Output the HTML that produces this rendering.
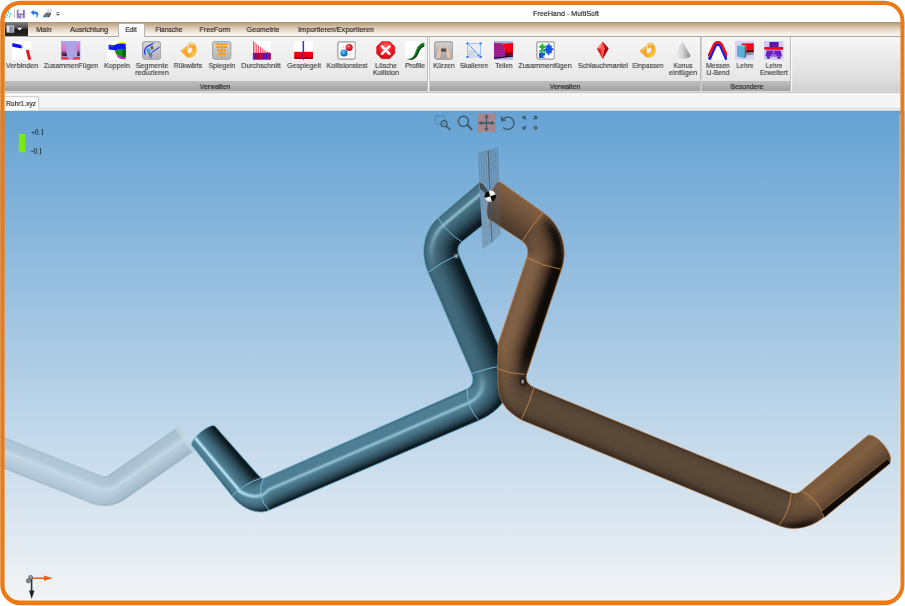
<!DOCTYPE html><html lang="de"><head><meta charset="utf-8"><title>FreeHand - MultiSoft</title><style>
html,body{margin:0;padding:0;background:#fff}
body{width:905px;height:606px;position:relative;overflow:hidden;font-family:"Liberation Sans", sans-serif}
#pg{position:absolute;left:0;top:0;width:905px;height:606px;overflow:hidden}
#pg div,#pg span,#pg svg{position:absolute}
.lb,.tb,.gl,.tt,.dt,.lg{will-change:transform}
.lb,.tb,.gl,.tt,.dt{-webkit-text-stroke:0.13px currentColor}
.lb,.tb,.gl,.tt,.dt{white-space:nowrap;line-height:1;transform-origin:50% 50%}
.lb{font-size:7.6px;color:#383838}
.tb{font-size:7.6px;color:#161616}
.gl{font-size:7.6px;color:#1c1c1c}
.tt{font-size:7.7px;color:#141414}
.dt{font-size:7.4px;color:#111}
.lg{font-family:"Liberation Serif",serif;font-size:7.2px;color:#0a0a14;line-height:1;white-space:nowrap}
</style></head><body><div id="pg"><div style="left:0;top:0;width:905px;height:22px;background:#fff"></div><svg width="70" height="16" viewBox="0 0 70 16" style="left:4px;top:6px"><circle cx="3.2" cy="4.2" r="1.0" fill="#38d4f4"/><circle cx="5.4" cy="3.4" r="0.9" fill="#38d4f4"/><circle cx="2.4" cy="6.6" r="0.9" fill="#38d4f4"/><circle cx="4.6" cy="6.2" r="1.0" fill="#38d4f4"/><circle cx="6.4" cy="8.2" r="1.0" fill="#38d4f4"/><circle cx="3.4" cy="9.2" r="1.0" fill="#38d4f4"/><circle cx="1.8" cy="11.2" r="0.9" fill="#38d4f4"/><circle cx="5.4" cy="10.6" r="0.8" fill="#38d4f4"/><rect x="10.2" y="3.6" width=".6" height="8.4" fill="#9a9a9a"/><path d="M12.8 3.8 h8 v8.4 h-8z" fill="#8a72c8"/><rect x="14.4" y="3.8" width="4.6" height="3.8" fill="#f4f2fa"/><rect x="14.6" y="9" width="4.4" height="3.2" fill="#d8d0ee"/><rect x="15.2" y="9.6" width="1.4" height="2.6" fill="#6a52b0"/><path d="M26.6 6.6 l3 -2.6 l.3 1.6 q4.400 -.6 4.400 3 q-.3 2.600 -2.400 3.600 q1.600 -2.400 .4 -3.800 q-.9 -.9 -2.300 -.6 l.3 1.600z" fill="#2a78e8"/><path d="M39.4 9.400 l3 -3 h4.600 l-2 3.400z" fill="#6a7078"/><path d="M42.600 6.200 l1.600 -2.600 h4 l-1.400 2.800z" fill="#e8e8ec" stroke="#a0a4aa" stroke-width=".3"/><path d="M39.4 9.400 h5.600 l2 -3 v1.800 l-2 3 h-5.600z" fill="#3a4048"/><rect x="40.600" y="10.2" width="3.400" height=".8" fill="#38a8e0"/><rect x="52.2" y="6.400" width="3.400" height=".7" fill="#444"/><path d="M52.2 8 h3.400 l-1.700 1.800z" fill="#444"/></svg><span class="tt" style="left:565.50px;top:10.20px;transform:translateX(-50%) scaleX(0.9306)">FreeHand - MultiSoft</span><div style="left:0;top:21.6px;width:905px;height:14.6px;background:linear-gradient(#b39474 0%,#c9b094 22%,#e3d3c0 50%,#f3ebe2 78%,#faf6f1 100%)"></div><div style="left:0;top:35.6px;width:905px;height:1.1px;background:#a9a9a9"></div><div style="left:5px;top:22px;width:22.5px;height:13.6px;background:linear-gradient(#828282,#4a4a4a 42%,#161616 56%,#2a2a2a)"></div><svg width="23" height="14" viewBox="0 0 23 14" style="left:5px;top:22px"><rect x="1.6" y="3.6" width="7.6" height="7" rx=".6" fill="#f4f4f4"/><rect x="4.2" y="4.2" width="4.4" height="5.8" fill="#8a94a6"/><rect x="2.2" y="4.2" width="1.400" height="5.800" fill="#d4d8e0"/><path d="M12 5.800 h5.200 l-2.600 2.800z" fill="#fff"/></svg><div style="left:117.6px;top:22.6px;width:27.6px;height:14.2px;background:linear-gradient(#ffffff,#f6f6f6);border:0.7px solid #b9b2aa;border-bottom:none;border-radius:2px 2px 0 0;box-sizing:border-box"></div><span class="tb" style="left:44.35px;top:25.60px;transform:translateX(-50%) scaleX(0.9290)">Main</span><span class="tb" style="left:89.00px;top:25.60px;transform:translateX(-50%) scaleX(0.9474)">Ausrichtung</span><span class="tb" style="left:131.35px;top:25.60px;transform:translateX(-50%) scaleX(0.8630)">Edit</span><span class="tb" style="left:168.50px;top:25.60px;transform:translateX(-50%) scaleX(0.8758)">Flansche</span><span class="tb" style="left:214.50px;top:25.60px;transform:translateX(-50%) scaleX(0.9297)">FreeForm</span><span class="tb" style="left:263.20px;top:25.60px;transform:translateX(-50%) scaleX(0.9308)">Geometrie</span><span class="tb" style="left:335.60px;top:25.60px;transform:translateX(-50%) scaleX(0.9551)">Importieren/Exportieren</span><div style="left:0;top:36.7px;width:905px;height:55px;background:linear-gradient(#f6f6f6,#ededed 30%,#dfdfdf 72%,#d0d0d0)"></div><div style="left:5.0px;top:37.2px;width:422.0px;height:53.7px;background:linear-gradient(#f5f5f5,#ececec 55%,#e6e6e6 80%);box-shadow:-0.8px 0 0 #c6c6c6, 0.9px 0 0 #b6b6b6, 2.1px 0 0 #fcfcfc"></div><div style="left:5.0px;top:80.8px;width:422.0px;height:10.1px;background:linear-gradient(#bdbdbd,#b4b4b4 45%,#a9a9a9 70%,#a4a4a4)"></div><span class="gl" style="left:214.80px;top:82.60px;transform:translateX(-50%) scaleX(0.9143)">Verwalten</span><div style="left:430.0px;top:37.2px;width:269.8px;height:53.7px;background:linear-gradient(#f5f5f5,#ececec 55%,#e6e6e6 80%);box-shadow:-0.8px 0 0 #c6c6c6, 0.9px 0 0 #b6b6b6, 2.1px 0 0 #fcfcfc"></div><div style="left:430.0px;top:80.8px;width:269.8px;height:10.1px;background:linear-gradient(#bdbdbd,#b4b4b4 45%,#a9a9a9 70%,#a4a4a4)"></div><span class="gl" style="left:564.80px;top:82.60px;transform:translateX(-50%) scaleX(0.9143)">Verwalten</span><div style="left:702.4px;top:37.2px;width:87.6px;height:53.7px;background:linear-gradient(#f5f5f5,#ececec 55%,#e6e6e6 80%);box-shadow:-0.8px 0 0 #c6c6c6, 0.9px 0 0 #b6b6b6, 2.1px 0 0 #fcfcfc"></div><div style="left:702.4px;top:80.8px;width:87.6px;height:10.1px;background:linear-gradient(#bdbdbd,#b4b4b4 45%,#a9a9a9 70%,#a4a4a4)"></div><span class="gl" style="left:746.60px;top:82.60px;transform:translateX(-50%) scaleX(0.8983)">Besondere</span><div style="left:0;top:90.8px;width:905px;height:4.4px;background:linear-gradient(#dedede 0,#dcdcdc 30%,#c6c6c6 32%,#c8c8c8 55%,#f0f0f0 58%,#fafafa 100%)"></div><svg width="19.4" height="18.8" viewBox="0 0 19.4 18.8" style="left:12.00px;top:41.0px"><rect width="19.4" height="18.8" fill="#fff"/><path d="M0.3 2.1 L9.4 4.1 L9.7 7.4 L0.4 5.7Z" fill="#0a12f0"/><path d="M9.6 5 l1.3 .5 v1.2 l-1.2 -.2z" fill="#5d68f4"/><path d="M13.9 9.4 L16.6 8.6 L19.3 18.8 L16.2 18.8Z" fill="#f0101a"/></svg><span class="lb" style="left:21.70px;top:61.50px;transform:translateX(-50%) scaleX(0.9502)">Verbinden</span><svg width="19.4" height="18.8" viewBox="0 0 19.4 18.8" style="left:61.20px;top:41.0px"><rect width="19.4" height="18.8" fill="#aaa4e6"/><linearGradient id="zg1" x1="0" y1="0" x2="0" y2="1"><stop offset="0" stop-color="#e884d8"/><stop offset=".55" stop-color="#d070c8"/><stop offset=".8" stop-color="#5a2860"/><stop offset="1" stop-color="#1a0818"/></linearGradient><path d="M0.6 4 L4 2.6 L6 15.2 L0.6 14.6Z" fill="url(#zg1)"/><path d="M15 2.8 L18.6 2 L18.8 14.8 L16.4 15Z" fill="url(#zg1)"/><path d="M0.4 15.6 L6.6 16.2 L8.2 18.6 L0.4 18.6Z" fill="#e83848"/><path d="M12.2 16.6 L18.9 15.8 L18.9 18.6 L11.6 18.6Z" fill="#e83848"/><rect x="6.2" y="8" width="1.2" height="1.4" fill="#f070d0"/><rect x="13" y="7.6" width="1.2" height="1.4" fill="#f070d0"/></svg><span class="lb" style="left:70.90px;top:61.50px;transform:translateX(-50%) scaleX(0.9124)">ZusammenFügen</span><svg width="19.4" height="18.8" viewBox="0 0 19.4 18.8" style="left:107.00px;top:41.0px"><rect width="19.4" height="18.8" fill="#fff"/><path d="M9.6 2.2 Q14 -0.4 18.2 1.2 L18.8 3.6 L9.4 4Z" fill="#f4f010"/><path d="M1.6 3.4 L6.6 4.2 Q12 1.6 18.6 2.8 L19 8.6 Q13 7.2 8.4 9.8 L6.4 9 L1.6 8.4Z" fill="#1018f0"/><path d="M1.6 4 L6.4 4.8 L6.4 6 L1.6 5.2Z" fill="#4a54f6"/><path d="M8.2 9.8 Q12 6.8 18.9 8.2 L18.7 16.4 Q13 16.6 9.4 13.6 Q7.6 11.6 8.2 9.8Z" fill="#10901c"/><path d="M15.6 8 Q18 8 18.9 8.4 L18.7 16.4 Q17 16.6 15.4 16Z" fill="#0a6014"/><path d="M9.4 13.6 Q13 16.6 18.7 16.2 L18.5 18.2 Q13 18.8 10.6 16Z" fill="#c81cc8"/></svg><span class="lb" style="left:116.70px;top:61.50px;transform:translateX(-50%) scaleX(0.9256)">Koppeln</span><svg width="19.4" height="18.8" viewBox="0 0 19.4 18.8" style="left:142.00px;top:41.0px"><linearGradient id="bt1" x1="0" y1="0" x2="0" y2="1"><stop offset="0" stop-color="#d6d6d6"/><stop offset="1" stop-color="#b4b4b4"/></linearGradient><rect x="0.5" y="0.4" width="18.4" height="18" rx="2.8" fill="#b9b9b9" stroke="#999" stroke-width="0.8"/><rect x="1.5" y="1.4" width="16.4" height="16" rx="2" fill="url(#bt1)"/><path d="M3.2 13.8 Q1.2 8 5.2 5.6 L11.4 2.2" fill="none" stroke="#1420e8" stroke-width="1.1"/><path d="M5 7.8 L9.2 16.8" fill="none" stroke="#1420e8" stroke-width="1"/><path d="M9.6 11.6 L17.6 6" fill="none" stroke="#1420e8" stroke-width="1"/><path d="M4.2 8.6 L7.4 7.2 L9 11 L5.8 12.2Z" fill="#28a8e8"/><path d="M8 5.4 L10.6 4.4 L11.8 8 L9.4 9Z" fill="#6a6a6a"/><path d="M7.4 12.4 L9.6 11.6 L10.6 14.6 L8.6 15.4Z" fill="#7a7a7a"/></svg><span class="lb" style="left:151.70px;top:61.50px;transform:translateX(-50%) scaleX(0.9329)">Segmente</span><span class="lb" style="left:151.70px;top:69.40px;transform:translateX(-50%) scaleX(0.9334)">reduzieren</span><svg width="19.4" height="18.8" viewBox="0 0 19.4 18.8" style="left:178.50px;top:41.0px"><linearGradient id="ag1" x1="0" y1="0" x2=".6" y2="1"><stop offset="0" stop-color="#ffcf70"/><stop offset=".4" stop-color="#f8a21e"/><stop offset=".75" stop-color="#fbb428"/><stop offset="1" stop-color="#ffdc48"/></linearGradient><path d="M9.4 2.8 Q12.5 0.6 15.8 3.6 Q19 8.6 16.2 13.8 Q13 17.6 8.1 16 L8.1 12 Q11.4 13.4 13 11.2 Q14.4 8.6 12.8 6.6 Q11.6 5.6 10.3 7.4Z" fill="url(#ag1)" stroke="#ec9a20" stroke-width=".4"/><path d="M1.8 10 L8.4 4.8 L8.4 16.3Z" fill="#f9a826" stroke="#ec9a20" stroke-width=".4"/><path d="M10.4 3.2 Q13 2 15.2 4.4" fill="none" stroke="#fff2c8" stroke-width="1" stroke-opacity=".85"/><path d="M3.6 9.8 L7.6 6.6" fill="none" stroke="#ffe9a8" stroke-width=".8" stroke-opacity=".8"/></svg><span class="lb" style="left:188.20px;top:61.50px;transform:translateX(-50%) scaleX(0.9003)">Rükwärts</span><svg width="19.4" height="18.8" viewBox="0 0 19.4 18.8" style="left:212.20px;top:41.0px"><linearGradient id="bt2" x1="0" y1="0" x2="0" y2="1"><stop offset="0" stop-color="#d6d6d6"/><stop offset="1" stop-color="#b4b4b4"/></linearGradient><rect x="0.5" y="0.4" width="18.4" height="18" rx="2.8" fill="#b9b9b9" stroke="#999" stroke-width="0.8"/><rect x="1.5" y="1.4" width="16.4" height="16" rx="2" fill="url(#bt2)"/><g fill="#f89a18"><rect x="3.4" y="2.2" width="5.2" height="1.7"/><rect x="10.6" y="2.2" width="5.2" height="1.7"/><rect x="4.2" y="5" width="4.4" height="2.2"/><rect x="10.6" y="5" width="4.4" height="2.2"/><rect x="5.2" y="8.2" width="3.4" height="2.4"/><rect x="10.6" y="8.2" width="3.4" height="2.4"/><rect x="6" y="11.6" width="2.6" height="2.4"/><rect x="10.6" y="11.6" width="2.6" height="2.4"/><rect x="8.9" y="1.6" width="1.5" height="15.4"/></g></svg><span class="lb" style="left:221.90px;top:61.50px;transform:translateX(-50%) scaleX(0.9066)">Spiegeln</span><svg width="19.4" height="18.8" viewBox="0 0 19.4 18.8" style="left:251.60px;top:41.0px"><rect width="19.4" height="18.8" fill="#fff"/><rect x="0.8" y="11.8" width="18" height="6.8" fill="#2a10d8"/><rect x="1.0" y="0.2" width="0.75" height="18.4" fill="#f01020"/><rect x="2.6" y="1.2" width="0.75" height="17.4" fill="#f01020"/><rect x="4.4" y="3.0" width="0.75" height="15.6" fill="#f01020"/><rect x="6.2" y="4.6" width="0.75" height="14.0" fill="#f01020"/><rect x="8.0" y="6.0" width="0.75" height="12.6" fill="#f01020"/><rect x="9.8" y="7.4" width="0.75" height="11.2" fill="#f01020"/><rect x="11.6" y="8.6" width="0.75" height="10.0" fill="#f01020"/><rect x="13.4" y="9.6" width="0.75" height="9.0" fill="#f01020"/><rect x="15.0" y="10.4" width="0.75" height="8.2" fill="#f01020"/><rect x="16.6" y="11.2" width="0.75" height="7.4" fill="#f01020"/><rect x="18.0" y="12.0" width="0.75" height="6.6" fill="#f01020"/></svg><span class="lb" style="left:261.30px;top:61.50px;transform:translateX(-50%) scaleX(0.9356)">Durchschnitt</span><svg width="19.4" height="18.8" viewBox="0 0 19.4 18.8" style="left:293.90px;top:41.0px"><rect width="19.4" height="18.8" fill="#fff"/><linearGradient id="gsp" x1="0" y1="0" x2="0" y2="1"><stop offset="0" stop-color="#f80010"/><stop offset=".6" stop-color="#f00010"/><stop offset="1" stop-color="#800008"/></linearGradient><rect x="0.2" y="10.8" width="19" height="7.2" fill="url(#gsp)"/><rect x="8.6" y="0" width="1.5" height="18.8" fill="#3a28f0"/></svg><span class="lb" style="left:303.60px;top:61.50px;transform:translateX(-50%) scaleX(0.9308)">Gespiegelt</span><svg width="19.4" height="18.8" viewBox="0 0 19.4 18.8" style="left:336.80px;top:41.0px"><rect x="0.4" y="0.4" width="18.6" height="18" rx="2.6" fill="#cfcfcf" stroke="#9d9d9d" stroke-width="0.8"/><rect x="1.9" y="1.9" width="15.6" height="15" rx="1.2" fill="#fbfbfb"/><radialGradient id="kr" cx=".4" cy=".35" r=".7"><stop offset="0" stop-color="#ff8a80"/><stop offset=".5" stop-color="#e8202a"/><stop offset="1" stop-color="#b00818"/></radialGradient><radialGradient id="kb" cx=".4" cy=".35" r=".7"><stop offset="0" stop-color="#8ad0f8"/><stop offset=".5" stop-color="#1a88d8"/><stop offset="1" stop-color="#0a58a0"/></radialGradient><path d="M5.6 5.2 l1.6 1.4 M7.2 5.2 l-1.6 1.4 M12.6 12.4 l1.6 1.4 M14.2 12.4 l-1.6 1.4" stroke="#a8a8a8" stroke-width=".5"/><circle cx="12.2" cy="6.6" r="3.5" fill="url(#kr)"/><circle cx="7" cy="12" r="3.6" fill="url(#kb)"/></svg><span class="lb" style="left:346.50px;top:61.50px;transform:translateX(-50%) scaleX(0.9249)">Kollisionstest</span><svg width="19.4" height="18.8" viewBox="0 0 19.4 18.8" style="left:376.30px;top:41.0px"><radialGradient id="lr" cx=".5" cy=".3" r=".75"><stop offset="0" stop-color="#ff6a6a"/><stop offset=".55" stop-color="#f01822"/><stop offset="1" stop-color="#c00814"/></radialGradient><path d="M5.8 0.6 H13.6 L18.8 5.6 V12.6 L13.6 17.8 H5.8 L0.6 12.6 V5.6Z" fill="url(#lr)" stroke="#d01018" stroke-width=".5"/><path d="M6 5.4 L13.4 12.8 M13.4 5.4 L6 12.8" stroke="#fff" stroke-width="2.6" stroke-linecap="round"/></svg><span class="lb" style="left:386.00px;top:61.50px;transform:translateX(-50%) scaleX(0.8857)">Lösche</span><span class="lb" style="left:386.00px;top:69.40px;transform:translateX(-50%) scaleX(0.9193)">Kollision</span><svg width="19.4" height="18.8" viewBox="0 0 19.4 18.8" style="left:405.20px;top:41.0px"><rect width="19.4" height="18.8" fill="#fff"/><path d="M1.2 18.6 C8 18.6 9.5 14 11 9.5 C12.5 5 15 2.2 19.3 1.4 L19.3 5.6 C16 6.2 14.6 8.8 13.4 12 C11.8 16.6 9 18.8 4 18.8Z" fill="#0b6412"/><path d="M2.4 18.2 C8.6 18 10.2 13.6 11.6 9.6 C13 5.6 15.4 3 19.2 2.2" fill="none" stroke="#37a23e" stroke-width=".9"/><path d="M5 18.6 C9.6 18.4 11.6 16 13.2 11.8 C14.6 8.4 16.2 6 19.3 5.3" fill="none" stroke="#063008" stroke-width=".8"/></svg><span class="lb" style="left:414.90px;top:61.50px;transform:translateX(-50%) scaleX(0.9289)">Profile</span><svg width="19.4" height="18.8" viewBox="0 0 19.4 18.8" style="left:434.00px;top:41.0px"><linearGradient id="kz" x1="0" y1="0" x2="0" y2="1"><stop offset="0" stop-color="#cfcfcf"/><stop offset="1" stop-color="#a4a4a4"/></linearGradient><rect x="0.4" y="0.4" width="18.6" height="18" rx="2.8" fill="#b0b0b0" stroke="#959595" stroke-width="0.8"/><rect x="1.4" y="1.4" width="16.6" height="16" rx="2" fill="url(#kz)"/><rect x="5.6" y="7.4" width="8.2" height="3.4" rx=".6" fill="#5a5048"/><path d="M2.4 17 Q3.6 11 5 7.6 Q5.8 3.6 7 3.6 Q7.8 5 7 8.4 Q7.6 12 5.8 17Z" fill="#e6c4ac"/><path d="M17 17 Q15.8 11 14.4 7.6 Q13.6 3.6 12.4 3.6 Q11.6 5 12.4 8.4 Q11.8 12 13.6 17Z" fill="#e6c4ac"/></svg><span class="lb" style="left:443.70px;top:61.50px;transform:translateX(-50%) scaleX(0.8935)">Kürzen</span><svg width="19.4" height="18.8" viewBox="0 0 19.4 18.8" style="left:464.30px;top:41.0px"><rect x="3.4" y="2.4" width="13.2" height="13.6" fill="#e9ecf4" stroke="#7aa0f0" stroke-width=".6"/><rect x="3.6" y="9.2" width="8" height="6.6" fill="#d2d6de"/><path d="M4.4 3.2 L15.2 14.8" stroke="#4a88f0" stroke-width=".8"/><path d="M15.8 15.4 l-3 -.8 l2.2 -2.2Z" fill="#4a88f0"/><g fill="#2a70f0"><rect x="2.4" y="1.4" width="2" height="2"/><rect x="15.6" y="1.4" width="2" height="2"/><rect x="2.4" y="15" width="2" height="2"/><rect x="15.6" y="15" width="2" height="2"/></g></svg><span class="lb" style="left:474.00px;top:61.50px;transform:translateX(-50%) scaleX(0.8841)">Skalieren</span><svg width="19.4" height="18.8" viewBox="0 0 19.4 18.8" style="left:494.00px;top:41.0px"><rect width="19.4" height="18.8" fill="#b8b0ec"/><linearGradient id="tl1" x1="0" y1="0" x2="0" y2="1"><stop offset="0" stop-color="#f80010"/><stop offset=".6" stop-color="#f00010"/><stop offset="1" stop-color="#300008"/></linearGradient><path d="M0 1.8 L9.6 2.6 L11.4 15 L0 16.6Z" fill="#7a18b8"/><path d="M9.6 2.6 L19.4 2 L19.4 14.6 L11.4 15Z" fill="url(#tl1)"/><path d="M0 16.6 L11.4 15 L19.4 14.6 L19.4 15.6 L0 18Z" fill="#1a0828"/><path d="M0 3.2 L10.4 3.7" stroke="#f02838" stroke-width=".6"/><path d="M0 5.1 L10.4 5.6" stroke="#f02838" stroke-width=".6"/><path d="M0 7.0 L10.4 7.5" stroke="#f02838" stroke-width=".6"/><path d="M0 8.9 L10.4 9.4" stroke="#f02838" stroke-width=".6"/><path d="M0 10.8 L10.4 11.3" stroke="#f02838" stroke-width=".6"/><path d="M0 12.7 L10.4 13.2" stroke="#f02838" stroke-width=".6"/><path d="M0 14.6 L10.4 15.1" stroke="#f02838" stroke-width=".6"/></svg><span class="lb" style="left:503.70px;top:61.50px;transform:translateX(-50%) scaleX(0.8819)">Teilen</span><svg width="19.4" height="18.8" viewBox="0 0 19.4 18.8" style="left:535.70px;top:41.0px"><rect x="0.4" y="0.4" width="18.6" height="18" rx="2.6" fill="#cfcfcf" stroke="#9d9d9d" stroke-width="0.8"/><rect x="1.9" y="1.9" width="15.6" height="15" rx="1.2" fill="#fbfbfb"/><path d="M9.8 4.4 h2 q-.6 -2 .9 -2 q1.5 0 .9 2 h2.2 v3 q2 -.6 2 .9 q0 1.5 -2 .9 v3 h-2.4 q.7 2 -.8 2 q-1.5 0 -.8 -2 h-2 v-2.6 q-2 .7 -2 -.8 q0 -1.5 2 -.8z" fill="#1858e0"/><path d="M3 12 h2 q-.6 -1.8 .8 -1.8 q1.4 0 .8 1.8 h2.4 v2.6 q-1.8 -.6 -1.8 .8 q0 1.4 1.8 .8 v.8 h-6z" fill="#1858e0"/><path d="M3.4 4.6 h2 q-.6 -2 .9 -2 q1.5 0 .9 2 h2.2 v2.6 q-1.900 -.6 -1.900 .9 q0 1.500 1.900 .9 v2.6 h-2.2 q.6 -1.900 -.9 -1.900 q-1.500 0 -.9 1.900 h-2 v-2.6 q1.900 .6 1.900 -.9 q0 -1.500 -1.900 -.9z" fill="#18b828"/></svg><span class="lb" style="left:545.40px;top:61.50px;transform:translateX(-50%) scaleX(0.9353)">Zusammenfügen</span><svg width="19.4" height="18.8" viewBox="0 0 19.4 18.8" style="left:593.00px;top:41.0px"><path d="M9.7 0.8 L15.6 7.4 L9.7 18 L3.8 7.4Z" fill="#e81420"/><path d="M9.7 0.8 L12 7.4 L9.7 18 L7.4 7.4Z" fill="#ff5a50"/><path d="M9.7 0.8 L7.4 7.4 L3.8 7.4Z" fill="#ff9a8a"/><path d="M9.7 0.8 L12 7.4 L15.6 7.4Z" fill="#c00814"/><path d="M12 7.4 L15.6 7.4 L9.7 18Z" fill="#a00410"/></svg><span class="lb" style="left:602.70px;top:61.50px;transform:translateX(-50%) scaleX(0.9251)">Schlauchmantel</span><svg width="19.4" height="18.8" viewBox="0 0 19.4 18.8" style="left:638.30px;top:41.0px"><linearGradient id="ag2" x1="0" y1="0" x2=".6" y2="1"><stop offset="0" stop-color="#ffcf70"/><stop offset=".4" stop-color="#f8a21e"/><stop offset=".75" stop-color="#fbb428"/><stop offset="1" stop-color="#ffdc48"/></linearGradient><path d="M9.4 2.8 Q12.5 0.6 15.8 3.6 Q19 8.6 16.2 13.8 Q13 17.6 8.1 16 L8.1 12 Q11.4 13.4 13 11.2 Q14.4 8.6 12.8 6.6 Q11.6 5.6 10.3 7.4Z" fill="url(#ag2)" stroke="#ec9a20" stroke-width=".4"/><path d="M1.8 10 L8.4 4.8 L8.4 16.3Z" fill="#f9a826" stroke="#ec9a20" stroke-width=".4"/><path d="M10.4 3.2 Q13 2 15.2 4.4" fill="none" stroke="#fff2c8" stroke-width="1" stroke-opacity=".85"/><path d="M3.6 9.8 L7.6 6.6" fill="none" stroke="#ffe9a8" stroke-width=".8" stroke-opacity=".8"/></svg><span class="lb" style="left:648.00px;top:61.50px;transform:translateX(-50%) scaleX(0.8796)">Einpassen</span><svg width="19.4" height="18.8" viewBox="0 0 19.4 18.8" style="left:673.30px;top:41.0px"><linearGradient id="kn" x1="0" y1="0" x2="1" y2="0"><stop offset="0" stop-color="#f4f4f4"/><stop offset=".45" stop-color="#d8d8d8"/><stop offset="1" stop-color="#8e8e8e"/></linearGradient><path d="M9.4 0.4 L17.6 14.6 Q17.4 17.6 9.8 17.8 Q2 17.6 1.6 14.8Z" fill="url(#kn)"/></svg><span class="lb" style="left:683.00px;top:61.50px;transform:translateX(-50%) scaleX(0.8725)">Konus</span><span class="lb" style="left:683.00px;top:69.40px;transform:translateX(-50%) scaleX(0.9609)">einfügen</span><svg width="19.4" height="18.8" viewBox="0 0 19.4 18.8" style="left:708.00px;top:41.0px"><rect width="19.4" height="18.8" fill="#fff"/><path d="M1.2 18.6 L7 5.4 Q9.8 1.2 12.8 5.4 L18.6 18.6" fill="none" stroke="#1020e8" stroke-width="3"/><path d="M0.4 15.4 L6 3.6 Q9.8 -1.6 13.8 3.6 L19.2 15.4" fill="none" stroke="#f01018" stroke-width="2.6"/><path d="M4.6 18.6 L9 9.6 Q9.8 8.6 10.8 9.6 L15.2 18.6" fill="none" stroke="#fff" stroke-width="1.4"/></svg><span class="lb" style="left:717.70px;top:61.50px;transform:translateX(-50%) scaleX(0.8949)">Messen</span><span class="lb" style="left:717.70px;top:69.40px;transform:translateX(-50%) scaleX(0.8932)">U-Bend</span><svg width="19.4" height="18.8" viewBox="0 0 19.4 18.8" style="left:735.00px;top:41.0px"><rect width="19.4" height="18.8" fill="#d8d4fa"/><path d="M2 4.4 L9.4 5.6 L9.4 17.2 L2 15.4Z" fill="#58b0d8"/><path d="M9.4 5.6 L11.2 4.8 L11.2 16 L9.4 17.2Z" fill="#2a7898"/><path d="M2 4.4 L4 3.4 L11.2 4.8 L9.4 5.6Z" fill="#90d0e8"/><path d="M6.6 2.4 L18.8 2.2 L18.8 8.6 L11.2 9.2 L11.2 4.8 L6.6 4Z" fill="#f00818"/><path d="M11.2 9.2 L18.8 8.6 L18.8 11 L11.2 12Z" fill="#600010"/><path d="M11.2 12 L18.8 11 L18.8 13.4 L11.2 14.6Z" fill="#8890a8"/></svg><span class="lb" style="left:744.70px;top:61.50px;transform:translateX(-50%) scaleX(0.8746)">Lehre</span><svg width="19.4" height="18.8" viewBox="0 0 19.4 18.8" style="left:764.30px;top:41.0px"><rect width="19.4" height="18.8" fill="#d0ccf8"/><rect x="5.4" y="1" width="9.2" height="5" fill="#5a18a8"/><path d="M2.6 9.6 L16.8 9.6 L18 15.6 L1.4 15.6Z" fill="#6a20c0"/><rect x="3" y="15.6" width="3" height="2" fill="#4a1090"/><rect x="13.4" y="15.6" width="3" height="2" fill="#4a1090"/><rect x="7" y="13" width="5.4" height="2" fill="#9a60e0"/><rect x="0.4" y="6" width="18.6" height="2.8" fill="#f00818"/><circle cx="9.7" cy="11.2" r=".7" fill="#fff"/></svg><span class="lb" style="left:774.00px;top:61.50px;transform:translateX(-50%) scaleX(0.8643)">Lehre</span><span class="lb" style="left:774.00px;top:69.40px;transform:translateX(-50%) scaleX(0.9343)">Erweitert</span><div style="left:0;top:95.1px;width:905px;height:16px;background:#f5f5f5"></div><svg width="905" height="20" viewBox="0 94 905 20" style="left:0;top:94px"><rect x="0" y="108.4" width="905" height="0.9" fill="#c2c2c2"/><rect x="0" y="109.3" width="905" height="1.2" fill="#fdfdfd"/><rect x="0" y="110.4" width="905" height="0.6" fill="#aeb4bc"/><path d="M4 110.4 V96.7 H38.7 V109.3" fill="#fff" stroke="#c4c4c4" stroke-width="0.9"/><rect x="4" y="108" width="34.2" height="2.4" fill="#fff"/></svg><span class="dt" style="left:20.50px;top:99.60px;transform:translateX(-50%) scaleX(0.9014)">Rohr1.xyz</span><div style="left:0;top:110.9px;width:905px;height:489.6px;background:linear-gradient(#65a2d3,#f2f4f6)"></div><svg width="905" height="606" viewBox="0 0 905 606" style="left:0;top:0"><defs><linearGradient id="g0" gradientUnits="userSpaceOnUse" x1="48.87" y1="454.81" x2="37.97" y2="482.23"><stop offset="0" stop-color="#a3bbcc"/><stop offset="0.0417" stop-color="#abc3d3"/><stop offset="0.0833" stop-color="#afc6d6"/><stop offset="0.125" stop-color="#b0c7d7"/><stop offset="0.167" stop-color="#b1c8d8"/><stop offset="0.208" stop-color="#b2c8d8"/><stop offset="0.25" stop-color="#b3c9d9"/><stop offset="0.292" stop-color="#b4cada"/><stop offset="0.333" stop-color="#b7cddc"/><stop offset="0.375" stop-color="#bcd0df"/><stop offset="0.417" stop-color="#c0d4e3"/><stop offset="0.458" stop-color="#c6d9e7"/><stop offset="0.5" stop-color="#c1d4e3"/><stop offset="0.542" stop-color="#bdd1e0"/><stop offset="0.583" stop-color="#bcd0df"/><stop offset="0.625" stop-color="#bacfde"/><stop offset="0.667" stop-color="#b9cedd"/><stop offset="0.708" stop-color="#b8cddc"/><stop offset="0.75" stop-color="#b6cbda"/><stop offset="0.792" stop-color="#b4c9d9"/><stop offset="0.833" stop-color="#b2c8d7"/><stop offset="0.875" stop-color="#b0c6d6"/><stop offset="0.917" stop-color="#adc4d4"/><stop offset="0.958" stop-color="#aac0d1"/><stop offset="1" stop-color="#a6bdce"/></linearGradient><linearGradient id="g1" gradientUnits="userSpaceOnUse" x1="102.58" y1="476.14" x2="93.06" y2="504.02"><stop offset="0" stop-color="#a3bbcc"/><stop offset="0.0417" stop-color="#abc2d3"/><stop offset="0.0833" stop-color="#afc6d6"/><stop offset="0.125" stop-color="#b0c7d7"/><stop offset="0.167" stop-color="#b1c7d8"/><stop offset="0.208" stop-color="#b2c8d8"/><stop offset="0.25" stop-color="#b3c9d9"/><stop offset="0.292" stop-color="#b4cada"/><stop offset="0.333" stop-color="#b7ccdc"/><stop offset="0.375" stop-color="#bbd0df"/><stop offset="0.417" stop-color="#c0d4e3"/><stop offset="0.458" stop-color="#c6d9e7"/><stop offset="0.5" stop-color="#c1d4e3"/><stop offset="0.542" stop-color="#bdd1e0"/><stop offset="0.583" stop-color="#bcd0df"/><stop offset="0.625" stop-color="#bacfde"/><stop offset="0.667" stop-color="#b9cedd"/><stop offset="0.708" stop-color="#b7ccdb"/><stop offset="0.75" stop-color="#b5cbda"/><stop offset="0.792" stop-color="#b3c9d8"/><stop offset="0.833" stop-color="#b2c7d7"/><stop offset="0.875" stop-color="#b0c6d5"/><stop offset="0.917" stop-color="#adc3d3"/><stop offset="0.958" stop-color="#a9c0d0"/><stop offset="1" stop-color="#a5bcce"/></linearGradient><linearGradient id="g2" gradientUnits="userSpaceOnUse" x1="103.17" y1="476.31" x2="96.44" y2="504.99"><stop offset="0" stop-color="#a2bacc"/><stop offset="0.0417" stop-color="#abc2d2"/><stop offset="0.0833" stop-color="#afc5d6"/><stop offset="0.125" stop-color="#afc6d6"/><stop offset="0.167" stop-color="#b0c7d7"/><stop offset="0.208" stop-color="#b1c8d8"/><stop offset="0.25" stop-color="#b2c8d8"/><stop offset="0.292" stop-color="#b3c9d9"/><stop offset="0.333" stop-color="#b7ccdc"/><stop offset="0.375" stop-color="#bbd0df"/><stop offset="0.417" stop-color="#bfd3e2"/><stop offset="0.458" stop-color="#c5d8e6"/><stop offset="0.5" stop-color="#c1d4e3"/><stop offset="0.542" stop-color="#bdd1e0"/><stop offset="0.583" stop-color="#bbd0df"/><stop offset="0.625" stop-color="#bacedd"/><stop offset="0.667" stop-color="#b8cddc"/><stop offset="0.708" stop-color="#b6ccdb"/><stop offset="0.75" stop-color="#b4cad9"/><stop offset="0.792" stop-color="#b2c8d8"/><stop offset="0.833" stop-color="#b1c6d6"/><stop offset="0.875" stop-color="#afc5d5"/><stop offset="0.917" stop-color="#acc2d3"/><stop offset="0.958" stop-color="#a8bfd0"/><stop offset="1" stop-color="#a4bbcc"/></linearGradient><linearGradient id="g3" gradientUnits="userSpaceOnUse" x1="103.77" y1="476.42" x2="99.90" y2="505.62"><stop offset="0" stop-color="#a2bacb"/><stop offset="0.0417" stop-color="#aac1d2"/><stop offset="0.0833" stop-color="#aec5d5"/><stop offset="0.125" stop-color="#afc6d6"/><stop offset="0.167" stop-color="#b0c6d6"/><stop offset="0.208" stop-color="#b1c7d7"/><stop offset="0.25" stop-color="#b1c8d8"/><stop offset="0.292" stop-color="#b2c8d8"/><stop offset="0.333" stop-color="#b6cbdb"/><stop offset="0.375" stop-color="#bacfde"/><stop offset="0.417" stop-color="#bfd3e2"/><stop offset="0.458" stop-color="#c5d8e6"/><stop offset="0.5" stop-color="#c1d4e3"/><stop offset="0.542" stop-color="#bdd1e0"/><stop offset="0.583" stop-color="#bbcfde"/><stop offset="0.625" stop-color="#b9cedd"/><stop offset="0.667" stop-color="#b7ccdc"/><stop offset="0.708" stop-color="#b6cbda"/><stop offset="0.75" stop-color="#b4c9d9"/><stop offset="0.792" stop-color="#b2c7d7"/><stop offset="0.833" stop-color="#b0c6d6"/><stop offset="0.875" stop-color="#adc4d4"/><stop offset="0.917" stop-color="#abc1d2"/><stop offset="0.958" stop-color="#a7becf"/><stop offset="1" stop-color="#a3bacc"/></linearGradient><linearGradient id="g4" gradientUnits="userSpaceOnUse" x1="104.39" y1="476.47" x2="103.41" y2="505.91"><stop offset="0" stop-color="#a2bacb"/><stop offset="0.0417" stop-color="#a9c1d1"/><stop offset="0.0833" stop-color="#adc4d5"/><stop offset="0.125" stop-color="#aec5d5"/><stop offset="0.167" stop-color="#afc6d6"/><stop offset="0.208" stop-color="#b0c6d7"/><stop offset="0.25" stop-color="#b1c7d7"/><stop offset="0.292" stop-color="#b2c8d8"/><stop offset="0.333" stop-color="#b6cbdb"/><stop offset="0.375" stop-color="#bacfde"/><stop offset="0.417" stop-color="#bfd3e2"/><stop offset="0.458" stop-color="#c5d8e6"/><stop offset="0.5" stop-color="#c1d4e3"/><stop offset="0.542" stop-color="#bdd0df"/><stop offset="0.583" stop-color="#bbcfde"/><stop offset="0.625" stop-color="#b9cddc"/><stop offset="0.667" stop-color="#b7ccdb"/><stop offset="0.708" stop-color="#b5cada"/><stop offset="0.75" stop-color="#b3c8d8"/><stop offset="0.792" stop-color="#b1c7d6"/><stop offset="0.833" stop-color="#afc5d5"/><stop offset="0.875" stop-color="#acc3d3"/><stop offset="0.917" stop-color="#aac0d1"/><stop offset="0.958" stop-color="#a6bdce"/><stop offset="1" stop-color="#a2b9ca"/></linearGradient><linearGradient id="g5" gradientUnits="userSpaceOnUse" x1="105.00" y1="476.46" x2="106.92" y2="505.85"><stop offset="0" stop-color="#a1b9cb"/><stop offset="0.0417" stop-color="#a9c0d1"/><stop offset="0.0833" stop-color="#adc4d4"/><stop offset="0.125" stop-color="#aec4d5"/><stop offset="0.167" stop-color="#afc5d5"/><stop offset="0.208" stop-color="#afc6d6"/><stop offset="0.25" stop-color="#b0c6d7"/><stop offset="0.292" stop-color="#b1c7d7"/><stop offset="0.333" stop-color="#b5cada"/><stop offset="0.375" stop-color="#bacede"/><stop offset="0.417" stop-color="#bed2e1"/><stop offset="0.458" stop-color="#c5d8e6"/><stop offset="0.5" stop-color="#c1d4e3"/><stop offset="0.542" stop-color="#bcd0df"/><stop offset="0.583" stop-color="#bacede"/><stop offset="0.625" stop-color="#b8cddc"/><stop offset="0.667" stop-color="#b6cbdb"/><stop offset="0.708" stop-color="#b4c9d9"/><stop offset="0.75" stop-color="#b2c8d7"/><stop offset="0.792" stop-color="#b0c6d6"/><stop offset="0.833" stop-color="#aec4d4"/><stop offset="0.875" stop-color="#abc2d2"/><stop offset="0.917" stop-color="#a8bfd0"/><stop offset="0.958" stop-color="#a5bccd"/><stop offset="1" stop-color="#a1b8ca"/></linearGradient><linearGradient id="g6" gradientUnits="userSpaceOnUse" x1="105.61" y1="476.39" x2="110.42" y2="505.44"><stop offset="0" stop-color="#a1b9ca"/><stop offset="0.0417" stop-color="#a8c0d1"/><stop offset="0.0833" stop-color="#acc3d4"/><stop offset="0.125" stop-color="#adc4d4"/><stop offset="0.167" stop-color="#aec4d5"/><stop offset="0.208" stop-color="#afc5d5"/><stop offset="0.25" stop-color="#b0c6d6"/><stop offset="0.292" stop-color="#b1c7d7"/><stop offset="0.333" stop-color="#b4cada"/><stop offset="0.375" stop-color="#b9cedd"/><stop offset="0.417" stop-color="#bed2e1"/><stop offset="0.458" stop-color="#c4d7e6"/><stop offset="0.5" stop-color="#c1d4e2"/><stop offset="0.542" stop-color="#bcd0df"/><stop offset="0.583" stop-color="#bacedd"/><stop offset="0.625" stop-color="#b8ccdc"/><stop offset="0.667" stop-color="#b5cbda"/><stop offset="0.708" stop-color="#b3c9d8"/><stop offset="0.75" stop-color="#b1c7d7"/><stop offset="0.792" stop-color="#afc5d5"/><stop offset="0.833" stop-color="#adc3d3"/><stop offset="0.875" stop-color="#aac1d2"/><stop offset="0.917" stop-color="#a7bfcf"/><stop offset="0.958" stop-color="#a3bbcc"/><stop offset="1" stop-color="#9fb7c8"/></linearGradient><linearGradient id="g7" gradientUnits="userSpaceOnUse" x1="106.22" y1="476.26" x2="113.85" y2="504.69"><stop offset="0" stop-color="#a0b8ca"/><stop offset="0.0417" stop-color="#a8bfd0"/><stop offset="0.0833" stop-color="#acc2d3"/><stop offset="0.125" stop-color="#acc3d4"/><stop offset="0.167" stop-color="#adc4d4"/><stop offset="0.208" stop-color="#aec5d5"/><stop offset="0.25" stop-color="#afc5d5"/><stop offset="0.292" stop-color="#b0c6d6"/><stop offset="0.333" stop-color="#b4c9d9"/><stop offset="0.375" stop-color="#b9cedd"/><stop offset="0.417" stop-color="#bed2e1"/><stop offset="0.458" stop-color="#c4d7e5"/><stop offset="0.5" stop-color="#c1d4e2"/><stop offset="0.542" stop-color="#bccfde"/><stop offset="0.583" stop-color="#bacedd"/><stop offset="0.625" stop-color="#b7ccdb"/><stop offset="0.667" stop-color="#b5cad9"/><stop offset="0.708" stop-color="#b2c8d8"/><stop offset="0.75" stop-color="#b0c6d6"/><stop offset="0.792" stop-color="#aec4d4"/><stop offset="0.833" stop-color="#acc2d3"/><stop offset="0.875" stop-color="#a9c0d1"/><stop offset="0.917" stop-color="#a6bece"/><stop offset="0.958" stop-color="#a2bacb"/><stop offset="1" stop-color="#9eb6c8"/></linearGradient><linearGradient id="g8" gradientUnits="userSpaceOnUse" x1="106.80" y1="476.07" x2="117.20" y2="503.61"><stop offset="0" stop-color="#a0b8ca"/><stop offset="0.0417" stop-color="#a7bfd0"/><stop offset="0.0833" stop-color="#abc2d3"/><stop offset="0.125" stop-color="#acc3d3"/><stop offset="0.167" stop-color="#adc3d4"/><stop offset="0.208" stop-color="#aec4d4"/><stop offset="0.25" stop-color="#aec5d5"/><stop offset="0.292" stop-color="#afc5d5"/><stop offset="0.333" stop-color="#b3c9d9"/><stop offset="0.375" stop-color="#b8cddc"/><stop offset="0.417" stop-color="#bdd1e0"/><stop offset="0.458" stop-color="#c4d7e5"/><stop offset="0.5" stop-color="#c1d4e2"/><stop offset="0.542" stop-color="#bccfde"/><stop offset="0.583" stop-color="#b9cddc"/><stop offset="0.625" stop-color="#b7cbdb"/><stop offset="0.667" stop-color="#b4c9d9"/><stop offset="0.708" stop-color="#b2c7d7"/><stop offset="0.75" stop-color="#afc5d5"/><stop offset="0.792" stop-color="#adc3d4"/><stop offset="0.833" stop-color="#abc1d2"/><stop offset="0.875" stop-color="#a8bfd0"/><stop offset="0.917" stop-color="#a5bdce"/><stop offset="0.958" stop-color="#a1b9ca"/><stop offset="1" stop-color="#9db5c6"/></linearGradient><linearGradient id="g9" gradientUnits="userSpaceOnUse" x1="107.37" y1="475.83" x2="120.42" y2="502.20"><stop offset="0" stop-color="#a0b8c9"/><stop offset="0.0417" stop-color="#a7becf"/><stop offset="0.0833" stop-color="#aac1d2"/><stop offset="0.125" stop-color="#abc2d3"/><stop offset="0.167" stop-color="#acc3d3"/><stop offset="0.208" stop-color="#adc3d4"/><stop offset="0.25" stop-color="#aec4d4"/><stop offset="0.292" stop-color="#afc5d5"/><stop offset="0.333" stop-color="#b3c8d8"/><stop offset="0.375" stop-color="#b8cddc"/><stop offset="0.417" stop-color="#bdd1e0"/><stop offset="0.458" stop-color="#c4d7e5"/><stop offset="0.5" stop-color="#c1d4e2"/><stop offset="0.542" stop-color="#bbcfde"/><stop offset="0.583" stop-color="#b9cddc"/><stop offset="0.625" stop-color="#b6cbda"/><stop offset="0.667" stop-color="#b3c9d8"/><stop offset="0.708" stop-color="#b1c7d7"/><stop offset="0.75" stop-color="#aec5d5"/><stop offset="0.792" stop-color="#acc3d3"/><stop offset="0.833" stop-color="#aac1d1"/><stop offset="0.875" stop-color="#a7bfcf"/><stop offset="0.917" stop-color="#a4bccd"/><stop offset="0.958" stop-color="#a0b8c9"/><stop offset="1" stop-color="#9cb4c6"/></linearGradient><linearGradient id="g10" gradientUnits="userSpaceOnUse" x1="107.91" y1="475.53" x2="123.49" y2="500.47"><stop offset="0" stop-color="#9fb7c9"/><stop offset="0.0417" stop-color="#a6becf"/><stop offset="0.0833" stop-color="#aac1d2"/><stop offset="0.125" stop-color="#abc1d2"/><stop offset="0.167" stop-color="#acc2d3"/><stop offset="0.208" stop-color="#acc3d3"/><stop offset="0.25" stop-color="#adc3d4"/><stop offset="0.292" stop-color="#aec4d4"/><stop offset="0.333" stop-color="#b2c8d8"/><stop offset="0.375" stop-color="#b8ccdc"/><stop offset="0.417" stop-color="#bdd1e0"/><stop offset="0.458" stop-color="#c3d6e5"/><stop offset="0.5" stop-color="#c1d4e2"/><stop offset="0.542" stop-color="#bbcfde"/><stop offset="0.583" stop-color="#b8ccdc"/><stop offset="0.625" stop-color="#b6cada"/><stop offset="0.667" stop-color="#b3c8d8"/><stop offset="0.708" stop-color="#b0c6d6"/><stop offset="0.75" stop-color="#adc4d4"/><stop offset="0.792" stop-color="#abc2d2"/><stop offset="0.833" stop-color="#a9c0d0"/><stop offset="0.875" stop-color="#a6becf"/><stop offset="0.917" stop-color="#a3bbcc"/><stop offset="0.958" stop-color="#9fb7c8"/><stop offset="1" stop-color="#9bb3c4"/></linearGradient><linearGradient id="g11" gradientUnits="userSpaceOnUse" x1="143.32" y1="451.06" x2="160.00" y2="475.05"><stop offset="0" stop-color="#9fb7c9"/><stop offset="0.0417" stop-color="#a6bdcf"/><stop offset="0.0833" stop-color="#a9c0d1"/><stop offset="0.125" stop-color="#aac1d2"/><stop offset="0.167" stop-color="#abc2d2"/><stop offset="0.208" stop-color="#acc2d3"/><stop offset="0.25" stop-color="#adc3d3"/><stop offset="0.292" stop-color="#aec4d4"/><stop offset="0.333" stop-color="#b2c8d7"/><stop offset="0.375" stop-color="#b7ccdc"/><stop offset="0.417" stop-color="#bdd1e0"/><stop offset="0.458" stop-color="#c3d6e5"/><stop offset="0.5" stop-color="#c0d4e2"/><stop offset="0.542" stop-color="#bbcedd"/><stop offset="0.583" stop-color="#b8ccdb"/><stop offset="0.625" stop-color="#b5cada"/><stop offset="0.667" stop-color="#b2c8d8"/><stop offset="0.708" stop-color="#b0c6d6"/><stop offset="0.75" stop-color="#adc4d4"/><stop offset="0.792" stop-color="#aac1d2"/><stop offset="0.833" stop-color="#a8bfd0"/><stop offset="0.875" stop-color="#a6bdce"/><stop offset="0.917" stop-color="#a2bacb"/><stop offset="0.958" stop-color="#9eb6c8"/><stop offset="1" stop-color="#9ab2c4"/></linearGradient><linearGradient id="b0" gradientUnits="userSpaceOnUse" x1="236.29" y1="450.15" x2="211.87" y2="470.66"><stop offset="0" stop-color="#0c1b22"/><stop offset="0.025" stop-color="#0c1b22"/><stop offset="0.05" stop-color="#0c1b22"/><stop offset="0.075" stop-color="#0c1b22"/><stop offset="0.1" stop-color="#0d1c23"/><stop offset="0.125" stop-color="#102128"/><stop offset="0.15" stop-color="#14262f"/><stop offset="0.175" stop-color="#182c35"/><stop offset="0.2" stop-color="#1b323c"/><stop offset="0.225" stop-color="#1f3742"/><stop offset="0.25" stop-color="#233d49"/><stop offset="0.275" stop-color="#26424f"/><stop offset="0.3" stop-color="#2a4855"/><stop offset="0.325" stop-color="#2d4d5a"/><stop offset="0.35" stop-color="#305160"/><stop offset="0.375" stop-color="#345665"/><stop offset="0.4" stop-color="#375b6b"/><stop offset="0.425" stop-color="#395f70"/><stop offset="0.45" stop-color="#3c6374"/><stop offset="0.475" stop-color="#3f6779"/><stop offset="0.5" stop-color="#416b7d"/><stop offset="0.525" stop-color="#446e81"/><stop offset="0.55" stop-color="#467285"/><stop offset="0.575" stop-color="#487588"/><stop offset="0.6" stop-color="#4a788c"/><stop offset="0.625" stop-color="#4c7b8f"/><stop offset="0.65" stop-color="#528195"/><stop offset="0.675" stop-color="#6391a6"/><stop offset="0.7" stop-color="#87b4c6"/><stop offset="0.725" stop-color="#b3deee"/><stop offset="0.75" stop-color="#bde7f8"/><stop offset="0.775" stop-color="#97c3d5"/><stop offset="0.8" stop-color="#6897ab"/><stop offset="0.825" stop-color="#538397"/><stop offset="0.85" stop-color="#4e7e93"/><stop offset="0.875" stop-color="#4e7e93"/><stop offset="0.9" stop-color="#4d7d92"/><stop offset="0.925" stop-color="#4b798e"/><stop offset="0.95" stop-color="#477487"/><stop offset="0.975" stop-color="#416b7d"/><stop offset="1" stop-color="#30515f"/></linearGradient><linearGradient id="b1" gradientUnits="userSpaceOnUse" x1="257.74" y1="474.45" x2="233.00" y2="497.21"><stop offset="0" stop-color="#0c1b22"/><stop offset="0.025" stop-color="#0c1b22"/><stop offset="0.05" stop-color="#0c1b22"/><stop offset="0.075" stop-color="#0d1b22"/><stop offset="0.1" stop-color="#0f1e26"/><stop offset="0.125" stop-color="#12242c"/><stop offset="0.15" stop-color="#162a33"/><stop offset="0.175" stop-color="#1a303a"/><stop offset="0.2" stop-color="#1e3640"/><stop offset="0.225" stop-color="#223c47"/><stop offset="0.25" stop-color="#26414d"/><stop offset="0.275" stop-color="#294754"/><stop offset="0.3" stop-color="#2d4c59"/><stop offset="0.325" stop-color="#30515f"/><stop offset="0.35" stop-color="#335665"/><stop offset="0.375" stop-color="#365a6a"/><stop offset="0.4" stop-color="#395f6f"/><stop offset="0.425" stop-color="#3c6374"/><stop offset="0.45" stop-color="#3f6778"/><stop offset="0.475" stop-color="#416a7d"/><stop offset="0.5" stop-color="#436e81"/><stop offset="0.525" stop-color="#467184"/><stop offset="0.55" stop-color="#487488"/><stop offset="0.575" stop-color="#49778b"/><stop offset="0.6" stop-color="#4c7a8e"/><stop offset="0.625" stop-color="#4f7e93"/><stop offset="0.65" stop-color="#59889d"/><stop offset="0.675" stop-color="#73a1b4"/><stop offset="0.7" stop-color="#9ac6d8"/><stop offset="0.725" stop-color="#b7e2f2"/><stop offset="0.75" stop-color="#acd7e8"/><stop offset="0.775" stop-color="#82afc2"/><stop offset="0.8" stop-color="#5f8ea2"/><stop offset="0.825" stop-color="#518196"/><stop offset="0.85" stop-color="#4e7e93"/><stop offset="0.875" stop-color="#4e7e93"/><stop offset="0.9" stop-color="#4d7c90"/><stop offset="0.925" stop-color="#4a788c"/><stop offset="0.95" stop-color="#467285"/><stop offset="0.975" stop-color="#40687a"/><stop offset="1" stop-color="#2e4d5b"/></linearGradient><linearGradient id="b2" gradientUnits="userSpaceOnUse" x1="258.11" y1="474.86" x2="235.41" y2="499.85"><stop offset="0" stop-color="#0c1b22"/><stop offset="0.025" stop-color="#0c1b22"/><stop offset="0.05" stop-color="#0c1b22"/><stop offset="0.075" stop-color="#0e1e25"/><stop offset="0.1" stop-color="#13252d"/><stop offset="0.125" stop-color="#172b34"/><stop offset="0.15" stop-color="#1c323c"/><stop offset="0.175" stop-color="#203843"/><stop offset="0.2" stop-color="#243e4a"/><stop offset="0.225" stop-color="#284451"/><stop offset="0.25" stop-color="#2b4a57"/><stop offset="0.275" stop-color="#2f4f5d"/><stop offset="0.3" stop-color="#325463"/><stop offset="0.325" stop-color="#355969"/><stop offset="0.35" stop-color="#385d6e"/><stop offset="0.375" stop-color="#3b6273"/><stop offset="0.4" stop-color="#3e6677"/><stop offset="0.425" stop-color="#416a7c"/><stop offset="0.45" stop-color="#436d80"/><stop offset="0.475" stop-color="#457184"/><stop offset="0.5" stop-color="#477487"/><stop offset="0.525" stop-color="#49778b"/><stop offset="0.55" stop-color="#4b798e"/><stop offset="0.575" stop-color="#4d7c91"/><stop offset="0.6" stop-color="#507f94"/><stop offset="0.625" stop-color="#59889d"/><stop offset="0.65" stop-color="#709eb2"/><stop offset="0.675" stop-color="#96c2d4"/><stop offset="0.7" stop-color="#b3deee"/><stop offset="0.725" stop-color="#acd7e8"/><stop offset="0.75" stop-color="#85b3c5"/><stop offset="0.775" stop-color="#6291a5"/><stop offset="0.8" stop-color="#528297"/><stop offset="0.825" stop-color="#4e7e93"/><stop offset="0.85" stop-color="#4e7e93"/><stop offset="0.875" stop-color="#4d7c91"/><stop offset="0.9" stop-color="#4a788d"/><stop offset="0.925" stop-color="#477487"/><stop offset="0.95" stop-color="#436d7f"/><stop offset="0.975" stop-color="#3c6374"/><stop offset="1" stop-color="#294653"/></linearGradient><linearGradient id="b3" gradientUnits="userSpaceOnUse" x1="258.47" y1="475.27" x2="238.01" y2="502.32"><stop offset="0" stop-color="#0c1b22"/><stop offset="0.025" stop-color="#0c1b22"/><stop offset="0.05" stop-color="#0e1d24"/><stop offset="0.075" stop-color="#13242d"/><stop offset="0.1" stop-color="#182c35"/><stop offset="0.125" stop-color="#1d333e"/><stop offset="0.15" stop-color="#213a46"/><stop offset="0.175" stop-color="#25414d"/><stop offset="0.2" stop-color="#294754"/><stop offset="0.225" stop-color="#2d4d5b"/><stop offset="0.25" stop-color="#315261"/><stop offset="0.275" stop-color="#345767"/><stop offset="0.3" stop-color="#385c6c"/><stop offset="0.325" stop-color="#3b6171"/><stop offset="0.35" stop-color="#3d6576"/><stop offset="0.375" stop-color="#40697b"/><stop offset="0.4" stop-color="#436d7f"/><stop offset="0.425" stop-color="#457083"/><stop offset="0.45" stop-color="#477387"/><stop offset="0.475" stop-color="#49768a"/><stop offset="0.5" stop-color="#4b798d"/><stop offset="0.525" stop-color="#4c7b90"/><stop offset="0.55" stop-color="#4e7d92"/><stop offset="0.575" stop-color="#508095"/><stop offset="0.6" stop-color="#58889c"/><stop offset="0.625" stop-color="#6e9cb0"/><stop offset="0.65" stop-color="#92bed0"/><stop offset="0.675" stop-color="#afdaeb"/><stop offset="0.7" stop-color="#abd6e7"/><stop offset="0.725" stop-color="#88b5c7"/><stop offset="0.75" stop-color="#6493a7"/><stop offset="0.775" stop-color="#538398"/><stop offset="0.8" stop-color="#4f7f94"/><stop offset="0.825" stop-color="#4e7e93"/><stop offset="0.85" stop-color="#4d7c91"/><stop offset="0.875" stop-color="#4b798d"/><stop offset="0.9" stop-color="#487588"/><stop offset="0.925" stop-color="#446f82"/><stop offset="0.95" stop-color="#3f6779"/><stop offset="0.975" stop-color="#385c6d"/><stop offset="1" stop-color="#243f4b"/></linearGradient><linearGradient id="b4" gradientUnits="userSpaceOnUse" x1="258.84" y1="475.69" x2="240.78" y2="504.58"><stop offset="0" stop-color="#0c1b22"/><stop offset="0.025" stop-color="#0d1c22"/><stop offset="0.05" stop-color="#12232b"/><stop offset="0.075" stop-color="#182c35"/><stop offset="0.1" stop-color="#1d343f"/><stop offset="0.125" stop-color="#223c47"/><stop offset="0.15" stop-color="#27434f"/><stop offset="0.175" stop-color="#2b4957"/><stop offset="0.2" stop-color="#2f4f5e"/><stop offset="0.225" stop-color="#335564"/><stop offset="0.25" stop-color="#365a6a"/><stop offset="0.275" stop-color="#3a5f70"/><stop offset="0.3" stop-color="#3d6475"/><stop offset="0.325" stop-color="#3f687a"/><stop offset="0.35" stop-color="#426c7e"/><stop offset="0.375" stop-color="#447082"/><stop offset="0.4" stop-color="#477386"/><stop offset="0.425" stop-color="#49768a"/><stop offset="0.45" stop-color="#4a798d"/><stop offset="0.475" stop-color="#4c7b90"/><stop offset="0.5" stop-color="#4d7d92"/><stop offset="0.525" stop-color="#4e7e93"/><stop offset="0.55" stop-color="#508095"/><stop offset="0.575" stop-color="#58879c"/><stop offset="0.6" stop-color="#6d9baf"/><stop offset="0.625" stop-color="#8fbbce"/><stop offset="0.65" stop-color="#acd7e8"/><stop offset="0.675" stop-color="#a9d4e5"/><stop offset="0.7" stop-color="#88b5c8"/><stop offset="0.725" stop-color="#6695a9"/><stop offset="0.75" stop-color="#548498"/><stop offset="0.775" stop-color="#4f7f94"/><stop offset="0.8" stop-color="#4e7e93"/><stop offset="0.825" stop-color="#4d7c91"/><stop offset="0.85" stop-color="#4b798d"/><stop offset="0.875" stop-color="#487589"/><stop offset="0.9" stop-color="#457083"/><stop offset="0.925" stop-color="#416a7c"/><stop offset="0.95" stop-color="#3b6272"/><stop offset="0.975" stop-color="#335665"/><stop offset="1" stop-color="#1f3843"/></linearGradient><linearGradient id="b5" gradientUnits="userSpaceOnUse" x1="259.20" y1="476.10" x2="243.72" y2="506.62"><stop offset="0" stop-color="#0c1b22"/><stop offset="0.025" stop-color="#0f1f27"/><stop offset="0.05" stop-color="#172b34"/><stop offset="0.075" stop-color="#1d343f"/><stop offset="0.1" stop-color="#233d49"/><stop offset="0.125" stop-color="#284551"/><stop offset="0.15" stop-color="#2d4c59"/><stop offset="0.175" stop-color="#315261"/><stop offset="0.2" stop-color="#355867"/><stop offset="0.225" stop-color="#385d6d"/><stop offset="0.25" stop-color="#3b6273"/><stop offset="0.275" stop-color="#3f6778"/><stop offset="0.3" stop-color="#416b7d"/><stop offset="0.325" stop-color="#446f81"/><stop offset="0.35" stop-color="#467286"/><stop offset="0.375" stop-color="#487589"/><stop offset="0.4" stop-color="#4a788d"/><stop offset="0.425" stop-color="#4c7b8f"/><stop offset="0.45" stop-color="#4d7d91"/><stop offset="0.475" stop-color="#4e7e93"/><stop offset="0.5" stop-color="#4e7e93"/><stop offset="0.525" stop-color="#508095"/><stop offset="0.55" stop-color="#57879c"/><stop offset="0.575" stop-color="#6b9aae"/><stop offset="0.6" stop-color="#8cb9cb"/><stop offset="0.625" stop-color="#a8d4e5"/><stop offset="0.65" stop-color="#a7d2e3"/><stop offset="0.675" stop-color="#88b5c8"/><stop offset="0.7" stop-color="#6795a9"/><stop offset="0.725" stop-color="#558499"/><stop offset="0.75" stop-color="#4f7f94"/><stop offset="0.775" stop-color="#4e7e93"/><stop offset="0.8" stop-color="#4d7c91"/><stop offset="0.825" stop-color="#4b798d"/><stop offset="0.85" stop-color="#487589"/><stop offset="0.875" stop-color="#457084"/><stop offset="0.9" stop-color="#416b7d"/><stop offset="0.925" stop-color="#3d6475"/><stop offset="0.95" stop-color="#375b6b"/><stop offset="0.975" stop-color="#2f4f5d"/><stop offset="1" stop-color="#1b313b"/></linearGradient><linearGradient id="b6" gradientUnits="userSpaceOnUse" x1="259.57" y1="476.51" x2="246.82" y2="508.39"><stop offset="0" stop-color="#0c1b22"/><stop offset="0.025" stop-color="#14262f"/><stop offset="0.05" stop-color="#1c333d"/><stop offset="0.075" stop-color="#233d49"/><stop offset="0.1" stop-color="#294653"/><stop offset="0.125" stop-color="#2e4d5b"/><stop offset="0.15" stop-color="#325463"/><stop offset="0.175" stop-color="#365a6a"/><stop offset="0.2" stop-color="#3a6070"/><stop offset="0.225" stop-color="#3d6576"/><stop offset="0.25" stop-color="#40697b"/><stop offset="0.275" stop-color="#436e80"/><stop offset="0.3" stop-color="#467184"/><stop offset="0.325" stop-color="#487588"/><stop offset="0.35" stop-color="#4a788c"/><stop offset="0.375" stop-color="#4c7b8f"/><stop offset="0.4" stop-color="#4d7c91"/><stop offset="0.425" stop-color="#4e7e93"/><stop offset="0.45" stop-color="#4e7e93"/><stop offset="0.475" stop-color="#4e7e93"/><stop offset="0.5" stop-color="#508095"/><stop offset="0.525" stop-color="#57879b"/><stop offset="0.55" stop-color="#6a99ad"/><stop offset="0.575" stop-color="#8ab7c9"/><stop offset="0.6" stop-color="#a5d1e2"/><stop offset="0.625" stop-color="#a4d0e1"/><stop offset="0.65" stop-color="#87b4c7"/><stop offset="0.675" stop-color="#6796aa"/><stop offset="0.7" stop-color="#558599"/><stop offset="0.725" stop-color="#4f7f94"/><stop offset="0.75" stop-color="#4e7e92"/><stop offset="0.775" stop-color="#4c7c90"/><stop offset="0.8" stop-color="#4a798d"/><stop offset="0.825" stop-color="#487589"/><stop offset="0.85" stop-color="#457084"/><stop offset="0.875" stop-color="#426b7e"/><stop offset="0.9" stop-color="#3e6577"/><stop offset="0.925" stop-color="#395e6e"/><stop offset="0.95" stop-color="#335564"/><stop offset="0.975" stop-color="#2a4855"/><stop offset="1" stop-color="#162a32"/></linearGradient><linearGradient id="b7" gradientUnits="userSpaceOnUse" x1="259.93" y1="476.93" x2="250.08" y2="509.86"><stop offset="0" stop-color="#0c1b22"/><stop offset="0.025" stop-color="#192f38"/><stop offset="0.05" stop-color="#223c47"/><stop offset="0.075" stop-color="#294653"/><stop offset="0.1" stop-color="#2e4e5d"/><stop offset="0.125" stop-color="#335665"/><stop offset="0.15" stop-color="#385c6c"/><stop offset="0.175" stop-color="#3b6273"/><stop offset="0.2" stop-color="#3f6779"/><stop offset="0.225" stop-color="#426c7e"/><stop offset="0.25" stop-color="#457083"/><stop offset="0.275" stop-color="#477487"/><stop offset="0.3" stop-color="#49778b"/><stop offset="0.325" stop-color="#4b7a8e"/><stop offset="0.35" stop-color="#4d7c91"/><stop offset="0.375" stop-color="#4e7d92"/><stop offset="0.4" stop-color="#4e7e93"/><stop offset="0.425" stop-color="#4e7e93"/><stop offset="0.45" stop-color="#4e7e93"/><stop offset="0.475" stop-color="#508095"/><stop offset="0.5" stop-color="#57869b"/><stop offset="0.525" stop-color="#6a98ac"/><stop offset="0.55" stop-color="#88b5c8"/><stop offset="0.575" stop-color="#a2cedf"/><stop offset="0.6" stop-color="#a1cdde"/><stop offset="0.625" stop-color="#86b3c5"/><stop offset="0.65" stop-color="#6795a9"/><stop offset="0.675" stop-color="#558599"/><stop offset="0.7" stop-color="#4f7f94"/><stop offset="0.725" stop-color="#4e7d92"/><stop offset="0.75" stop-color="#4c7b90"/><stop offset="0.775" stop-color="#4a788c"/><stop offset="0.8" stop-color="#487488"/><stop offset="0.825" stop-color="#457083"/><stop offset="0.85" stop-color="#426b7e"/><stop offset="0.875" stop-color="#3e6677"/><stop offset="0.9" stop-color="#3a5f70"/><stop offset="0.925" stop-color="#345867"/><stop offset="0.95" stop-color="#2e4e5c"/><stop offset="0.975" stop-color="#26414d"/><stop offset="1" stop-color="#11232a"/></linearGradient><linearGradient id="b8" gradientUnits="userSpaceOnUse" x1="260.29" y1="477.34" x2="253.48" y2="510.98"><stop offset="0" stop-color="#0d1c23"/><stop offset="0.025" stop-color="#1f3742"/><stop offset="0.05" stop-color="#284551"/><stop offset="0.075" stop-color="#2f4f5d"/><stop offset="0.1" stop-color="#345766"/><stop offset="0.125" stop-color="#395e6e"/><stop offset="0.15" stop-color="#3d6475"/><stop offset="0.175" stop-color="#40697b"/><stop offset="0.2" stop-color="#436e81"/><stop offset="0.225" stop-color="#467286"/><stop offset="0.25" stop-color="#49768a"/><stop offset="0.275" stop-color="#4b798e"/><stop offset="0.3" stop-color="#4d7c91"/><stop offset="0.325" stop-color="#4d7d92"/><stop offset="0.35" stop-color="#4e7e93"/><stop offset="0.375" stop-color="#4e7e93"/><stop offset="0.4" stop-color="#4e7e93"/><stop offset="0.425" stop-color="#4e7e93"/><stop offset="0.45" stop-color="#508095"/><stop offset="0.475" stop-color="#57869b"/><stop offset="0.5" stop-color="#6997ab"/><stop offset="0.525" stop-color="#87b4c6"/><stop offset="0.55" stop-color="#9fcbdd"/><stop offset="0.575" stop-color="#9ecadb"/><stop offset="0.6" stop-color="#84b1c3"/><stop offset="0.625" stop-color="#6695a9"/><stop offset="0.65" stop-color="#558599"/><stop offset="0.675" stop-color="#4f7f94"/><stop offset="0.7" stop-color="#4d7d92"/><stop offset="0.725" stop-color="#4c7a8f"/><stop offset="0.75" stop-color="#4a778b"/><stop offset="0.775" stop-color="#477487"/><stop offset="0.8" stop-color="#447083"/><stop offset="0.825" stop-color="#416b7d"/><stop offset="0.85" stop-color="#3e6677"/><stop offset="0.875" stop-color="#3a6071"/><stop offset="0.9" stop-color="#355969"/><stop offset="0.925" stop-color="#30515f"/><stop offset="0.95" stop-color="#294754"/><stop offset="0.975" stop-color="#213a45"/><stop offset="1" stop-color="#0e1d24"/></linearGradient><linearGradient id="b9" gradientUnits="userSpaceOnUse" x1="260.66" y1="477.75" x2="256.98" y2="511.69"><stop offset="0" stop-color="#102129"/><stop offset="0.025" stop-color="#25404c"/><stop offset="0.05" stop-color="#2e4d5b"/><stop offset="0.075" stop-color="#345767"/><stop offset="0.1" stop-color="#395f70"/><stop offset="0.125" stop-color="#3e6677"/><stop offset="0.15" stop-color="#426b7d"/><stop offset="0.175" stop-color="#457083"/><stop offset="0.2" stop-color="#487488"/><stop offset="0.225" stop-color="#4a788c"/><stop offset="0.25" stop-color="#4c7b90"/><stop offset="0.275" stop-color="#4d7d92"/><stop offset="0.3" stop-color="#4e7e93"/><stop offset="0.325" stop-color="#4e7e93"/><stop offset="0.35" stop-color="#4e7e93"/><stop offset="0.375" stop-color="#4e7e93"/><stop offset="0.4" stop-color="#4e7e93"/><stop offset="0.425" stop-color="#508095"/><stop offset="0.45" stop-color="#56869b"/><stop offset="0.475" stop-color="#6897ab"/><stop offset="0.5" stop-color="#85b2c5"/><stop offset="0.525" stop-color="#9dc9da"/><stop offset="0.55" stop-color="#9bc7d8"/><stop offset="0.575" stop-color="#81aec1"/><stop offset="0.6" stop-color="#6594a8"/><stop offset="0.625" stop-color="#558499"/><stop offset="0.65" stop-color="#4f7f94"/><stop offset="0.675" stop-color="#4d7c91"/><stop offset="0.7" stop-color="#4b7a8e"/><stop offset="0.725" stop-color="#49768a"/><stop offset="0.75" stop-color="#477386"/><stop offset="0.775" stop-color="#446f82"/><stop offset="0.8" stop-color="#416a7d"/><stop offset="0.825" stop-color="#3e6577"/><stop offset="0.85" stop-color="#3a6070"/><stop offset="0.875" stop-color="#365969"/><stop offset="0.9" stop-color="#315261"/><stop offset="0.925" stop-color="#2b4a57"/><stop offset="0.95" stop-color="#253f4b"/><stop offset="0.975" stop-color="#1c323c"/><stop offset="1" stop-color="#0c1b22"/></linearGradient><linearGradient id="b10" gradientUnits="userSpaceOnUse" x1="261.04" y1="478.15" x2="260.54" y2="511.94"><stop offset="0" stop-color="#162a32"/><stop offset="0.025" stop-color="#2b4957"/><stop offset="0.05" stop-color="#335665"/><stop offset="0.075" stop-color="#3a5f70"/><stop offset="0.1" stop-color="#3e6778"/><stop offset="0.125" stop-color="#436d7f"/><stop offset="0.15" stop-color="#467285"/><stop offset="0.175" stop-color="#49768a"/><stop offset="0.2" stop-color="#4b7a8e"/><stop offset="0.225" stop-color="#4d7c91"/><stop offset="0.25" stop-color="#4e7e93"/><stop offset="0.275" stop-color="#4e7e93"/><stop offset="0.3" stop-color="#4e7e93"/><stop offset="0.325" stop-color="#4e7e93"/><stop offset="0.35" stop-color="#4e7e93"/><stop offset="0.375" stop-color="#4e7e93"/><stop offset="0.4" stop-color="#508094"/><stop offset="0.425" stop-color="#56869a"/><stop offset="0.45" stop-color="#6796aa"/><stop offset="0.475" stop-color="#83b0c3"/><stop offset="0.5" stop-color="#9ac6d8"/><stop offset="0.525" stop-color="#98c4d5"/><stop offset="0.55" stop-color="#7eacbf"/><stop offset="0.575" stop-color="#6492a6"/><stop offset="0.6" stop-color="#548499"/><stop offset="0.625" stop-color="#4f7e93"/><stop offset="0.65" stop-color="#4d7c90"/><stop offset="0.675" stop-color="#4a798d"/><stop offset="0.7" stop-color="#487589"/><stop offset="0.725" stop-color="#467285"/><stop offset="0.75" stop-color="#436e81"/><stop offset="0.775" stop-color="#406a7c"/><stop offset="0.8" stop-color="#3d6576"/><stop offset="0.825" stop-color="#3a5f70"/><stop offset="0.85" stop-color="#365969"/><stop offset="0.875" stop-color="#315362"/><stop offset="0.9" stop-color="#2c4b59"/><stop offset="0.925" stop-color="#26424f"/><stop offset="0.95" stop-color="#203843"/><stop offset="0.975" stop-color="#172b33"/><stop offset="1" stop-color="#0c1b22"/></linearGradient><linearGradient id="b11" gradientUnits="userSpaceOnUse" x1="261.47" y1="478.48" x2="264.10" y2="511.67"><stop offset="0" stop-color="#1c323d"/><stop offset="0.025" stop-color="#315261"/><stop offset="0.05" stop-color="#395e6f"/><stop offset="0.075" stop-color="#3f6779"/><stop offset="0.1" stop-color="#436e80"/><stop offset="0.125" stop-color="#477387"/><stop offset="0.15" stop-color="#4a788c"/><stop offset="0.175" stop-color="#4c7b90"/><stop offset="0.2" stop-color="#4d7d92"/><stop offset="0.225" stop-color="#4e7e93"/><stop offset="0.25" stop-color="#4e7e93"/><stop offset="0.275" stop-color="#4e7e93"/><stop offset="0.3" stop-color="#4e7e93"/><stop offset="0.325" stop-color="#4e7e93"/><stop offset="0.35" stop-color="#4e7e93"/><stop offset="0.375" stop-color="#4f7f94"/><stop offset="0.4" stop-color="#56859a"/><stop offset="0.425" stop-color="#6695a9"/><stop offset="0.45" stop-color="#81afc1"/><stop offset="0.475" stop-color="#97c3d5"/><stop offset="0.5" stop-color="#94c1d2"/><stop offset="0.525" stop-color="#7ca9bc"/><stop offset="0.55" stop-color="#6291a5"/><stop offset="0.575" stop-color="#548498"/><stop offset="0.6" stop-color="#4e7e93"/><stop offset="0.625" stop-color="#4c7b8f"/><stop offset="0.65" stop-color="#4a788c"/><stop offset="0.675" stop-color="#487488"/><stop offset="0.7" stop-color="#457184"/><stop offset="0.725" stop-color="#436d7f"/><stop offset="0.75" stop-color="#40697b"/><stop offset="0.775" stop-color="#3d6475"/><stop offset="0.8" stop-color="#395f6f"/><stop offset="0.825" stop-color="#355969"/><stop offset="0.85" stop-color="#315362"/><stop offset="0.875" stop-color="#2d4c5a"/><stop offset="0.9" stop-color="#274451"/><stop offset="0.925" stop-color="#223b46"/><stop offset="0.95" stop-color="#1a303a"/><stop offset="0.975" stop-color="#12232b"/><stop offset="1" stop-color="#0c1b22"/></linearGradient><linearGradient id="b12" gradientUnits="userSpaceOnUse" x1="261.97" y1="478.69" x2="267.56" y2="510.83"><stop offset="0" stop-color="#223c47"/><stop offset="0.025" stop-color="#375b6a"/><stop offset="0.05" stop-color="#3e6678"/><stop offset="0.075" stop-color="#436e81"/><stop offset="0.1" stop-color="#477488"/><stop offset="0.125" stop-color="#4b798d"/><stop offset="0.15" stop-color="#4d7c91"/><stop offset="0.175" stop-color="#4e7e93"/><stop offset="0.2" stop-color="#4e7e93"/><stop offset="0.225" stop-color="#4e7e93"/><stop offset="0.25" stop-color="#4e7e93"/><stop offset="0.275" stop-color="#4e7e93"/><stop offset="0.3" stop-color="#4e7e93"/><stop offset="0.325" stop-color="#4e7e93"/><stop offset="0.35" stop-color="#4f7f94"/><stop offset="0.375" stop-color="#558599"/><stop offset="0.4" stop-color="#6594a8"/><stop offset="0.425" stop-color="#80adc0"/><stop offset="0.45" stop-color="#94c1d2"/><stop offset="0.475" stop-color="#91bdcf"/><stop offset="0.5" stop-color="#79a7ba"/><stop offset="0.525" stop-color="#6190a4"/><stop offset="0.55" stop-color="#538397"/><stop offset="0.575" stop-color="#4e7d92"/><stop offset="0.6" stop-color="#4b7a8e"/><stop offset="0.625" stop-color="#49778a"/><stop offset="0.65" stop-color="#477387"/><stop offset="0.675" stop-color="#447083"/><stop offset="0.7" stop-color="#426c7e"/><stop offset="0.725" stop-color="#3f6779"/><stop offset="0.75" stop-color="#3c6374"/><stop offset="0.775" stop-color="#395e6e"/><stop offset="0.8" stop-color="#355868"/><stop offset="0.825" stop-color="#315261"/><stop offset="0.85" stop-color="#2d4c59"/><stop offset="0.875" stop-color="#284551"/><stop offset="0.9" stop-color="#223c48"/><stop offset="0.925" stop-color="#1c333d"/><stop offset="0.95" stop-color="#152831"/><stop offset="0.975" stop-color="#0e1d24"/><stop offset="1" stop-color="#0c1b22"/></linearGradient><linearGradient id="b13" gradientUnits="userSpaceOnUse" x1="262.51" y1="478.76" x2="270.91" y2="509.56"><stop offset="0" stop-color="#284552"/><stop offset="0.025" stop-color="#3c6374"/><stop offset="0.05" stop-color="#436d80"/><stop offset="0.075" stop-color="#487488"/><stop offset="0.1" stop-color="#4b7a8e"/><stop offset="0.125" stop-color="#4d7d92"/><stop offset="0.15" stop-color="#4e7e93"/><stop offset="0.175" stop-color="#4e7e93"/><stop offset="0.2" stop-color="#4e7e93"/><stop offset="0.225" stop-color="#4e7e93"/><stop offset="0.25" stop-color="#4e7e93"/><stop offset="0.275" stop-color="#4e7e93"/><stop offset="0.3" stop-color="#4e7e93"/><stop offset="0.325" stop-color="#4f7f94"/><stop offset="0.35" stop-color="#548499"/><stop offset="0.375" stop-color="#6493a7"/><stop offset="0.4" stop-color="#7dabbe"/><stop offset="0.425" stop-color="#91bed0"/><stop offset="0.45" stop-color="#8ebacd"/><stop offset="0.475" stop-color="#76a4b8"/><stop offset="0.5" stop-color="#5f8ea3"/><stop offset="0.525" stop-color="#528296"/><stop offset="0.55" stop-color="#4d7c91"/><stop offset="0.575" stop-color="#4a788d"/><stop offset="0.6" stop-color="#487589"/><stop offset="0.625" stop-color="#467285"/><stop offset="0.65" stop-color="#446e81"/><stop offset="0.675" stop-color="#416a7c"/><stop offset="0.7" stop-color="#3e6678"/><stop offset="0.725" stop-color="#3b6172"/><stop offset="0.75" stop-color="#385d6d"/><stop offset="0.775" stop-color="#345767"/><stop offset="0.8" stop-color="#305160"/><stop offset="0.825" stop-color="#2c4b59"/><stop offset="0.85" stop-color="#284451"/><stop offset="0.875" stop-color="#233d49"/><stop offset="0.9" stop-color="#1d353f"/><stop offset="0.925" stop-color="#172b34"/><stop offset="0.95" stop-color="#102028"/><stop offset="0.975" stop-color="#0c1b22"/><stop offset="1" stop-color="#0c1b22"/></linearGradient><linearGradient id="b14" gradientUnits="userSpaceOnUse" x1="263.05" y1="478.68" x2="274.20" y2="508.15"><stop offset="0" stop-color="#2e4e5c"/><stop offset="0.025" stop-color="#416a7c"/><stop offset="0.05" stop-color="#477487"/><stop offset="0.075" stop-color="#4b7a8e"/><stop offset="0.1" stop-color="#4d7d92"/><stop offset="0.125" stop-color="#4e7e93"/><stop offset="0.15" stop-color="#4e7e93"/><stop offset="0.175" stop-color="#4e7e93"/><stop offset="0.2" stop-color="#4e7e93"/><stop offset="0.225" stop-color="#4e7e93"/><stop offset="0.25" stop-color="#4e7e93"/><stop offset="0.275" stop-color="#4e7e93"/><stop offset="0.3" stop-color="#4f7f94"/><stop offset="0.325" stop-color="#548398"/><stop offset="0.35" stop-color="#6291a5"/><stop offset="0.375" stop-color="#7ba9bc"/><stop offset="0.4" stop-color="#8ebbcd"/><stop offset="0.425" stop-color="#8bb7ca"/><stop offset="0.45" stop-color="#74a2b5"/><stop offset="0.475" stop-color="#5e8da1"/><stop offset="0.5" stop-color="#518195"/><stop offset="0.525" stop-color="#4c7b8f"/><stop offset="0.55" stop-color="#4a778b"/><stop offset="0.575" stop-color="#477488"/><stop offset="0.6" stop-color="#457184"/><stop offset="0.625" stop-color="#436d7f"/><stop offset="0.65" stop-color="#40697b"/><stop offset="0.675" stop-color="#3d6576"/><stop offset="0.7" stop-color="#3a6071"/><stop offset="0.725" stop-color="#375b6b"/><stop offset="0.75" stop-color="#335665"/><stop offset="0.775" stop-color="#30505f"/><stop offset="0.8" stop-color="#2c4a58"/><stop offset="0.825" stop-color="#274450"/><stop offset="0.85" stop-color="#233d48"/><stop offset="0.875" stop-color="#1e3540"/><stop offset="0.9" stop-color="#182d36"/><stop offset="0.925" stop-color="#12232b"/><stop offset="0.95" stop-color="#0d1c23"/><stop offset="0.975" stop-color="#0c1b22"/><stop offset="1" stop-color="#0c1b22"/></linearGradient><linearGradient id="b15" gradientUnits="userSpaceOnUse" x1="364.33" y1="434.07" x2="377.34" y2="464.02"><stop offset="0" stop-color="#315361"/><stop offset="0.025" stop-color="#436e80"/><stop offset="0.05" stop-color="#49778b"/><stop offset="0.075" stop-color="#4d7d92"/><stop offset="0.1" stop-color="#4e7e93"/><stop offset="0.125" stop-color="#4e7e93"/><stop offset="0.15" stop-color="#4e7e93"/><stop offset="0.175" stop-color="#4e7e93"/><stop offset="0.2" stop-color="#4e7e93"/><stop offset="0.225" stop-color="#4e7e93"/><stop offset="0.25" stop-color="#4e7e93"/><stop offset="0.275" stop-color="#4e7e93"/><stop offset="0.3" stop-color="#508094"/><stop offset="0.325" stop-color="#57879b"/><stop offset="0.35" stop-color="#6c9aae"/><stop offset="0.375" stop-color="#88b5c7"/><stop offset="0.4" stop-color="#92bed0"/><stop offset="0.425" stop-color="#80adc0"/><stop offset="0.45" stop-color="#6594a8"/><stop offset="0.475" stop-color="#558499"/><stop offset="0.5" stop-color="#4d7c91"/><stop offset="0.525" stop-color="#4a788c"/><stop offset="0.55" stop-color="#487589"/><stop offset="0.575" stop-color="#467285"/><stop offset="0.6" stop-color="#436e81"/><stop offset="0.625" stop-color="#416a7c"/><stop offset="0.65" stop-color="#3e6678"/><stop offset="0.675" stop-color="#3b6273"/><stop offset="0.7" stop-color="#385d6d"/><stop offset="0.725" stop-color="#355867"/><stop offset="0.75" stop-color="#315361"/><stop offset="0.775" stop-color="#2d4d5b"/><stop offset="0.8" stop-color="#294754"/><stop offset="0.825" stop-color="#25404c"/><stop offset="0.85" stop-color="#203944"/><stop offset="0.875" stop-color="#1b313b"/><stop offset="0.9" stop-color="#152831"/><stop offset="0.925" stop-color="#0f1f26"/><stop offset="0.95" stop-color="#0c1b22"/><stop offset="0.975" stop-color="#0c1b22"/><stop offset="1" stop-color="#0c1b22"/></linearGradient><linearGradient id="b16" gradientUnits="userSpaceOnUse" x1="465.97" y1="389.25" x2="481.29" y2="419.44"><stop offset="0" stop-color="#315261"/><stop offset="0.025" stop-color="#436d80"/><stop offset="0.05" stop-color="#49768a"/><stop offset="0.075" stop-color="#4d7c91"/><stop offset="0.1" stop-color="#4e7e93"/><stop offset="0.125" stop-color="#4e7e93"/><stop offset="0.15" stop-color="#4e7e93"/><stop offset="0.175" stop-color="#4e7e93"/><stop offset="0.2" stop-color="#4e7e93"/><stop offset="0.225" stop-color="#4e7e93"/><stop offset="0.25" stop-color="#4e7e93"/><stop offset="0.275" stop-color="#4f7f94"/><stop offset="0.3" stop-color="#528297"/><stop offset="0.325" stop-color="#5e8da2"/><stop offset="0.35" stop-color="#74a2b6"/><stop offset="0.375" stop-color="#8ab7c9"/><stop offset="0.4" stop-color="#8cb9cb"/><stop offset="0.425" stop-color="#78a6b9"/><stop offset="0.45" stop-color="#608fa3"/><stop offset="0.475" stop-color="#528196"/><stop offset="0.5" stop-color="#4c7b8f"/><stop offset="0.525" stop-color="#49778b"/><stop offset="0.55" stop-color="#477387"/><stop offset="0.575" stop-color="#457083"/><stop offset="0.6" stop-color="#426c7f"/><stop offset="0.625" stop-color="#40697a"/><stop offset="0.65" stop-color="#3d6476"/><stop offset="0.675" stop-color="#3a6071"/><stop offset="0.7" stop-color="#375b6b"/><stop offset="0.725" stop-color="#345666"/><stop offset="0.75" stop-color="#30515f"/><stop offset="0.775" stop-color="#2c4b59"/><stop offset="0.8" stop-color="#284552"/><stop offset="0.825" stop-color="#243f4b"/><stop offset="0.85" stop-color="#1f3842"/><stop offset="0.875" stop-color="#1a303a"/><stop offset="0.9" stop-color="#142730"/><stop offset="0.925" stop-color="#0e1e25"/><stop offset="0.95" stop-color="#0c1b22"/><stop offset="0.975" stop-color="#0c1b22"/><stop offset="1" stop-color="#0c1b22"/></linearGradient><linearGradient id="b17" gradientUnits="userSpaceOnUse" x1="467.23" y1="388.68" x2="486.11" y2="416.93"><stop offset="0" stop-color="#315261"/><stop offset="0.025" stop-color="#426c7f"/><stop offset="0.05" stop-color="#487589"/><stop offset="0.075" stop-color="#4c7b8f"/><stop offset="0.1" stop-color="#4e7e93"/><stop offset="0.125" stop-color="#4e7e93"/><stop offset="0.15" stop-color="#4e7e93"/><stop offset="0.175" stop-color="#4e7e93"/><stop offset="0.2" stop-color="#4e7e93"/><stop offset="0.225" stop-color="#4e7e93"/><stop offset="0.25" stop-color="#4f7f94"/><stop offset="0.275" stop-color="#518196"/><stop offset="0.3" stop-color="#5a8a9e"/><stop offset="0.325" stop-color="#6c9bae"/><stop offset="0.35" stop-color="#81aec1"/><stop offset="0.375" stop-color="#8ab7c9"/><stop offset="0.4" stop-color="#7facbf"/><stop offset="0.425" stop-color="#6998ab"/><stop offset="0.45" stop-color="#58869b"/><stop offset="0.475" stop-color="#4e7c91"/><stop offset="0.5" stop-color="#4a778b"/><stop offset="0.525" stop-color="#477487"/><stop offset="0.55" stop-color="#457083"/><stop offset="0.575" stop-color="#436d80"/><stop offset="0.6" stop-color="#40697b"/><stop offset="0.625" stop-color="#3e6577"/><stop offset="0.65" stop-color="#3b6172"/><stop offset="0.675" stop-color="#385d6d"/><stop offset="0.7" stop-color="#355868"/><stop offset="0.725" stop-color="#325362"/><stop offset="0.75" stop-color="#2e4e5c"/><stop offset="0.775" stop-color="#2a4856"/><stop offset="0.8" stop-color="#26424f"/><stop offset="0.825" stop-color="#223c47"/><stop offset="0.85" stop-color="#1e353f"/><stop offset="0.875" stop-color="#192d37"/><stop offset="0.9" stop-color="#13252d"/><stop offset="0.925" stop-color="#0d1c23"/><stop offset="0.95" stop-color="#0c1b22"/><stop offset="0.975" stop-color="#0c1b22"/><stop offset="1" stop-color="#0c1b22"/></linearGradient><linearGradient id="b18" gradientUnits="userSpaceOnUse" x1="468.44" y1="388.00" x2="490.71" y2="414.03"><stop offset="0" stop-color="#315260"/><stop offset="0.025" stop-color="#426b7e"/><stop offset="0.05" stop-color="#477487"/><stop offset="0.075" stop-color="#4b798d"/><stop offset="0.1" stop-color="#4d7d92"/><stop offset="0.125" stop-color="#4e7e93"/><stop offset="0.15" stop-color="#4e7e93"/><stop offset="0.175" stop-color="#4e7e93"/><stop offset="0.2" stop-color="#4e7e93"/><stop offset="0.225" stop-color="#4e7e93"/><stop offset="0.25" stop-color="#518095"/><stop offset="0.275" stop-color="#57879b"/><stop offset="0.3" stop-color="#6594a8"/><stop offset="0.325" stop-color="#78a6b9"/><stop offset="0.35" stop-color="#84b2c4"/><stop offset="0.375" stop-color="#81afc1"/><stop offset="0.4" stop-color="#719fb2"/><stop offset="0.425" stop-color="#5e8da0"/><stop offset="0.45" stop-color="#528094"/><stop offset="0.475" stop-color="#4b788c"/><stop offset="0.5" stop-color="#477487"/><stop offset="0.525" stop-color="#457184"/><stop offset="0.55" stop-color="#436d80"/><stop offset="0.575" stop-color="#416a7c"/><stop offset="0.6" stop-color="#3e6678"/><stop offset="0.625" stop-color="#3c6273"/><stop offset="0.65" stop-color="#395e6f"/><stop offset="0.675" stop-color="#365a6a"/><stop offset="0.7" stop-color="#335564"/><stop offset="0.725" stop-color="#30505f"/><stop offset="0.75" stop-color="#2c4b59"/><stop offset="0.775" stop-color="#284552"/><stop offset="0.8" stop-color="#253f4b"/><stop offset="0.825" stop-color="#203944"/><stop offset="0.85" stop-color="#1c323c"/><stop offset="0.875" stop-color="#172b34"/><stop offset="0.9" stop-color="#12232b"/><stop offset="0.925" stop-color="#0c1b22"/><stop offset="0.95" stop-color="#0c1b22"/><stop offset="0.975" stop-color="#0c1b22"/><stop offset="1" stop-color="#0c1b22"/></linearGradient><linearGradient id="b19" gradientUnits="userSpaceOnUse" x1="469.52" y1="387.15" x2="495.03" y2="410.73"><stop offset="0" stop-color="#305160"/><stop offset="0.025" stop-color="#416a7c"/><stop offset="0.05" stop-color="#467286"/><stop offset="0.075" stop-color="#4a788c"/><stop offset="0.1" stop-color="#4c7b90"/><stop offset="0.125" stop-color="#4e7e92"/><stop offset="0.15" stop-color="#4e7e93"/><stop offset="0.175" stop-color="#4e7e93"/><stop offset="0.2" stop-color="#4e7e93"/><stop offset="0.225" stop-color="#508095"/><stop offset="0.25" stop-color="#558499"/><stop offset="0.275" stop-color="#608fa3"/><stop offset="0.3" stop-color="#709eb1"/><stop offset="0.325" stop-color="#7dabbe"/><stop offset="0.35" stop-color="#80adc0"/><stop offset="0.375" stop-color="#75a3b6"/><stop offset="0.4" stop-color="#6592a6"/><stop offset="0.425" stop-color="#568498"/><stop offset="0.45" stop-color="#4d7a8e"/><stop offset="0.475" stop-color="#487588"/><stop offset="0.5" stop-color="#457184"/><stop offset="0.525" stop-color="#436e80"/><stop offset="0.55" stop-color="#416a7d"/><stop offset="0.575" stop-color="#3f6779"/><stop offset="0.6" stop-color="#3c6374"/><stop offset="0.625" stop-color="#3a5f70"/><stop offset="0.65" stop-color="#375b6b"/><stop offset="0.675" stop-color="#345766"/><stop offset="0.7" stop-color="#315261"/><stop offset="0.725" stop-color="#2e4d5b"/><stop offset="0.75" stop-color="#2a4855"/><stop offset="0.775" stop-color="#27434f"/><stop offset="0.8" stop-color="#233d48"/><stop offset="0.825" stop-color="#1f3741"/><stop offset="0.85" stop-color="#1a303a"/><stop offset="0.875" stop-color="#162932"/><stop offset="0.9" stop-color="#102129"/><stop offset="0.925" stop-color="#0c1b22"/><stop offset="0.95" stop-color="#0c1b22"/><stop offset="0.975" stop-color="#0c1b22"/><stop offset="1" stop-color="#0c1b22"/></linearGradient><linearGradient id="b20" gradientUnits="userSpaceOnUse" x1="470.47" y1="386.14" x2="498.99" y2="407.01"><stop offset="0" stop-color="#305160"/><stop offset="0.025" stop-color="#40697b"/><stop offset="0.05" stop-color="#457184"/><stop offset="0.075" stop-color="#49768a"/><stop offset="0.1" stop-color="#4b7a8e"/><stop offset="0.125" stop-color="#4d7c91"/><stop offset="0.15" stop-color="#4e7d92"/><stop offset="0.175" stop-color="#4e7e93"/><stop offset="0.2" stop-color="#4f7f94"/><stop offset="0.225" stop-color="#538397"/><stop offset="0.25" stop-color="#5b8a9f"/><stop offset="0.275" stop-color="#6897ab"/><stop offset="0.3" stop-color="#75a3b6"/><stop offset="0.325" stop-color="#7ba9bc"/><stop offset="0.35" stop-color="#76a3b6"/><stop offset="0.375" stop-color="#6996aa"/><stop offset="0.4" stop-color="#5b889c"/><stop offset="0.425" stop-color="#507d91"/><stop offset="0.45" stop-color="#4a7689"/><stop offset="0.475" stop-color="#467184"/><stop offset="0.5" stop-color="#436e80"/><stop offset="0.525" stop-color="#416b7d"/><stop offset="0.55" stop-color="#3f6779"/><stop offset="0.575" stop-color="#3d6475"/><stop offset="0.6" stop-color="#3a6071"/><stop offset="0.625" stop-color="#385c6c"/><stop offset="0.65" stop-color="#355868"/><stop offset="0.675" stop-color="#325463"/><stop offset="0.7" stop-color="#2f4f5d"/><stop offset="0.725" stop-color="#2c4a58"/><stop offset="0.75" stop-color="#284552"/><stop offset="0.775" stop-color="#25404c"/><stop offset="0.8" stop-color="#213a45"/><stop offset="0.825" stop-color="#1d343e"/><stop offset="0.85" stop-color="#192e37"/><stop offset="0.875" stop-color="#14272f"/><stop offset="0.9" stop-color="#0f2027"/><stop offset="0.925" stop-color="#0c1b22"/><stop offset="0.95" stop-color="#0c1b22"/><stop offset="0.975" stop-color="#0c1b22"/><stop offset="1" stop-color="#0c1b22"/></linearGradient><linearGradient id="b21" gradientUnits="userSpaceOnUse" x1="471.25" y1="385.00" x2="502.50" y2="402.88"><stop offset="0" stop-color="#30515f"/><stop offset="0.025" stop-color="#40687a"/><stop offset="0.05" stop-color="#457083"/><stop offset="0.075" stop-color="#487588"/><stop offset="0.1" stop-color="#4a788c"/><stop offset="0.125" stop-color="#4c7a8f"/><stop offset="0.15" stop-color="#4d7c91"/><stop offset="0.175" stop-color="#4e7e93"/><stop offset="0.2" stop-color="#518095"/><stop offset="0.225" stop-color="#57869b"/><stop offset="0.25" stop-color="#6190a4"/><stop offset="0.275" stop-color="#6d9baf"/><stop offset="0.3" stop-color="#75a2b5"/><stop offset="0.325" stop-color="#74a1b4"/><stop offset="0.35" stop-color="#6b98ab"/><stop offset="0.375" stop-color="#5f8c9f"/><stop offset="0.4" stop-color="#538093"/><stop offset="0.425" stop-color="#4b788b"/><stop offset="0.45" stop-color="#477285"/><stop offset="0.475" stop-color="#446e81"/><stop offset="0.5" stop-color="#416b7d"/><stop offset="0.525" stop-color="#3f6879"/><stop offset="0.55" stop-color="#3d6476"/><stop offset="0.575" stop-color="#3b6172"/><stop offset="0.6" stop-color="#385d6d"/><stop offset="0.625" stop-color="#365969"/><stop offset="0.65" stop-color="#335564"/><stop offset="0.675" stop-color="#30515f"/><stop offset="0.7" stop-color="#2d4c5a"/><stop offset="0.725" stop-color="#2a4755"/><stop offset="0.75" stop-color="#26424f"/><stop offset="0.775" stop-color="#233d49"/><stop offset="0.8" stop-color="#1f3842"/><stop offset="0.825" stop-color="#1b323c"/><stop offset="0.85" stop-color="#172b35"/><stop offset="0.875" stop-color="#13252d"/><stop offset="0.9" stop-color="#0e1e25"/><stop offset="0.925" stop-color="#0c1b22"/><stop offset="0.95" stop-color="#0c1b22"/><stop offset="0.975" stop-color="#0c1b22"/><stop offset="1" stop-color="#0c1b22"/></linearGradient><linearGradient id="b22" gradientUnits="userSpaceOnUse" x1="471.86" y1="383.77" x2="505.48" y2="398.34"><stop offset="0" stop-color="#30505f"/><stop offset="0.025" stop-color="#3f6779"/><stop offset="0.05" stop-color="#446e81"/><stop offset="0.075" stop-color="#477387"/><stop offset="0.1" stop-color="#49768a"/><stop offset="0.125" stop-color="#4a798d"/><stop offset="0.15" stop-color="#4c7a8f"/><stop offset="0.175" stop-color="#4e7d91"/><stop offset="0.2" stop-color="#538296"/><stop offset="0.225" stop-color="#5b899d"/><stop offset="0.25" stop-color="#6593a6"/><stop offset="0.275" stop-color="#6e9bae"/><stop offset="0.3" stop-color="#709db0"/><stop offset="0.325" stop-color="#6b98ab"/><stop offset="0.35" stop-color="#618ea1"/><stop offset="0.375" stop-color="#568396"/><stop offset="0.4" stop-color="#4e7a8d"/><stop offset="0.425" stop-color="#487386"/><stop offset="0.45" stop-color="#446f81"/><stop offset="0.475" stop-color="#426b7d"/><stop offset="0.5" stop-color="#3f687a"/><stop offset="0.525" stop-color="#3d6576"/><stop offset="0.55" stop-color="#3b6172"/><stop offset="0.575" stop-color="#395e6e"/><stop offset="0.6" stop-color="#365a6a"/><stop offset="0.625" stop-color="#345666"/><stop offset="0.65" stop-color="#315261"/><stop offset="0.675" stop-color="#2e4e5c"/><stop offset="0.7" stop-color="#2b4957"/><stop offset="0.725" stop-color="#284551"/><stop offset="0.75" stop-color="#25404c"/><stop offset="0.775" stop-color="#213b46"/><stop offset="0.8" stop-color="#1e3540"/><stop offset="0.825" stop-color="#1a2f39"/><stop offset="0.85" stop-color="#162932"/><stop offset="0.875" stop-color="#12232b"/><stop offset="0.9" stop-color="#0d1d24"/><stop offset="0.925" stop-color="#0c1b22"/><stop offset="0.95" stop-color="#0c1b22"/><stop offset="0.975" stop-color="#0c1b22"/><stop offset="1" stop-color="#0c1b22"/></linearGradient><linearGradient id="b23" gradientUnits="userSpaceOnUse" x1="472.31" y1="382.46" x2="507.80" y2="393.44"><stop offset="0" stop-color="#2f505e"/><stop offset="0.025" stop-color="#3e6677"/><stop offset="0.05" stop-color="#436d80"/><stop offset="0.075" stop-color="#467285"/><stop offset="0.1" stop-color="#487588"/><stop offset="0.125" stop-color="#49778b"/><stop offset="0.15" stop-color="#4b798d"/><stop offset="0.175" stop-color="#4f7d91"/><stop offset="0.2" stop-color="#558397"/><stop offset="0.225" stop-color="#5e8b9f"/><stop offset="0.25" stop-color="#6693a6"/><stop offset="0.275" stop-color="#6a97aa"/><stop offset="0.3" stop-color="#6895a8"/><stop offset="0.325" stop-color="#618ea1"/><stop offset="0.35" stop-color="#588497"/><stop offset="0.375" stop-color="#507b8e"/><stop offset="0.4" stop-color="#497487"/><stop offset="0.425" stop-color="#456f82"/><stop offset="0.45" stop-color="#426b7d"/><stop offset="0.475" stop-color="#40687a"/><stop offset="0.5" stop-color="#3d6576"/><stop offset="0.525" stop-color="#3b6273"/><stop offset="0.55" stop-color="#395e6f"/><stop offset="0.575" stop-color="#375b6b"/><stop offset="0.6" stop-color="#345767"/><stop offset="0.625" stop-color="#325362"/><stop offset="0.65" stop-color="#2f4f5e"/><stop offset="0.675" stop-color="#2c4b59"/><stop offset="0.7" stop-color="#294754"/><stop offset="0.725" stop-color="#26424e"/><stop offset="0.75" stop-color="#233d49"/><stop offset="0.775" stop-color="#203843"/><stop offset="0.8" stop-color="#1c333d"/><stop offset="0.825" stop-color="#182d37"/><stop offset="0.85" stop-color="#152730"/><stop offset="0.875" stop-color="#112129"/><stop offset="0.9" stop-color="#0d1c22"/><stop offset="0.925" stop-color="#0c1b22"/><stop offset="0.95" stop-color="#0c1b22"/><stop offset="0.975" stop-color="#0c1b22"/><stop offset="1" stop-color="#0c1b22"/></linearGradient><linearGradient id="b24" gradientUnits="userSpaceOnUse" x1="472.60" y1="381.11" x2="509.39" y2="388.26"><stop offset="0" stop-color="#2f4f5e"/><stop offset="0.025" stop-color="#3d6576"/><stop offset="0.05" stop-color="#426c7e"/><stop offset="0.075" stop-color="#457083"/><stop offset="0.1" stop-color="#477386"/><stop offset="0.125" stop-color="#497589"/><stop offset="0.15" stop-color="#4b798c"/><stop offset="0.175" stop-color="#507d91"/><stop offset="0.2" stop-color="#578497"/><stop offset="0.225" stop-color="#5e8b9e"/><stop offset="0.25" stop-color="#6390a3"/><stop offset="0.275" stop-color="#6490a3"/><stop offset="0.3" stop-color="#608c9f"/><stop offset="0.325" stop-color="#598497"/><stop offset="0.35" stop-color="#517c8f"/><stop offset="0.375" stop-color="#4a7588"/><stop offset="0.4" stop-color="#467082"/><stop offset="0.425" stop-color="#426c7e"/><stop offset="0.45" stop-color="#40687a"/><stop offset="0.475" stop-color="#3e6576"/><stop offset="0.5" stop-color="#3b6273"/><stop offset="0.525" stop-color="#395f6f"/><stop offset="0.55" stop-color="#375c6c"/><stop offset="0.575" stop-color="#355868"/><stop offset="0.6" stop-color="#325463"/><stop offset="0.625" stop-color="#30515f"/><stop offset="0.65" stop-color="#2d4d5a"/><stop offset="0.675" stop-color="#2a4856"/><stop offset="0.7" stop-color="#284451"/><stop offset="0.725" stop-color="#243f4b"/><stop offset="0.75" stop-color="#213b46"/><stop offset="0.775" stop-color="#1e3640"/><stop offset="0.8" stop-color="#1b313a"/><stop offset="0.825" stop-color="#172b34"/><stop offset="0.85" stop-color="#13262e"/><stop offset="0.875" stop-color="#102027"/><stop offset="0.9" stop-color="#0c1b22"/><stop offset="0.925" stop-color="#0c1b22"/><stop offset="0.95" stop-color="#0c1b22"/><stop offset="0.975" stop-color="#0c1b22"/><stop offset="1" stop-color="#0c1b22"/></linearGradient><linearGradient id="b25" gradientUnits="userSpaceOnUse" x1="472.74" y1="379.73" x2="510.17" y2="382.89"><stop offset="0" stop-color="#2f4f5d"/><stop offset="0.025" stop-color="#3c6475"/><stop offset="0.05" stop-color="#416a7c"/><stop offset="0.075" stop-color="#446e81"/><stop offset="0.1" stop-color="#467184"/><stop offset="0.125" stop-color="#487488"/><stop offset="0.15" stop-color="#4c788b"/><stop offset="0.175" stop-color="#517d91"/><stop offset="0.2" stop-color="#578396"/><stop offset="0.225" stop-color="#5c889b"/><stop offset="0.25" stop-color="#5e8a9d"/><stop offset="0.275" stop-color="#5c889b"/><stop offset="0.3" stop-color="#578396"/><stop offset="0.325" stop-color="#517c8f"/><stop offset="0.35" stop-color="#4b7688"/><stop offset="0.375" stop-color="#467083"/><stop offset="0.4" stop-color="#436c7e"/><stop offset="0.425" stop-color="#40687a"/><stop offset="0.45" stop-color="#3e6576"/><stop offset="0.475" stop-color="#3c6273"/><stop offset="0.5" stop-color="#3a5f70"/><stop offset="0.525" stop-color="#375c6c"/><stop offset="0.55" stop-color="#355968"/><stop offset="0.575" stop-color="#335564"/><stop offset="0.6" stop-color="#315260"/><stop offset="0.625" stop-color="#2e4e5c"/><stop offset="0.65" stop-color="#2b4a57"/><stop offset="0.675" stop-color="#294653"/><stop offset="0.7" stop-color="#26414e"/><stop offset="0.725" stop-color="#233d49"/><stop offset="0.75" stop-color="#203843"/><stop offset="0.775" stop-color="#1d333e"/><stop offset="0.8" stop-color="#192e38"/><stop offset="0.825" stop-color="#162932"/><stop offset="0.85" stop-color="#12242c"/><stop offset="0.875" stop-color="#0f1f26"/><stop offset="0.9" stop-color="#0c1b22"/><stop offset="0.925" stop-color="#0c1b22"/><stop offset="0.95" stop-color="#0c1b22"/><stop offset="0.975" stop-color="#0c1b22"/><stop offset="1" stop-color="#0c1b22"/></linearGradient><linearGradient id="b26" gradientUnits="userSpaceOnUse" x1="472.72" y1="378.35" x2="510.13" y2="377.47"><stop offset="0" stop-color="#2e4e5c"/><stop offset="0.025" stop-color="#3c6273"/><stop offset="0.05" stop-color="#40697b"/><stop offset="0.075" stop-color="#436d7f"/><stop offset="0.1" stop-color="#457083"/><stop offset="0.125" stop-color="#487386"/><stop offset="0.15" stop-color="#4b778a"/><stop offset="0.175" stop-color="#507c8f"/><stop offset="0.2" stop-color="#558193"/><stop offset="0.225" stop-color="#588396"/><stop offset="0.25" stop-color="#578395"/><stop offset="0.275" stop-color="#558092"/><stop offset="0.3" stop-color="#507b8d"/><stop offset="0.325" stop-color="#4b7588"/><stop offset="0.35" stop-color="#467082"/><stop offset="0.375" stop-color="#436c7e"/><stop offset="0.4" stop-color="#40687a"/><stop offset="0.425" stop-color="#3e6576"/><stop offset="0.45" stop-color="#3c6273"/><stop offset="0.475" stop-color="#3a5f70"/><stop offset="0.5" stop-color="#385c6c"/><stop offset="0.525" stop-color="#365969"/><stop offset="0.55" stop-color="#335665"/><stop offset="0.575" stop-color="#315261"/><stop offset="0.6" stop-color="#2f4f5d"/><stop offset="0.625" stop-color="#2c4b59"/><stop offset="0.65" stop-color="#2a4754"/><stop offset="0.675" stop-color="#274350"/><stop offset="0.7" stop-color="#243f4b"/><stop offset="0.725" stop-color="#213a46"/><stop offset="0.75" stop-color="#1e3641"/><stop offset="0.775" stop-color="#1b313b"/><stop offset="0.8" stop-color="#182c36"/><stop offset="0.825" stop-color="#152730"/><stop offset="0.85" stop-color="#11222a"/><stop offset="0.875" stop-color="#0e1d25"/><stop offset="0.9" stop-color="#0c1b22"/><stop offset="0.925" stop-color="#0c1b22"/><stop offset="0.95" stop-color="#0c1b22"/><stop offset="0.975" stop-color="#0c1b22"/><stop offset="1" stop-color="#0c1b22"/></linearGradient><linearGradient id="b27" gradientUnits="userSpaceOnUse" x1="472.57" y1="376.97" x2="509.28" y2="372.12"><stop offset="0" stop-color="#2e4e5c"/><stop offset="0.025" stop-color="#3b6172"/><stop offset="0.05" stop-color="#3f6779"/><stop offset="0.075" stop-color="#426b7d"/><stop offset="0.1" stop-color="#446e81"/><stop offset="0.125" stop-color="#477284"/><stop offset="0.15" stop-color="#4a7588"/><stop offset="0.175" stop-color="#4e798c"/><stop offset="0.2" stop-color="#517c8e"/><stop offset="0.225" stop-color="#517c8f"/><stop offset="0.25" stop-color="#507b8d"/><stop offset="0.275" stop-color="#4d788a"/><stop offset="0.3" stop-color="#4a7386"/><stop offset="0.325" stop-color="#466f81"/><stop offset="0.35" stop-color="#436b7d"/><stop offset="0.375" stop-color="#40687a"/><stop offset="0.4" stop-color="#3e6576"/><stop offset="0.425" stop-color="#3c6273"/><stop offset="0.45" stop-color="#3a5f70"/><stop offset="0.475" stop-color="#385c6d"/><stop offset="0.5" stop-color="#365969"/><stop offset="0.525" stop-color="#345666"/><stop offset="0.55" stop-color="#325362"/><stop offset="0.575" stop-color="#2f505e"/><stop offset="0.6" stop-color="#2d4c5a"/><stop offset="0.625" stop-color="#2a4856"/><stop offset="0.65" stop-color="#284551"/><stop offset="0.675" stop-color="#25414d"/><stop offset="0.7" stop-color="#223c48"/><stop offset="0.725" stop-color="#203843"/><stop offset="0.75" stop-color="#1d343e"/><stop offset="0.775" stop-color="#1a2f39"/><stop offset="0.8" stop-color="#172a33"/><stop offset="0.825" stop-color="#13262e"/><stop offset="0.85" stop-color="#102129"/><stop offset="0.875" stop-color="#0d1c23"/><stop offset="0.9" stop-color="#0c1b22"/><stop offset="0.925" stop-color="#0c1b22"/><stop offset="0.95" stop-color="#0c1b22"/><stop offset="0.975" stop-color="#0c1b22"/><stop offset="1" stop-color="#0c1b22"/></linearGradient><linearGradient id="b28" gradientUnits="userSpaceOnUse" x1="472.27" y1="375.62" x2="507.70" y2="366.93"><stop offset="0" stop-color="#2d4d5b"/><stop offset="0.025" stop-color="#3a6071"/><stop offset="0.05" stop-color="#3e6677"/><stop offset="0.075" stop-color="#416a7b"/><stop offset="0.1" stop-color="#436d7f"/><stop offset="0.125" stop-color="#456f82"/><stop offset="0.15" stop-color="#487285"/><stop offset="0.175" stop-color="#4a7487"/><stop offset="0.2" stop-color="#4b7588"/><stop offset="0.225" stop-color="#4b7587"/><stop offset="0.25" stop-color="#497385"/><stop offset="0.275" stop-color="#477082"/><stop offset="0.3" stop-color="#446d7f"/><stop offset="0.325" stop-color="#426a7c"/><stop offset="0.35" stop-color="#3f6779"/><stop offset="0.375" stop-color="#3d6476"/><stop offset="0.4" stop-color="#3b6273"/><stop offset="0.425" stop-color="#3a5f70"/><stop offset="0.45" stop-color="#385c6d"/><stop offset="0.475" stop-color="#365a69"/><stop offset="0.5" stop-color="#345766"/><stop offset="0.525" stop-color="#325462"/><stop offset="0.55" stop-color="#30505f"/><stop offset="0.575" stop-color="#2d4d5b"/><stop offset="0.6" stop-color="#2b4957"/><stop offset="0.625" stop-color="#294653"/><stop offset="0.65" stop-color="#26424e"/><stop offset="0.675" stop-color="#243e4a"/><stop offset="0.7" stop-color="#213a45"/><stop offset="0.725" stop-color="#1e3640"/><stop offset="0.75" stop-color="#1b323c"/><stop offset="0.775" stop-color="#182d36"/><stop offset="0.8" stop-color="#152931"/><stop offset="0.825" stop-color="#12242c"/><stop offset="0.85" stop-color="#0f2027"/><stop offset="0.875" stop-color="#0d1c23"/><stop offset="0.9" stop-color="#0c1b22"/><stop offset="0.925" stop-color="#0c1b22"/><stop offset="0.95" stop-color="#0c1b22"/><stop offset="0.975" stop-color="#0c1b22"/><stop offset="1" stop-color="#0c1b22"/></linearGradient><linearGradient id="b29" gradientUnits="userSpaceOnUse" x1="471.85" y1="374.30" x2="505.65" y2="361.89"><stop offset="0" stop-color="#2d4c5a"/><stop offset="0.025" stop-color="#395f6f"/><stop offset="0.05" stop-color="#3d6475"/><stop offset="0.075" stop-color="#3f6879"/><stop offset="0.1" stop-color="#416a7c"/><stop offset="0.125" stop-color="#426c7e"/><stop offset="0.15" stop-color="#436d7f"/><stop offset="0.175" stop-color="#446e80"/><stop offset="0.2" stop-color="#446e80"/><stop offset="0.225" stop-color="#446d7f"/><stop offset="0.25" stop-color="#436c7e"/><stop offset="0.275" stop-color="#416a7c"/><stop offset="0.3" stop-color="#406879"/><stop offset="0.325" stop-color="#3e6677"/><stop offset="0.35" stop-color="#3d6475"/><stop offset="0.375" stop-color="#3b6172"/><stop offset="0.4" stop-color="#395f6f"/><stop offset="0.425" stop-color="#385c6c"/><stop offset="0.45" stop-color="#365a69"/><stop offset="0.475" stop-color="#345766"/><stop offset="0.5" stop-color="#325463"/><stop offset="0.525" stop-color="#30515f"/><stop offset="0.55" stop-color="#2e4e5c"/><stop offset="0.575" stop-color="#2c4a58"/><stop offset="0.6" stop-color="#294754"/><stop offset="0.625" stop-color="#274350"/><stop offset="0.65" stop-color="#25404b"/><stop offset="0.675" stop-color="#223c47"/><stop offset="0.7" stop-color="#1f3843"/><stop offset="0.725" stop-color="#1d343e"/><stop offset="0.75" stop-color="#1a3039"/><stop offset="0.775" stop-color="#172b34"/><stop offset="0.8" stop-color="#14272f"/><stop offset="0.825" stop-color="#11232b"/><stop offset="0.85" stop-color="#0f1f26"/><stop offset="0.875" stop-color="#0c1b22"/><stop offset="0.9" stop-color="#0c1b22"/><stop offset="0.925" stop-color="#0c1b22"/><stop offset="0.95" stop-color="#0c1b22"/><stop offset="0.975" stop-color="#0c1b22"/><stop offset="1" stop-color="#0c1b22"/></linearGradient><linearGradient id="b30" gradientUnits="userSpaceOnUse" x1="449.80" y1="323.05" x2="482.61" y2="308.86"><stop offset="0" stop-color="#2d4c5a"/><stop offset="0.025" stop-color="#395e6e"/><stop offset="0.05" stop-color="#3c6374"/><stop offset="0.075" stop-color="#3e6678"/><stop offset="0.1" stop-color="#40687a"/><stop offset="0.125" stop-color="#406a7c"/><stop offset="0.15" stop-color="#416a7c"/><stop offset="0.175" stop-color="#416a7c"/><stop offset="0.2" stop-color="#416a7c"/><stop offset="0.225" stop-color="#40697b"/><stop offset="0.25" stop-color="#40687a"/><stop offset="0.275" stop-color="#3f6779"/><stop offset="0.3" stop-color="#3e6577"/><stop offset="0.325" stop-color="#3d6475"/><stop offset="0.35" stop-color="#3b6273"/><stop offset="0.375" stop-color="#3a6070"/><stop offset="0.4" stop-color="#385d6e"/><stop offset="0.425" stop-color="#375b6b"/><stop offset="0.45" stop-color="#355868"/><stop offset="0.475" stop-color="#335565"/><stop offset="0.5" stop-color="#315361"/><stop offset="0.525" stop-color="#2f4f5e"/><stop offset="0.55" stop-color="#2d4c5a"/><stop offset="0.575" stop-color="#2b4956"/><stop offset="0.6" stop-color="#294652"/><stop offset="0.625" stop-color="#26424e"/><stop offset="0.65" stop-color="#243e4a"/><stop offset="0.675" stop-color="#213a46"/><stop offset="0.7" stop-color="#1f3741"/><stop offset="0.725" stop-color="#1c333d"/><stop offset="0.75" stop-color="#192f38"/><stop offset="0.775" stop-color="#172a33"/><stop offset="0.8" stop-color="#14262f"/><stop offset="0.825" stop-color="#11222a"/><stop offset="0.85" stop-color="#0e1e25"/><stop offset="0.875" stop-color="#0c1b22"/><stop offset="0.9" stop-color="#0c1b22"/><stop offset="0.925" stop-color="#0c1b22"/><stop offset="0.95" stop-color="#0c1b22"/><stop offset="0.975" stop-color="#0c1b22"/><stop offset="1" stop-color="#0c1b22"/></linearGradient><linearGradient id="b31" gradientUnits="userSpaceOnUse" x1="427.20" y1="270.38" x2="460.39" y2="257.73"><stop offset="0" stop-color="#2d4c5a"/><stop offset="0.025" stop-color="#395e6f"/><stop offset="0.05" stop-color="#3d6475"/><stop offset="0.075" stop-color="#3f6779"/><stop offset="0.1" stop-color="#416a7b"/><stop offset="0.125" stop-color="#426b7d"/><stop offset="0.15" stop-color="#436d7f"/><stop offset="0.175" stop-color="#446d7f"/><stop offset="0.2" stop-color="#446d7f"/><stop offset="0.225" stop-color="#436c7e"/><stop offset="0.25" stop-color="#426b7d"/><stop offset="0.275" stop-color="#40697b"/><stop offset="0.3" stop-color="#3f6778"/><stop offset="0.325" stop-color="#3d6576"/><stop offset="0.35" stop-color="#3c6374"/><stop offset="0.375" stop-color="#3a6071"/><stop offset="0.4" stop-color="#395e6e"/><stop offset="0.425" stop-color="#375b6b"/><stop offset="0.45" stop-color="#355968"/><stop offset="0.475" stop-color="#335665"/><stop offset="0.5" stop-color="#315362"/><stop offset="0.525" stop-color="#2f505e"/><stop offset="0.55" stop-color="#2d4d5b"/><stop offset="0.575" stop-color="#2b4957"/><stop offset="0.6" stop-color="#294653"/><stop offset="0.625" stop-color="#26424f"/><stop offset="0.65" stop-color="#243f4b"/><stop offset="0.675" stop-color="#213b46"/><stop offset="0.7" stop-color="#1f3742"/><stop offset="0.725" stop-color="#1c333d"/><stop offset="0.75" stop-color="#192f38"/><stop offset="0.775" stop-color="#172b34"/><stop offset="0.8" stop-color="#14262f"/><stop offset="0.825" stop-color="#11222a"/><stop offset="0.85" stop-color="#0e1e25"/><stop offset="0.875" stop-color="#0c1b22"/><stop offset="0.9" stop-color="#0c1b22"/><stop offset="0.925" stop-color="#0c1b22"/><stop offset="0.95" stop-color="#0c1b22"/><stop offset="0.975" stop-color="#0c1b22"/><stop offset="1" stop-color="#0c1b22"/></linearGradient><linearGradient id="b32" gradientUnits="userSpaceOnUse" x1="425.77" y1="266.16" x2="459.87" y2="256.54"><stop offset="0" stop-color="#2d4d5b"/><stop offset="0.025" stop-color="#395f6f"/><stop offset="0.05" stop-color="#3d6576"/><stop offset="0.075" stop-color="#40687a"/><stop offset="0.1" stop-color="#426b7d"/><stop offset="0.125" stop-color="#456e81"/><stop offset="0.15" stop-color="#477183"/><stop offset="0.175" stop-color="#497385"/><stop offset="0.2" stop-color="#4a7385"/><stop offset="0.225" stop-color="#497284"/><stop offset="0.25" stop-color="#477082"/><stop offset="0.275" stop-color="#446d7f"/><stop offset="0.3" stop-color="#426a7b"/><stop offset="0.325" stop-color="#3f6778"/><stop offset="0.35" stop-color="#3d6475"/><stop offset="0.375" stop-color="#3b6272"/><stop offset="0.4" stop-color="#395f6f"/><stop offset="0.425" stop-color="#385c6c"/><stop offset="0.45" stop-color="#365a69"/><stop offset="0.475" stop-color="#345766"/><stop offset="0.5" stop-color="#325463"/><stop offset="0.525" stop-color="#30515f"/><stop offset="0.55" stop-color="#2e4e5c"/><stop offset="0.575" stop-color="#2c4a58"/><stop offset="0.6" stop-color="#294754"/><stop offset="0.625" stop-color="#274350"/><stop offset="0.65" stop-color="#25404b"/><stop offset="0.675" stop-color="#223c47"/><stop offset="0.7" stop-color="#1f3843"/><stop offset="0.725" stop-color="#1d343e"/><stop offset="0.75" stop-color="#1a2f39"/><stop offset="0.775" stop-color="#172b34"/><stop offset="0.8" stop-color="#14272f"/><stop offset="0.825" stop-color="#11232a"/><stop offset="0.85" stop-color="#0f1e26"/><stop offset="0.875" stop-color="#0c1b22"/><stop offset="0.9" stop-color="#0c1b22"/><stop offset="0.925" stop-color="#0c1b22"/><stop offset="0.95" stop-color="#0c1b22"/><stop offset="0.975" stop-color="#0c1b22"/><stop offset="1" stop-color="#0c1b22"/></linearGradient><linearGradient id="b33" gradientUnits="userSpaceOnUse" x1="424.70" y1="261.85" x2="459.35" y2="255.35"><stop offset="0" stop-color="#2e4d5b"/><stop offset="0.025" stop-color="#3a6070"/><stop offset="0.05" stop-color="#3e6577"/><stop offset="0.075" stop-color="#40697b"/><stop offset="0.1" stop-color="#436d7f"/><stop offset="0.125" stop-color="#477183"/><stop offset="0.15" stop-color="#4b7587"/><stop offset="0.175" stop-color="#4e788a"/><stop offset="0.2" stop-color="#4f798c"/><stop offset="0.225" stop-color="#4f788a"/><stop offset="0.25" stop-color="#4c7587"/><stop offset="0.275" stop-color="#487183"/><stop offset="0.3" stop-color="#446d7f"/><stop offset="0.325" stop-color="#41697b"/><stop offset="0.35" stop-color="#3e6677"/><stop offset="0.375" stop-color="#3c6374"/><stop offset="0.4" stop-color="#3a6071"/><stop offset="0.425" stop-color="#385d6e"/><stop offset="0.45" stop-color="#375b6b"/><stop offset="0.475" stop-color="#355867"/><stop offset="0.5" stop-color="#335564"/><stop offset="0.525" stop-color="#315260"/><stop offset="0.55" stop-color="#2f4f5d"/><stop offset="0.575" stop-color="#2c4b59"/><stop offset="0.6" stop-color="#2a4855"/><stop offset="0.625" stop-color="#284451"/><stop offset="0.65" stop-color="#25404c"/><stop offset="0.675" stop-color="#233c48"/><stop offset="0.7" stop-color="#203843"/><stop offset="0.725" stop-color="#1d343f"/><stop offset="0.75" stop-color="#1a303a"/><stop offset="0.775" stop-color="#172c35"/><stop offset="0.8" stop-color="#152730"/><stop offset="0.825" stop-color="#12232b"/><stop offset="0.85" stop-color="#0f1f26"/><stop offset="0.875" stop-color="#0c1b22"/><stop offset="0.9" stop-color="#0c1b22"/><stop offset="0.925" stop-color="#0c1b22"/><stop offset="0.95" stop-color="#0c1b22"/><stop offset="0.975" stop-color="#0c1b22"/><stop offset="1" stop-color="#0c1b22"/></linearGradient><linearGradient id="b34" gradientUnits="userSpaceOnUse" x1="423.98" y1="257.46" x2="458.85" y2="254.16"><stop offset="0" stop-color="#2e4e5c"/><stop offset="0.025" stop-color="#3a6071"/><stop offset="0.05" stop-color="#3e6677"/><stop offset="0.075" stop-color="#416a7c"/><stop offset="0.1" stop-color="#446d80"/><stop offset="0.125" stop-color="#487284"/><stop offset="0.15" stop-color="#4d788a"/><stop offset="0.175" stop-color="#527d8f"/><stop offset="0.2" stop-color="#557f91"/><stop offset="0.225" stop-color="#557f91"/><stop offset="0.25" stop-color="#517b8d"/><stop offset="0.275" stop-color="#4c7688"/><stop offset="0.3" stop-color="#477082"/><stop offset="0.325" stop-color="#436b7d"/><stop offset="0.35" stop-color="#406779"/><stop offset="0.375" stop-color="#3d6475"/><stop offset="0.4" stop-color="#3b6172"/><stop offset="0.425" stop-color="#395e6f"/><stop offset="0.45" stop-color="#375c6c"/><stop offset="0.475" stop-color="#355968"/><stop offset="0.5" stop-color="#335665"/><stop offset="0.525" stop-color="#315361"/><stop offset="0.55" stop-color="#2f4f5e"/><stop offset="0.575" stop-color="#2d4c5a"/><stop offset="0.6" stop-color="#2b4956"/><stop offset="0.625" stop-color="#284552"/><stop offset="0.65" stop-color="#26414d"/><stop offset="0.675" stop-color="#233d49"/><stop offset="0.7" stop-color="#203944"/><stop offset="0.725" stop-color="#1e3540"/><stop offset="0.75" stop-color="#1b313b"/><stop offset="0.775" stop-color="#182c36"/><stop offset="0.8" stop-color="#152831"/><stop offset="0.825" stop-color="#12232b"/><stop offset="0.85" stop-color="#0f1f26"/><stop offset="0.875" stop-color="#0c1b22"/><stop offset="0.9" stop-color="#0c1b22"/><stop offset="0.925" stop-color="#0c1b22"/><stop offset="0.95" stop-color="#0c1b22"/><stop offset="0.975" stop-color="#0c1b22"/><stop offset="1" stop-color="#0c1b22"/></linearGradient><linearGradient id="b35" gradientUnits="userSpaceOnUse" x1="423.64" y1="253.03" x2="458.42" y2="252.94"><stop offset="0" stop-color="#2f4f5d"/><stop offset="0.025" stop-color="#3b6172"/><stop offset="0.05" stop-color="#3f6778"/><stop offset="0.075" stop-color="#416a7c"/><stop offset="0.1" stop-color="#446e80"/><stop offset="0.125" stop-color="#487385"/><stop offset="0.15" stop-color="#4f798c"/><stop offset="0.175" stop-color="#568092"/><stop offset="0.2" stop-color="#5a8597"/><stop offset="0.225" stop-color="#5b8597"/><stop offset="0.25" stop-color="#578193"/><stop offset="0.275" stop-color="#517b8d"/><stop offset="0.3" stop-color="#4b7486"/><stop offset="0.325" stop-color="#456e7f"/><stop offset="0.35" stop-color="#41697a"/><stop offset="0.375" stop-color="#3e6576"/><stop offset="0.4" stop-color="#3c6273"/><stop offset="0.425" stop-color="#3a5f70"/><stop offset="0.45" stop-color="#385d6d"/><stop offset="0.475" stop-color="#365a69"/><stop offset="0.5" stop-color="#345766"/><stop offset="0.525" stop-color="#325463"/><stop offset="0.55" stop-color="#30505f"/><stop offset="0.575" stop-color="#2e4d5b"/><stop offset="0.6" stop-color="#2b4957"/><stop offset="0.625" stop-color="#294653"/><stop offset="0.65" stop-color="#26424e"/><stop offset="0.675" stop-color="#243e4a"/><stop offset="0.7" stop-color="#213a45"/><stop offset="0.725" stop-color="#1e3640"/><stop offset="0.75" stop-color="#1b313b"/><stop offset="0.775" stop-color="#182d36"/><stop offset="0.8" stop-color="#152831"/><stop offset="0.825" stop-color="#12242c"/><stop offset="0.85" stop-color="#0f1f27"/><stop offset="0.875" stop-color="#0c1b22"/><stop offset="0.9" stop-color="#0c1b22"/><stop offset="0.925" stop-color="#0c1b22"/><stop offset="0.95" stop-color="#0c1b22"/><stop offset="0.975" stop-color="#0c1b22"/><stop offset="1" stop-color="#0c1b22"/></linearGradient><linearGradient id="b36" gradientUnits="userSpaceOnUse" x1="423.68" y1="248.58" x2="458.14" y2="251.68"><stop offset="0" stop-color="#2f4f5d"/><stop offset="0.025" stop-color="#3b6273"/><stop offset="0.05" stop-color="#3f6779"/><stop offset="0.075" stop-color="#416b7d"/><stop offset="0.1" stop-color="#446e81"/><stop offset="0.125" stop-color="#487385"/><stop offset="0.15" stop-color="#4f7a8c"/><stop offset="0.175" stop-color="#588295"/><stop offset="0.2" stop-color="#5f899b"/><stop offset="0.225" stop-color="#618b9d"/><stop offset="0.25" stop-color="#5d8799"/><stop offset="0.275" stop-color="#568092"/><stop offset="0.3" stop-color="#4e7889"/><stop offset="0.325" stop-color="#477082"/><stop offset="0.35" stop-color="#426a7c"/><stop offset="0.375" stop-color="#3f6678"/><stop offset="0.4" stop-color="#3c6374"/><stop offset="0.425" stop-color="#3a6071"/><stop offset="0.45" stop-color="#385d6e"/><stop offset="0.475" stop-color="#375b6b"/><stop offset="0.5" stop-color="#355867"/><stop offset="0.525" stop-color="#335564"/><stop offset="0.55" stop-color="#305160"/><stop offset="0.575" stop-color="#2e4e5c"/><stop offset="0.6" stop-color="#2c4a58"/><stop offset="0.625" stop-color="#294754"/><stop offset="0.65" stop-color="#27434f"/><stop offset="0.675" stop-color="#243f4b"/><stop offset="0.7" stop-color="#213b46"/><stop offset="0.725" stop-color="#1f3741"/><stop offset="0.75" stop-color="#1c323c"/><stop offset="0.775" stop-color="#192e37"/><stop offset="0.8" stop-color="#162932"/><stop offset="0.825" stop-color="#13242c"/><stop offset="0.85" stop-color="#0f2027"/><stop offset="0.875" stop-color="#0d1b22"/><stop offset="0.9" stop-color="#0c1b22"/><stop offset="0.925" stop-color="#0c1b22"/><stop offset="0.95" stop-color="#0c1b22"/><stop offset="0.975" stop-color="#0c1b22"/><stop offset="1" stop-color="#0c1b22"/></linearGradient><linearGradient id="b37" gradientUnits="userSpaceOnUse" x1="424.12" y1="244.16" x2="458.01" y2="250.39"><stop offset="0" stop-color="#2f505e"/><stop offset="0.025" stop-color="#3c6273"/><stop offset="0.05" stop-color="#3f687a"/><stop offset="0.075" stop-color="#426c7e"/><stop offset="0.1" stop-color="#446f81"/><stop offset="0.125" stop-color="#487385"/><stop offset="0.15" stop-color="#4f7a8c"/><stop offset="0.175" stop-color="#598496"/><stop offset="0.2" stop-color="#628d9f"/><stop offset="0.225" stop-color="#6691a3"/><stop offset="0.25" stop-color="#648ea0"/><stop offset="0.275" stop-color="#5b8698"/><stop offset="0.3" stop-color="#527b8d"/><stop offset="0.325" stop-color="#497385"/><stop offset="0.35" stop-color="#436c7e"/><stop offset="0.375" stop-color="#406779"/><stop offset="0.4" stop-color="#3d6475"/><stop offset="0.425" stop-color="#3b6172"/><stop offset="0.45" stop-color="#395e6f"/><stop offset="0.475" stop-color="#375c6c"/><stop offset="0.5" stop-color="#355968"/><stop offset="0.525" stop-color="#335665"/><stop offset="0.55" stop-color="#315261"/><stop offset="0.575" stop-color="#2f4f5d"/><stop offset="0.6" stop-color="#2c4b59"/><stop offset="0.625" stop-color="#2a4855"/><stop offset="0.65" stop-color="#274450"/><stop offset="0.675" stop-color="#25404c"/><stop offset="0.7" stop-color="#223c47"/><stop offset="0.725" stop-color="#1f3742"/><stop offset="0.75" stop-color="#1c333d"/><stop offset="0.775" stop-color="#192e38"/><stop offset="0.8" stop-color="#162a32"/><stop offset="0.825" stop-color="#13252d"/><stop offset="0.85" stop-color="#102027"/><stop offset="0.875" stop-color="#0d1b22"/><stop offset="0.9" stop-color="#0c1b22"/><stop offset="0.925" stop-color="#0c1b22"/><stop offset="0.95" stop-color="#0c1b22"/><stop offset="0.975" stop-color="#0c1b22"/><stop offset="1" stop-color="#0c1b22"/></linearGradient><linearGradient id="b38" gradientUnits="userSpaceOnUse" x1="424.96" y1="239.80" x2="458.05" y2="249.10"><stop offset="0" stop-color="#30505f"/><stop offset="0.025" stop-color="#3c6374"/><stop offset="0.05" stop-color="#40697b"/><stop offset="0.075" stop-color="#426c7f"/><stop offset="0.1" stop-color="#446f82"/><stop offset="0.125" stop-color="#477285"/><stop offset="0.15" stop-color="#4e798c"/><stop offset="0.175" stop-color="#588496"/><stop offset="0.2" stop-color="#648fa2"/><stop offset="0.225" stop-color="#6b96a8"/><stop offset="0.25" stop-color="#6a95a7"/><stop offset="0.275" stop-color="#618c9e"/><stop offset="0.3" stop-color="#568092"/><stop offset="0.325" stop-color="#4c7587"/><stop offset="0.35" stop-color="#456e7f"/><stop offset="0.375" stop-color="#40697a"/><stop offset="0.4" stop-color="#3e6576"/><stop offset="0.425" stop-color="#3c6273"/><stop offset="0.45" stop-color="#3a5f70"/><stop offset="0.475" stop-color="#385d6d"/><stop offset="0.5" stop-color="#365a69"/><stop offset="0.525" stop-color="#345666"/><stop offset="0.55" stop-color="#325362"/><stop offset="0.575" stop-color="#2f505e"/><stop offset="0.6" stop-color="#2d4c5a"/><stop offset="0.625" stop-color="#2b4956"/><stop offset="0.65" stop-color="#284551"/><stop offset="0.675" stop-color="#25414d"/><stop offset="0.7" stop-color="#223c48"/><stop offset="0.725" stop-color="#203843"/><stop offset="0.75" stop-color="#1d343e"/><stop offset="0.775" stop-color="#1a2f39"/><stop offset="0.8" stop-color="#162a33"/><stop offset="0.825" stop-color="#13252d"/><stop offset="0.85" stop-color="#102028"/><stop offset="0.875" stop-color="#0d1c22"/><stop offset="0.9" stop-color="#0c1b22"/><stop offset="0.925" stop-color="#0c1b22"/><stop offset="0.95" stop-color="#0c1b22"/><stop offset="0.975" stop-color="#0c1b22"/><stop offset="1" stop-color="#0c1b22"/></linearGradient><linearGradient id="b39" gradientUnits="userSpaceOnUse" x1="426.22" y1="235.53" x2="458.24" y2="247.82"><stop offset="0" stop-color="#30515f"/><stop offset="0.025" stop-color="#3d6475"/><stop offset="0.05" stop-color="#406a7c"/><stop offset="0.075" stop-color="#436d80"/><stop offset="0.1" stop-color="#446f82"/><stop offset="0.125" stop-color="#477285"/><stop offset="0.15" stop-color="#4c788b"/><stop offset="0.175" stop-color="#578295"/><stop offset="0.2" stop-color="#6590a3"/><stop offset="0.225" stop-color="#709bad"/><stop offset="0.25" stop-color="#719bad"/><stop offset="0.275" stop-color="#6892a4"/><stop offset="0.3" stop-color="#5a8497"/><stop offset="0.325" stop-color="#4e788a"/><stop offset="0.35" stop-color="#466f81"/><stop offset="0.375" stop-color="#416a7b"/><stop offset="0.4" stop-color="#3e6677"/><stop offset="0.425" stop-color="#3c6374"/><stop offset="0.45" stop-color="#3a6071"/><stop offset="0.475" stop-color="#385e6e"/><stop offset="0.5" stop-color="#365b6a"/><stop offset="0.525" stop-color="#345767"/><stop offset="0.55" stop-color="#325463"/><stop offset="0.575" stop-color="#30515f"/><stop offset="0.6" stop-color="#2e4d5b"/><stop offset="0.625" stop-color="#2b4957"/><stop offset="0.65" stop-color="#294652"/><stop offset="0.675" stop-color="#26414e"/><stop offset="0.7" stop-color="#233d49"/><stop offset="0.725" stop-color="#203944"/><stop offset="0.75" stop-color="#1d343f"/><stop offset="0.775" stop-color="#1a3039"/><stop offset="0.8" stop-color="#172b34"/><stop offset="0.825" stop-color="#13262e"/><stop offset="0.85" stop-color="#102128"/><stop offset="0.875" stop-color="#0d1c23"/><stop offset="0.9" stop-color="#0c1b22"/><stop offset="0.925" stop-color="#0c1b22"/><stop offset="0.95" stop-color="#0c1b22"/><stop offset="0.975" stop-color="#0c1b22"/><stop offset="1" stop-color="#0c1b22"/></linearGradient><linearGradient id="b40" gradientUnits="userSpaceOnUse" x1="427.89" y1="231.42" x2="458.60" y2="246.58"><stop offset="0" stop-color="#315260"/><stop offset="0.025" stop-color="#3d6576"/><stop offset="0.05" stop-color="#416a7d"/><stop offset="0.075" stop-color="#436e81"/><stop offset="0.1" stop-color="#457083"/><stop offset="0.125" stop-color="#467285"/><stop offset="0.15" stop-color="#4a768a"/><stop offset="0.175" stop-color="#548093"/><stop offset="0.2" stop-color="#648fa2"/><stop offset="0.225" stop-color="#729eb0"/><stop offset="0.25" stop-color="#77a2b4"/><stop offset="0.275" stop-color="#6e99ab"/><stop offset="0.3" stop-color="#5f8a9c"/><stop offset="0.325" stop-color="#517b8d"/><stop offset="0.35" stop-color="#477183"/><stop offset="0.375" stop-color="#426b7c"/><stop offset="0.4" stop-color="#3f6778"/><stop offset="0.425" stop-color="#3d6475"/><stop offset="0.45" stop-color="#3b6172"/><stop offset="0.475" stop-color="#395e6f"/><stop offset="0.5" stop-color="#375c6c"/><stop offset="0.525" stop-color="#355868"/><stop offset="0.55" stop-color="#335564"/><stop offset="0.575" stop-color="#315260"/><stop offset="0.6" stop-color="#2e4e5c"/><stop offset="0.625" stop-color="#2c4a58"/><stop offset="0.65" stop-color="#294653"/><stop offset="0.675" stop-color="#26424f"/><stop offset="0.7" stop-color="#243e4a"/><stop offset="0.725" stop-color="#213a45"/><stop offset="0.75" stop-color="#1e3540"/><stop offset="0.775" stop-color="#1a303a"/><stop offset="0.8" stop-color="#172b34"/><stop offset="0.825" stop-color="#14262f"/><stop offset="0.85" stop-color="#102129"/><stop offset="0.875" stop-color="#0d1c23"/><stop offset="0.9" stop-color="#0c1b22"/><stop offset="0.925" stop-color="#0c1b22"/><stop offset="0.95" stop-color="#0c1b22"/><stop offset="0.975" stop-color="#0c1b22"/><stop offset="1" stop-color="#0c1b22"/></linearGradient><linearGradient id="b41" gradientUnits="userSpaceOnUse" x1="429.97" y1="227.49" x2="459.10" y2="245.39"><stop offset="0" stop-color="#315261"/><stop offset="0.025" stop-color="#3e6577"/><stop offset="0.05" stop-color="#416b7d"/><stop offset="0.075" stop-color="#446f81"/><stop offset="0.1" stop-color="#457184"/><stop offset="0.125" stop-color="#477386"/><stop offset="0.15" stop-color="#497589"/><stop offset="0.175" stop-color="#517d90"/><stop offset="0.2" stop-color="#618d9f"/><stop offset="0.225" stop-color="#739fb1"/><stop offset="0.25" stop-color="#7da8b9"/><stop offset="0.275" stop-color="#76a1b2"/><stop offset="0.3" stop-color="#658fa1"/><stop offset="0.325" stop-color="#547e90"/><stop offset="0.35" stop-color="#487284"/><stop offset="0.375" stop-color="#426c7e"/><stop offset="0.4" stop-color="#3f6879"/><stop offset="0.425" stop-color="#3d6576"/><stop offset="0.45" stop-color="#3c6273"/><stop offset="0.475" stop-color="#3a5f70"/><stop offset="0.5" stop-color="#385c6d"/><stop offset="0.525" stop-color="#365969"/><stop offset="0.55" stop-color="#345665"/><stop offset="0.575" stop-color="#315361"/><stop offset="0.6" stop-color="#2f4f5d"/><stop offset="0.625" stop-color="#2c4b59"/><stop offset="0.65" stop-color="#2a4754"/><stop offset="0.675" stop-color="#274350"/><stop offset="0.7" stop-color="#243f4b"/><stop offset="0.725" stop-color="#213b46"/><stop offset="0.75" stop-color="#1e3640"/><stop offset="0.775" stop-color="#1b313b"/><stop offset="0.8" stop-color="#182c35"/><stop offset="0.825" stop-color="#14272f"/><stop offset="0.85" stop-color="#112129"/><stop offset="0.875" stop-color="#0d1c23"/><stop offset="0.9" stop-color="#0c1b22"/><stop offset="0.925" stop-color="#0c1b22"/><stop offset="0.95" stop-color="#0c1b22"/><stop offset="0.975" stop-color="#0c1b22"/><stop offset="1" stop-color="#0c1b22"/></linearGradient><linearGradient id="b42" gradientUnits="userSpaceOnUse" x1="432.46" y1="223.81" x2="459.75" y2="244.27"><stop offset="0" stop-color="#315362"/><stop offset="0.025" stop-color="#3e6678"/><stop offset="0.05" stop-color="#426c7e"/><stop offset="0.075" stop-color="#446f82"/><stop offset="0.1" stop-color="#467285"/><stop offset="0.125" stop-color="#477387"/><stop offset="0.15" stop-color="#487588"/><stop offset="0.175" stop-color="#4e7b8e"/><stop offset="0.2" stop-color="#5d899c"/><stop offset="0.225" stop-color="#729eb0"/><stop offset="0.25" stop-color="#81acbe"/><stop offset="0.275" stop-color="#7da8ba"/><stop offset="0.3" stop-color="#6b96a8"/><stop offset="0.325" stop-color="#578194"/><stop offset="0.35" stop-color="#4a7486"/><stop offset="0.375" stop-color="#436c7f"/><stop offset="0.4" stop-color="#40697b"/><stop offset="0.425" stop-color="#3e6677"/><stop offset="0.45" stop-color="#3c6374"/><stop offset="0.475" stop-color="#3a6071"/><stop offset="0.5" stop-color="#385d6e"/><stop offset="0.525" stop-color="#365a6a"/><stop offset="0.55" stop-color="#345766"/><stop offset="0.575" stop-color="#325462"/><stop offset="0.6" stop-color="#2f505e"/><stop offset="0.625" stop-color="#2d4c5a"/><stop offset="0.65" stop-color="#2a4856"/><stop offset="0.675" stop-color="#284451"/><stop offset="0.7" stop-color="#25404c"/><stop offset="0.725" stop-color="#223b47"/><stop offset="0.75" stop-color="#1f3741"/><stop offset="0.775" stop-color="#1b323c"/><stop offset="0.8" stop-color="#182d36"/><stop offset="0.825" stop-color="#152730"/><stop offset="0.85" stop-color="#11222a"/><stop offset="0.875" stop-color="#0d1c23"/><stop offset="0.9" stop-color="#0c1b22"/><stop offset="0.925" stop-color="#0c1b22"/><stop offset="0.95" stop-color="#0c1b22"/><stop offset="0.975" stop-color="#0c1b22"/><stop offset="1" stop-color="#0c1b22"/></linearGradient><linearGradient id="b43" gradientUnits="userSpaceOnUse" x1="435.34" y1="220.42" x2="460.54" y2="243.24"><stop offset="0" stop-color="#325362"/><stop offset="0.025" stop-color="#3f6778"/><stop offset="0.05" stop-color="#426d7f"/><stop offset="0.075" stop-color="#457083"/><stop offset="0.1" stop-color="#467286"/><stop offset="0.125" stop-color="#477487"/><stop offset="0.15" stop-color="#487589"/><stop offset="0.175" stop-color="#4c798c"/><stop offset="0.2" stop-color="#578497"/><stop offset="0.225" stop-color="#6e9aac"/><stop offset="0.25" stop-color="#84afc0"/><stop offset="0.275" stop-color="#85b0c1"/><stop offset="0.3" stop-color="#729daf"/><stop offset="0.325" stop-color="#5a8597"/><stop offset="0.35" stop-color="#4b7588"/><stop offset="0.375" stop-color="#446d80"/><stop offset="0.4" stop-color="#416a7c"/><stop offset="0.425" stop-color="#3f6778"/><stop offset="0.45" stop-color="#3d6475"/><stop offset="0.475" stop-color="#3b6172"/><stop offset="0.5" stop-color="#395e6f"/><stop offset="0.525" stop-color="#375b6b"/><stop offset="0.55" stop-color="#355868"/><stop offset="0.575" stop-color="#335564"/><stop offset="0.6" stop-color="#30515f"/><stop offset="0.625" stop-color="#2e4d5b"/><stop offset="0.65" stop-color="#2b4957"/><stop offset="0.675" stop-color="#284552"/><stop offset="0.7" stop-color="#25414d"/><stop offset="0.725" stop-color="#223c48"/><stop offset="0.75" stop-color="#1f3742"/><stop offset="0.775" stop-color="#1c333d"/><stop offset="0.8" stop-color="#182d37"/><stop offset="0.825" stop-color="#152831"/><stop offset="0.85" stop-color="#11222a"/><stop offset="0.875" stop-color="#0d1d24"/><stop offset="0.9" stop-color="#0c1b22"/><stop offset="0.925" stop-color="#0c1b22"/><stop offset="0.95" stop-color="#0c1b22"/><stop offset="0.975" stop-color="#0c1b22"/><stop offset="1" stop-color="#0c1b22"/></linearGradient><linearGradient id="b44" gradientUnits="userSpaceOnUse" x1="438.54" y1="217.34" x2="461.44" y2="242.32"><stop offset="0" stop-color="#325463"/><stop offset="0.025" stop-color="#3f6779"/><stop offset="0.05" stop-color="#436d80"/><stop offset="0.075" stop-color="#457184"/><stop offset="0.1" stop-color="#477387"/><stop offset="0.125" stop-color="#487588"/><stop offset="0.15" stop-color="#487689"/><stop offset="0.175" stop-color="#4a778b"/><stop offset="0.2" stop-color="#527f93"/><stop offset="0.225" stop-color="#6894a7"/><stop offset="0.25" stop-color="#83aec0"/><stop offset="0.275" stop-color="#8cb7c9"/><stop offset="0.3" stop-color="#79a5b6"/><stop offset="0.325" stop-color="#5e899c"/><stop offset="0.35" stop-color="#4c7789"/><stop offset="0.375" stop-color="#446e81"/><stop offset="0.4" stop-color="#416a7d"/><stop offset="0.425" stop-color="#3f687a"/><stop offset="0.45" stop-color="#3d6577"/><stop offset="0.475" stop-color="#3c6273"/><stop offset="0.5" stop-color="#3a5f70"/><stop offset="0.525" stop-color="#385c6c"/><stop offset="0.55" stop-color="#355969"/><stop offset="0.575" stop-color="#335665"/><stop offset="0.6" stop-color="#315261"/><stop offset="0.625" stop-color="#2e4e5c"/><stop offset="0.65" stop-color="#2c4a58"/><stop offset="0.675" stop-color="#294653"/><stop offset="0.7" stop-color="#26424e"/><stop offset="0.725" stop-color="#233d49"/><stop offset="0.75" stop-color="#203843"/><stop offset="0.775" stop-color="#1c333d"/><stop offset="0.8" stop-color="#192e37"/><stop offset="0.825" stop-color="#152931"/><stop offset="0.85" stop-color="#12232b"/><stop offset="0.875" stop-color="#0e1d24"/><stop offset="0.9" stop-color="#0c1b22"/><stop offset="0.925" stop-color="#0c1b22"/><stop offset="0.95" stop-color="#0c1b22"/><stop offset="0.975" stop-color="#0c1b22"/><stop offset="1" stop-color="#0c1b22"/></linearGradient><linearGradient id="b45" gradientUnits="userSpaceOnUse" x1="454.73" y1="203.29" x2="476.84" y2="229.79"><stop offset="0" stop-color="#325463"/><stop offset="0.025" stop-color="#3f687a"/><stop offset="0.05" stop-color="#436e80"/><stop offset="0.075" stop-color="#467184"/><stop offset="0.1" stop-color="#477487"/><stop offset="0.125" stop-color="#487589"/><stop offset="0.15" stop-color="#49768a"/><stop offset="0.175" stop-color="#4a778b"/><stop offset="0.2" stop-color="#507d91"/><stop offset="0.225" stop-color="#6490a3"/><stop offset="0.25" stop-color="#82aebf"/><stop offset="0.275" stop-color="#90bbcc"/><stop offset="0.3" stop-color="#7ea9ba"/><stop offset="0.325" stop-color="#608b9e"/><stop offset="0.35" stop-color="#4d778a"/><stop offset="0.375" stop-color="#446f81"/><stop offset="0.4" stop-color="#416b7d"/><stop offset="0.425" stop-color="#40687a"/><stop offset="0.45" stop-color="#3e6677"/><stop offset="0.475" stop-color="#3c6374"/><stop offset="0.5" stop-color="#3a6071"/><stop offset="0.525" stop-color="#385d6d"/><stop offset="0.55" stop-color="#365a69"/><stop offset="0.575" stop-color="#335665"/><stop offset="0.6" stop-color="#315261"/><stop offset="0.625" stop-color="#2f4f5d"/><stop offset="0.65" stop-color="#2c4b58"/><stop offset="0.675" stop-color="#294653"/><stop offset="0.7" stop-color="#26424e"/><stop offset="0.725" stop-color="#233d49"/><stop offset="0.75" stop-color="#203944"/><stop offset="0.775" stop-color="#1d343e"/><stop offset="0.8" stop-color="#192e38"/><stop offset="0.825" stop-color="#162932"/><stop offset="0.85" stop-color="#12232b"/><stop offset="0.875" stop-color="#0e1d24"/><stop offset="0.9" stop-color="#0c1b22"/><stop offset="0.925" stop-color="#0c1b22"/><stop offset="0.95" stop-color="#0c1b22"/><stop offset="0.975" stop-color="#0c1b22"/><stop offset="1" stop-color="#0c1b22"/></linearGradient><linearGradient id="r0" gradientUnits="userSpaceOnUse" x1="523.94" y1="198.70" x2="503.45" y2="228.53"><stop offset="0" stop-color="#82603f"/><stop offset="0.05" stop-color="#805e3f"/><stop offset="0.1" stop-color="#7e5d3f"/><stop offset="0.15" stop-color="#7b5b40"/><stop offset="0.2" stop-color="#795a40"/><stop offset="0.25" stop-color="#775840"/><stop offset="0.3" stop-color="#74563f"/><stop offset="0.35" stop-color="#72543d"/><stop offset="0.4" stop-color="#6f533c"/><stop offset="0.45" stop-color="#6d513a"/><stop offset="0.5" stop-color="#6a4f39"/><stop offset="0.55" stop-color="#664c37"/><stop offset="0.6" stop-color="#634a36"/><stop offset="0.65" stop-color="#5f4734"/><stop offset="0.7" stop-color="#5c4533"/><stop offset="0.75" stop-color="#584231"/><stop offset="0.8" stop-color="#554030"/><stop offset="0.85" stop-color="#523e2f"/><stop offset="0.9" stop-color="#4f3c2d"/><stop offset="0.95" stop-color="#4c3a2c"/><stop offset="1" stop-color="#49382b"/></linearGradient><linearGradient id="r1" gradientUnits="userSpaceOnUse" x1="544.29" y1="213.30" x2="522.87" y2="241.55"><stop offset="0" stop-color="#78583a"/><stop offset="0.05" stop-color="#75563a"/><stop offset="0.1" stop-color="#705339"/><stop offset="0.15" stop-color="#6f5239"/><stop offset="0.2" stop-color="#6d5039"/><stop offset="0.25" stop-color="#6d503a"/><stop offset="0.3" stop-color="#6c503a"/><stop offset="0.35" stop-color="#6c503a"/><stop offset="0.4" stop-color="#6b4f39"/><stop offset="0.45" stop-color="#6a4f39"/><stop offset="0.5" stop-color="#694e38"/><stop offset="0.55" stop-color="#664c37"/><stop offset="0.6" stop-color="#644b36"/><stop offset="0.65" stop-color="#614935"/><stop offset="0.7" stop-color="#5f4734"/><stop offset="0.75" stop-color="#5c4533"/><stop offset="0.8" stop-color="#594332"/><stop offset="0.85" stop-color="#564131"/><stop offset="0.9" stop-color="#533f2f"/><stop offset="0.95" stop-color="#513d2e"/><stop offset="1" stop-color="#4f3c2d"/></linearGradient><linearGradient id="r2" gradientUnits="userSpaceOnUse" x1="547.86" y1="216.25" x2="523.87" y2="242.41"><stop offset="0" stop-color="#644930"/><stop offset="0.05" stop-color="#614831"/><stop offset="0.1" stop-color="#57402c"/><stop offset="0.15" stop-color="#56402c"/><stop offset="0.2" stop-color="#563f2d"/><stop offset="0.25" stop-color="#594230"/><stop offset="0.3" stop-color="#5d4532"/><stop offset="0.35" stop-color="#614734"/><stop offset="0.4" stop-color="#634935"/><stop offset="0.45" stop-color="#654b36"/><stop offset="0.5" stop-color="#674c37"/><stop offset="0.55" stop-color="#664c37"/><stop offset="0.6" stop-color="#664c37"/><stop offset="0.65" stop-color="#654b37"/><stop offset="0.7" stop-color="#634a36"/><stop offset="0.75" stop-color="#624a36"/><stop offset="0.8" stop-color="#604835"/><stop offset="0.85" stop-color="#5e4634"/><stop offset="0.9" stop-color="#5b4433"/><stop offset="0.95" stop-color="#584231"/><stop offset="1" stop-color="#574130"/></linearGradient><linearGradient id="r3" gradientUnits="userSpaceOnUse" x1="551.14" y1="219.53" x2="524.77" y2="243.39"><stop offset="0" stop-color="#523c28"/><stop offset="0.05" stop-color="#523d2a"/><stop offset="0.1" stop-color="#413021"/><stop offset="0.15" stop-color="#413021"/><stop offset="0.2" stop-color="#413022"/><stop offset="0.25" stop-color="#483526"/><stop offset="0.3" stop-color="#503b2b"/><stop offset="0.35" stop-color="#57402e"/><stop offset="0.4" stop-color="#5b4431"/><stop offset="0.45" stop-color="#604733"/><stop offset="0.5" stop-color="#644b35"/><stop offset="0.55" stop-color="#654b36"/><stop offset="0.6" stop-color="#664c37"/><stop offset="0.65" stop-color="#664d37"/><stop offset="0.7" stop-color="#674d37"/><stop offset="0.75" stop-color="#674d37"/><stop offset="0.8" stop-color="#654c37"/><stop offset="0.85" stop-color="#624a36"/><stop offset="0.9" stop-color="#604834"/><stop offset="0.95" stop-color="#5d4633"/><stop offset="1" stop-color="#5d4532"/></linearGradient><linearGradient id="r4" gradientUnits="userSpaceOnUse" x1="554.10" y1="223.10" x2="525.56" y2="244.46"><stop offset="0" stop-color="#443121"/><stop offset="0.05" stop-color="#473525"/><stop offset="0.1" stop-color="#2f2218"/><stop offset="0.15" stop-color="#2f2318"/><stop offset="0.2" stop-color="#302319"/><stop offset="0.25" stop-color="#3a2b1f"/><stop offset="0.3" stop-color="#463325"/><stop offset="0.35" stop-color="#4e3a2a"/><stop offset="0.4" stop-color="#553f2d"/><stop offset="0.45" stop-color="#5b4431"/><stop offset="0.5" stop-color="#624934"/><stop offset="0.55" stop-color="#644a35"/><stop offset="0.6" stop-color="#664c36"/><stop offset="0.65" stop-color="#674d37"/><stop offset="0.7" stop-color="#684e38"/><stop offset="0.75" stop-color="#6a4f38"/><stop offset="0.8" stop-color="#684e38"/><stop offset="0.85" stop-color="#654c37"/><stop offset="0.9" stop-color="#634a35"/><stop offset="0.95" stop-color="#604834"/><stop offset="1" stop-color="#604733"/></linearGradient><linearGradient id="r5" gradientUnits="userSpaceOnUse" x1="556.71" y1="226.93" x2="526.22" y2="245.60"><stop offset="0" stop-color="#39291c"/><stop offset="0.05" stop-color="#403022"/><stop offset="0.1" stop-color="#211811"/><stop offset="0.15" stop-color="#221911"/><stop offset="0.2" stop-color="#231a12"/><stop offset="0.25" stop-color="#302319"/><stop offset="0.3" stop-color="#3e2e21"/><stop offset="0.35" stop-color="#483526"/><stop offset="0.4" stop-color="#503c2b"/><stop offset="0.45" stop-color="#58422f"/><stop offset="0.5" stop-color="#5f4733"/><stop offset="0.55" stop-color="#624934"/><stop offset="0.6" stop-color="#654b36"/><stop offset="0.65" stop-color="#674d37"/><stop offset="0.7" stop-color="#694e38"/><stop offset="0.75" stop-color="#6b5039"/><stop offset="0.8" stop-color="#6a4f38"/><stop offset="0.85" stop-color="#674d37"/><stop offset="0.9" stop-color="#654b36"/><stop offset="0.95" stop-color="#624935"/><stop offset="1" stop-color="#614834"/></linearGradient><linearGradient id="r6" gradientUnits="userSpaceOnUse" x1="558.95" y1="230.99" x2="526.76" y2="246.81"><stop offset="0" stop-color="#322419"/><stop offset="0.05" stop-color="#3c2e21"/><stop offset="0.1" stop-color="#18120c"/><stop offset="0.15" stop-color="#1a130d"/><stop offset="0.2" stop-color="#1b140e"/><stop offset="0.25" stop-color="#2a1f16"/><stop offset="0.3" stop-color="#392a1e"/><stop offset="0.35" stop-color="#443324"/><stop offset="0.4" stop-color="#4d3929"/><stop offset="0.45" stop-color="#56402e"/><stop offset="0.5" stop-color="#5e4632"/><stop offset="0.55" stop-color="#614934"/><stop offset="0.6" stop-color="#644b35"/><stop offset="0.65" stop-color="#674d36"/><stop offset="0.7" stop-color="#694e37"/><stop offset="0.75" stop-color="#6c5039"/><stop offset="0.8" stop-color="#6a4f38"/><stop offset="0.85" stop-color="#684d37"/><stop offset="0.9" stop-color="#654b36"/><stop offset="0.95" stop-color="#634935"/><stop offset="1" stop-color="#624834"/></linearGradient><linearGradient id="r7" gradientUnits="userSpaceOnUse" x1="560.81" y1="235.24" x2="527.18" y2="248.07"><stop offset="0" stop-color="#2e2117"/><stop offset="0.05" stop-color="#3b2c20"/><stop offset="0.1" stop-color="#140e0a"/><stop offset="0.15" stop-color="#150f0b"/><stop offset="0.2" stop-color="#17110c"/><stop offset="0.25" stop-color="#261c14"/><stop offset="0.3" stop-color="#36281d"/><stop offset="0.35" stop-color="#423123"/><stop offset="0.4" stop-color="#4b3828"/><stop offset="0.45" stop-color="#543f2d"/><stop offset="0.5" stop-color="#5d4632"/><stop offset="0.55" stop-color="#604833"/><stop offset="0.6" stop-color="#644a35"/><stop offset="0.65" stop-color="#674c36"/><stop offset="0.7" stop-color="#6a4e37"/><stop offset="0.75" stop-color="#6c5039"/><stop offset="0.8" stop-color="#6a4f38"/><stop offset="0.85" stop-color="#684d37"/><stop offset="0.9" stop-color="#664b36"/><stop offset="0.95" stop-color="#634935"/><stop offset="1" stop-color="#624834"/></linearGradient><linearGradient id="r8" gradientUnits="userSpaceOnUse" x1="562.27" y1="239.64" x2="527.48" y2="249.36"><stop offset="0" stop-color="#2e2117"/><stop offset="0.05" stop-color="#3a2c1f"/><stop offset="0.1" stop-color="#130e09"/><stop offset="0.15" stop-color="#140f0a"/><stop offset="0.2" stop-color="#16100b"/><stop offset="0.25" stop-color="#261c14"/><stop offset="0.3" stop-color="#36281d"/><stop offset="0.35" stop-color="#423123"/><stop offset="0.4" stop-color="#4b3828"/><stop offset="0.45" stop-color="#543f2d"/><stop offset="0.5" stop-color="#5d4632"/><stop offset="0.55" stop-color="#604833"/><stop offset="0.6" stop-color="#644a35"/><stop offset="0.65" stop-color="#674d36"/><stop offset="0.7" stop-color="#6a4f37"/><stop offset="0.75" stop-color="#6d5139"/><stop offset="0.8" stop-color="#6b4f38"/><stop offset="0.85" stop-color="#684d37"/><stop offset="0.9" stop-color="#664c36"/><stop offset="0.95" stop-color="#644a35"/><stop offset="1" stop-color="#624834"/></linearGradient><linearGradient id="r9" gradientUnits="userSpaceOnUse" x1="563.32" y1="244.15" x2="527.67" y2="250.67"><stop offset="0" stop-color="#2f2117"/><stop offset="0.05" stop-color="#382b1f"/><stop offset="0.1" stop-color="#140f0a"/><stop offset="0.15" stop-color="#16100b"/><stop offset="0.2" stop-color="#17110c"/><stop offset="0.25" stop-color="#261c14"/><stop offset="0.3" stop-color="#36281d"/><stop offset="0.35" stop-color="#423123"/><stop offset="0.4" stop-color="#4c3828"/><stop offset="0.45" stop-color="#553f2d"/><stop offset="0.5" stop-color="#5e4632"/><stop offset="0.55" stop-color="#614934"/><stop offset="0.6" stop-color="#654b35"/><stop offset="0.65" stop-color="#684d37"/><stop offset="0.7" stop-color="#6b4f38"/><stop offset="0.75" stop-color="#6e5139"/><stop offset="0.8" stop-color="#6c5039"/><stop offset="0.85" stop-color="#694e38"/><stop offset="0.9" stop-color="#674c37"/><stop offset="0.95" stop-color="#654b36"/><stop offset="1" stop-color="#644a35"/></linearGradient><linearGradient id="r10" gradientUnits="userSpaceOnUse" x1="563.95" y1="248.75" x2="527.74" y2="252.00"><stop offset="0" stop-color="#302318"/><stop offset="0.05" stop-color="#35281d"/><stop offset="0.1" stop-color="#16100b"/><stop offset="0.15" stop-color="#17110c"/><stop offset="0.2" stop-color="#19120d"/><stop offset="0.25" stop-color="#271d14"/><stop offset="0.3" stop-color="#37281d"/><stop offset="0.35" stop-color="#433224"/><stop offset="0.4" stop-color="#4d3929"/><stop offset="0.45" stop-color="#56402e"/><stop offset="0.5" stop-color="#5f4732"/><stop offset="0.55" stop-color="#634a34"/><stop offset="0.6" stop-color="#674d36"/><stop offset="0.65" stop-color="#6a4f38"/><stop offset="0.7" stop-color="#6d5139"/><stop offset="0.75" stop-color="#6f533b"/><stop offset="0.8" stop-color="#6e523a"/><stop offset="0.85" stop-color="#6c5039"/><stop offset="0.9" stop-color="#694e38"/><stop offset="0.95" stop-color="#674c37"/><stop offset="1" stop-color="#684c36"/></linearGradient><linearGradient id="r11" gradientUnits="userSpaceOnUse" x1="564.15" y1="253.38" x2="527.71" y2="253.32"><stop offset="0" stop-color="#312318"/><stop offset="0.05" stop-color="#302419"/><stop offset="0.1" stop-color="#17110c"/><stop offset="0.15" stop-color="#19120c"/><stop offset="0.2" stop-color="#1a130d"/><stop offset="0.25" stop-color="#271d14"/><stop offset="0.3" stop-color="#37281d"/><stop offset="0.35" stop-color="#443224"/><stop offset="0.4" stop-color="#4e3929"/><stop offset="0.45" stop-color="#57412e"/><stop offset="0.5" stop-color="#604833"/><stop offset="0.55" stop-color="#654b36"/><stop offset="0.6" stop-color="#694f38"/><stop offset="0.65" stop-color="#6d513a"/><stop offset="0.7" stop-color="#6f533b"/><stop offset="0.75" stop-color="#72553c"/><stop offset="0.8" stop-color="#72553d"/><stop offset="0.85" stop-color="#6f533b"/><stop offset="0.9" stop-color="#6d513a"/><stop offset="0.95" stop-color="#6b4f39"/><stop offset="1" stop-color="#6d5038"/></linearGradient><linearGradient id="r12" gradientUnits="userSpaceOnUse" x1="563.93" y1="258.01" x2="527.57" y2="254.64"><stop offset="0" stop-color="#312318"/><stop offset="0.05" stop-color="#281e15"/><stop offset="0.1" stop-color="#17110b"/><stop offset="0.15" stop-color="#18120c"/><stop offset="0.2" stop-color="#19120d"/><stop offset="0.25" stop-color="#261c14"/><stop offset="0.3" stop-color="#36281c"/><stop offset="0.35" stop-color="#443224"/><stop offset="0.4" stop-color="#4e3a29"/><stop offset="0.45" stop-color="#59422f"/><stop offset="0.5" stop-color="#624934"/><stop offset="0.55" stop-color="#674d37"/><stop offset="0.6" stop-color="#6d513a"/><stop offset="0.65" stop-color="#71543c"/><stop offset="0.7" stop-color="#73563d"/><stop offset="0.75" stop-color="#76583f"/><stop offset="0.8" stop-color="#765940"/><stop offset="0.85" stop-color="#74573e"/><stop offset="0.9" stop-color="#72553d"/><stop offset="0.95" stop-color="#70533c"/><stop offset="1" stop-color="#74553b"/></linearGradient><linearGradient id="r13" gradientUnits="userSpaceOnUse" x1="563.29" y1="262.60" x2="527.33" y2="255.95"><stop offset="0" stop-color="#2f2217"/><stop offset="0.05" stop-color="#1f1710"/><stop offset="0.1" stop-color="#140f0a"/><stop offset="0.15" stop-color="#16100b"/><stop offset="0.2" stop-color="#17110b"/><stop offset="0.25" stop-color="#231912"/><stop offset="0.3" stop-color="#34261b"/><stop offset="0.35" stop-color="#423123"/><stop offset="0.4" stop-color="#4e3929"/><stop offset="0.45" stop-color="#5a422f"/><stop offset="0.5" stop-color="#634934"/><stop offset="0.55" stop-color="#6a4f38"/><stop offset="0.6" stop-color="#70543c"/><stop offset="0.65" stop-color="#75573e"/><stop offset="0.7" stop-color="#775a40"/><stop offset="0.75" stop-color="#7a5c42"/><stop offset="0.8" stop-color="#7c5d43"/><stop offset="0.85" stop-color="#7a5b42"/><stop offset="0.9" stop-color="#775940"/><stop offset="0.95" stop-color="#75573f"/><stop offset="1" stop-color="#7c5a3f"/></linearGradient><linearGradient id="r14" gradientUnits="userSpaceOnUse" x1="562.23" y1="267.11" x2="527.00" y2="257.23"><stop offset="0" stop-color="#2c2015"/><stop offset="0.05" stop-color="#15100b"/><stop offset="0.1" stop-color="#100c08"/><stop offset="0.15" stop-color="#110d08"/><stop offset="0.2" stop-color="#130d09"/><stop offset="0.25" stop-color="#1f160f"/><stop offset="0.3" stop-color="#312319"/><stop offset="0.35" stop-color="#402f22"/><stop offset="0.4" stop-color="#4d3928"/><stop offset="0.45" stop-color="#5a422f"/><stop offset="0.5" stop-color="#644a35"/><stop offset="0.55" stop-color="#6c5039"/><stop offset="0.6" stop-color="#73563d"/><stop offset="0.65" stop-color="#785a40"/><stop offset="0.7" stop-color="#7b5d42"/><stop offset="0.75" stop-color="#7e5f44"/><stop offset="0.8" stop-color="#816146"/><stop offset="0.85" stop-color="#7f5f44"/><stop offset="0.9" stop-color="#7d5d43"/><stop offset="0.95" stop-color="#7b5b42"/><stop offset="1" stop-color="#845f42"/></linearGradient><linearGradient id="r15" gradientUnits="userSpaceOnUse" x1="547.38" y1="311.93" x2="512.56" y2="300.43"><stop offset="0" stop-color="#2a1e14"/><stop offset="0.05" stop-color="#110c08"/><stop offset="0.1" stop-color="#0d0a06"/><stop offset="0.15" stop-color="#0f0b07"/><stop offset="0.2" stop-color="#100c08"/><stop offset="0.25" stop-color="#1c140e"/><stop offset="0.3" stop-color="#2f2218"/><stop offset="0.35" stop-color="#3f2e21"/><stop offset="0.4" stop-color="#4c3828"/><stop offset="0.45" stop-color="#5a422f"/><stop offset="0.5" stop-color="#644a35"/><stop offset="0.55" stop-color="#6c5139"/><stop offset="0.6" stop-color="#75573e"/><stop offset="0.65" stop-color="#7a5c41"/><stop offset="0.7" stop-color="#7d5e43"/><stop offset="0.75" stop-color="#806045"/><stop offset="0.8" stop-color="#836347"/><stop offset="0.85" stop-color="#816146"/><stop offset="0.9" stop-color="#7f5f44"/><stop offset="0.95" stop-color="#7d5d43"/><stop offset="1" stop-color="#876143"/></linearGradient><linearGradient id="r16" gradientUnits="userSpaceOnUse" x1="532.74" y1="355.79" x2="498.18" y2="346.07"><stop offset="0" stop-color="#2b1e14"/><stop offset="0.05" stop-color="#130e0a"/><stop offset="0.1" stop-color="#100c08"/><stop offset="0.15" stop-color="#110d09"/><stop offset="0.2" stop-color="#130e09"/><stop offset="0.25" stop-color="#1e160f"/><stop offset="0.3" stop-color="#302319"/><stop offset="0.35" stop-color="#402f22"/><stop offset="0.4" stop-color="#4d3929"/><stop offset="0.45" stop-color="#5a422f"/><stop offset="0.5" stop-color="#644a35"/><stop offset="0.55" stop-color="#6c5039"/><stop offset="0.6" stop-color="#74573e"/><stop offset="0.65" stop-color="#795b41"/><stop offset="0.7" stop-color="#7c5d43"/><stop offset="0.75" stop-color="#7e5f44"/><stop offset="0.8" stop-color="#816246"/><stop offset="0.85" stop-color="#7f6045"/><stop offset="0.9" stop-color="#7d5d43"/><stop offset="0.95" stop-color="#7b5b42"/><stop offset="1" stop-color="#845f42"/></linearGradient><linearGradient id="r17" gradientUnits="userSpaceOnUse" x1="531.88" y1="358.36" x2="497.96" y2="352.20"><stop offset="0" stop-color="#2c2015"/><stop offset="0.05" stop-color="#17110c"/><stop offset="0.1" stop-color="#15100b"/><stop offset="0.15" stop-color="#16110c"/><stop offset="0.2" stop-color="#18120d"/><stop offset="0.25" stop-color="#231a12"/><stop offset="0.3" stop-color="#34261b"/><stop offset="0.35" stop-color="#423123"/><stop offset="0.4" stop-color="#4e3a2a"/><stop offset="0.45" stop-color="#5a4330"/><stop offset="0.5" stop-color="#634a35"/><stop offset="0.55" stop-color="#6a5039"/><stop offset="0.6" stop-color="#72563d"/><stop offset="0.65" stop-color="#765940"/><stop offset="0.7" stop-color="#795b42"/><stop offset="0.75" stop-color="#7b5d43"/><stop offset="0.8" stop-color="#7e5f45"/><stop offset="0.85" stop-color="#7b5d43"/><stop offset="0.9" stop-color="#795a41"/><stop offset="0.95" stop-color="#765840"/><stop offset="1" stop-color="#7e5b3f"/></linearGradient><linearGradient id="r18" gradientUnits="userSpaceOnUse" x1="531.03" y1="360.93" x2="497.79" y2="358.33"><stop offset="0" stop-color="#2d2016"/><stop offset="0.05" stop-color="#1b140f"/><stop offset="0.1" stop-color="#1a140e"/><stop offset="0.15" stop-color="#1b150f"/><stop offset="0.2" stop-color="#1d1610"/><stop offset="0.25" stop-color="#271d15"/><stop offset="0.3" stop-color="#37291e"/><stop offset="0.35" stop-color="#443325"/><stop offset="0.4" stop-color="#4f3b2b"/><stop offset="0.45" stop-color="#5a4331"/><stop offset="0.5" stop-color="#624a35"/><stop offset="0.55" stop-color="#694f39"/><stop offset="0.6" stop-color="#70553d"/><stop offset="0.65" stop-color="#74583f"/><stop offset="0.7" stop-color="#765941"/><stop offset="0.75" stop-color="#785b42"/><stop offset="0.8" stop-color="#7a5d43"/><stop offset="0.85" stop-color="#775a41"/><stop offset="0.9" stop-color="#74573f"/><stop offset="0.95" stop-color="#71553d"/><stop offset="1" stop-color="#78573c"/></linearGradient><linearGradient id="r19" gradientUnits="userSpaceOnUse" x1="530.17" y1="363.49" x2="497.67" y2="364.46"><stop offset="0" stop-color="#2e2217"/><stop offset="0.05" stop-color="#1f1811"/><stop offset="0.1" stop-color="#1f1812"/><stop offset="0.15" stop-color="#201912"/><stop offset="0.2" stop-color="#221a13"/><stop offset="0.25" stop-color="#2b2118"/><stop offset="0.3" stop-color="#3a2c20"/><stop offset="0.35" stop-color="#463527"/><stop offset="0.4" stop-color="#503c2c"/><stop offset="0.45" stop-color="#5a4431"/><stop offset="0.5" stop-color="#624a35"/><stop offset="0.55" stop-color="#684f39"/><stop offset="0.6" stop-color="#6e543c"/><stop offset="0.65" stop-color="#71563e"/><stop offset="0.7" stop-color="#73583f"/><stop offset="0.75" stop-color="#755941"/><stop offset="0.8" stop-color="#775a42"/><stop offset="0.85" stop-color="#735740"/><stop offset="0.9" stop-color="#70543d"/><stop offset="0.95" stop-color="#6c513b"/><stop offset="1" stop-color="#72523a"/></linearGradient><linearGradient id="r20" gradientUnits="userSpaceOnUse" x1="529.31" y1="366.06" x2="497.63" y2="370.60"><stop offset="0" stop-color="#2f2218"/><stop offset="0.05" stop-color="#231b14"/><stop offset="0.1" stop-color="#241c15"/><stop offset="0.15" stop-color="#251d16"/><stop offset="0.2" stop-color="#271e16"/><stop offset="0.25" stop-color="#30251b"/><stop offset="0.3" stop-color="#3d2e22"/><stop offset="0.35" stop-color="#483728"/><stop offset="0.4" stop-color="#513d2d"/><stop offset="0.45" stop-color="#5a4432"/><stop offset="0.5" stop-color="#614936"/><stop offset="0.55" stop-color="#664e39"/><stop offset="0.6" stop-color="#6c523c"/><stop offset="0.65" stop-color="#6f553d"/><stop offset="0.7" stop-color="#70563e"/><stop offset="0.75" stop-color="#72573f"/><stop offset="0.8" stop-color="#735840"/><stop offset="0.85" stop-color="#6f553e"/><stop offset="0.9" stop-color="#6c513b"/><stop offset="0.95" stop-color="#684e39"/><stop offset="1" stop-color="#6c4e37"/></linearGradient><linearGradient id="r21" gradientUnits="userSpaceOnUse" x1="528.46" y1="368.63" x2="497.72" y2="376.73"><stop offset="0" stop-color="#302419"/><stop offset="0.05" stop-color="#271e16"/><stop offset="0.1" stop-color="#292018"/><stop offset="0.15" stop-color="#2a2119"/><stop offset="0.2" stop-color="#2c221a"/><stop offset="0.25" stop-color="#34281e"/><stop offset="0.3" stop-color="#403125"/><stop offset="0.35" stop-color="#4a392a"/><stop offset="0.4" stop-color="#523f2e"/><stop offset="0.45" stop-color="#5a4532"/><stop offset="0.5" stop-color="#604936"/><stop offset="0.55" stop-color="#654d39"/><stop offset="0.6" stop-color="#6a513b"/><stop offset="0.65" stop-color="#6d533d"/><stop offset="0.7" stop-color="#6e543d"/><stop offset="0.75" stop-color="#6f553e"/><stop offset="0.8" stop-color="#70563f"/><stop offset="0.85" stop-color="#6c523c"/><stop offset="0.9" stop-color="#674e3a"/><stop offset="0.95" stop-color="#634a37"/><stop offset="1" stop-color="#664a34"/></linearGradient><linearGradient id="r22" gradientUnits="userSpaceOnUse" x1="527.60" y1="371.20" x2="498.00" y2="382.86"><stop offset="0" stop-color="#31241a"/><stop offset="0.05" stop-color="#2b2119"/><stop offset="0.1" stop-color="#2e241b"/><stop offset="0.15" stop-color="#2f251c"/><stop offset="0.2" stop-color="#31261d"/><stop offset="0.25" stop-color="#382c21"/><stop offset="0.3" stop-color="#433427"/><stop offset="0.35" stop-color="#4c3a2c"/><stop offset="0.4" stop-color="#53402f"/><stop offset="0.45" stop-color="#5a4533"/><stop offset="0.5" stop-color="#604936"/><stop offset="0.55" stop-color="#644d38"/><stop offset="0.6" stop-color="#68503b"/><stop offset="0.65" stop-color="#6a523c"/><stop offset="0.7" stop-color="#6b523c"/><stop offset="0.75" stop-color="#6c533d"/><stop offset="0.8" stop-color="#6c533d"/><stop offset="0.85" stop-color="#684f3a"/><stop offset="0.9" stop-color="#634b38"/><stop offset="0.95" stop-color="#5e4734"/><stop offset="1" stop-color="#604631"/></linearGradient><linearGradient id="r23" gradientUnits="userSpaceOnUse" x1="526.74" y1="373.76" x2="498.59" y2="388.96"><stop offset="0" stop-color="#33261a"/><stop offset="0.05" stop-color="#2f241b"/><stop offset="0.1" stop-color="#33281e"/><stop offset="0.15" stop-color="#34291f"/><stop offset="0.2" stop-color="#362b20"/><stop offset="0.25" stop-color="#3d3024"/><stop offset="0.3" stop-color="#463729"/><stop offset="0.35" stop-color="#4e3c2d"/><stop offset="0.4" stop-color="#544130"/><stop offset="0.45" stop-color="#5a4534"/><stop offset="0.5" stop-color="#5f4936"/><stop offset="0.55" stop-color="#634c38"/><stop offset="0.6" stop-color="#664f3a"/><stop offset="0.65" stop-color="#68503b"/><stop offset="0.7" stop-color="#68503b"/><stop offset="0.75" stop-color="#68513c"/><stop offset="0.8" stop-color="#69513c"/><stop offset="0.85" stop-color="#644c39"/><stop offset="0.9" stop-color="#5f4836"/><stop offset="0.95" stop-color="#5a4432"/><stop offset="1" stop-color="#5a422f"/></linearGradient><linearGradient id="r24" gradientUnits="userSpaceOnUse" x1="526.13" y1="376.38" x2="499.72" y2="394.98"><stop offset="0" stop-color="#34261b"/><stop offset="0.05" stop-color="#33281e"/><stop offset="0.1" stop-color="#372c21"/><stop offset="0.15" stop-color="#392d22"/><stop offset="0.2" stop-color="#3b2f23"/><stop offset="0.25" stop-color="#413327"/><stop offset="0.3" stop-color="#4a3a2b"/><stop offset="0.35" stop-color="#503e2f"/><stop offset="0.4" stop-color="#554232"/><stop offset="0.45" stop-color="#5a4634"/><stop offset="0.5" stop-color="#5e4936"/><stop offset="0.55" stop-color="#614c38"/><stop offset="0.6" stop-color="#644e3a"/><stop offset="0.65" stop-color="#654f3a"/><stop offset="0.7" stop-color="#654f3a"/><stop offset="0.75" stop-color="#654e3a"/><stop offset="0.8" stop-color="#654e3a"/><stop offset="0.85" stop-color="#604a37"/><stop offset="0.9" stop-color="#5a4534"/><stop offset="0.95" stop-color="#554030"/><stop offset="1" stop-color="#543e2c"/></linearGradient><linearGradient id="r25" gradientUnits="userSpaceOnUse" x1="526.23" y1="379.03" x2="501.69" y2="400.76"><stop offset="0" stop-color="#35281c"/><stop offset="0.05" stop-color="#372b20"/><stop offset="0.1" stop-color="#3c3024"/><stop offset="0.15" stop-color="#3e3126"/><stop offset="0.2" stop-color="#403327"/><stop offset="0.25" stop-color="#45372a"/><stop offset="0.3" stop-color="#4d3c2e"/><stop offset="0.35" stop-color="#524030"/><stop offset="0.4" stop-color="#564333"/><stop offset="0.45" stop-color="#5a4635"/><stop offset="0.5" stop-color="#5d4937"/><stop offset="0.55" stop-color="#604b38"/><stop offset="0.6" stop-color="#634d39"/><stop offset="0.65" stop-color="#634d39"/><stop offset="0.7" stop-color="#624d39"/><stop offset="0.75" stop-color="#624c39"/><stop offset="0.8" stop-color="#624c39"/><stop offset="0.85" stop-color="#5c4735"/><stop offset="0.9" stop-color="#564232"/><stop offset="0.95" stop-color="#503d2e"/><stop offset="1" stop-color="#4e3a29"/></linearGradient><linearGradient id="r26" gradientUnits="userSpaceOnUse" x1="527.15" y1="381.54" x2="504.74" y2="406.03"><stop offset="0" stop-color="#36281d"/><stop offset="0.05" stop-color="#3b2e23"/><stop offset="0.1" stop-color="#413428"/><stop offset="0.15" stop-color="#433529"/><stop offset="0.2" stop-color="#45372a"/><stop offset="0.25" stop-color="#4a3a2c"/><stop offset="0.3" stop-color="#503f30"/><stop offset="0.35" stop-color="#544232"/><stop offset="0.4" stop-color="#574434"/><stop offset="0.45" stop-color="#5a4735"/><stop offset="0.5" stop-color="#5d4937"/><stop offset="0.55" stop-color="#5f4a38"/><stop offset="0.6" stop-color="#614c39"/><stop offset="0.65" stop-color="#604c39"/><stop offset="0.7" stop-color="#604b38"/><stop offset="0.75" stop-color="#5f4a38"/><stop offset="0.8" stop-color="#5e4a37"/><stop offset="0.85" stop-color="#584433"/><stop offset="0.9" stop-color="#523f30"/><stop offset="0.95" stop-color="#4b392b"/><stop offset="1" stop-color="#483626"/></linearGradient><linearGradient id="r27" gradientUnits="userSpaceOnUse" x1="528.70" y1="383.73" x2="508.77" y2="410.61"><stop offset="0" stop-color="#372a1e"/><stop offset="0.05" stop-color="#3f3125"/><stop offset="0.1" stop-color="#46382b"/><stop offset="0.15" stop-color="#48392c"/><stop offset="0.2" stop-color="#4a3b2d"/><stop offset="0.25" stop-color="#4e3e2f"/><stop offset="0.3" stop-color="#534232"/><stop offset="0.35" stop-color="#564434"/><stop offset="0.4" stop-color="#584635"/><stop offset="0.45" stop-color="#5a4736"/><stop offset="0.5" stop-color="#5c4937"/><stop offset="0.55" stop-color="#5d4a38"/><stop offset="0.6" stop-color="#5f4b38"/><stop offset="0.65" stop-color="#5e4a38"/><stop offset="0.7" stop-color="#5d4937"/><stop offset="0.75" stop-color="#5c4836"/><stop offset="0.8" stop-color="#5b4736"/><stop offset="0.85" stop-color="#544132"/><stop offset="0.9" stop-color="#4d3c2e"/><stop offset="0.95" stop-color="#473629"/><stop offset="1" stop-color="#423124"/></linearGradient><linearGradient id="r28" gradientUnits="userSpaceOnUse" x1="530.68" y1="385.54" x2="513.43" y2="414.57"><stop offset="0" stop-color="#382a1f"/><stop offset="0.05" stop-color="#433428"/><stop offset="0.1" stop-color="#4b3c2e"/><stop offset="0.15" stop-color="#4d3d2f"/><stop offset="0.2" stop-color="#4f3f30"/><stop offset="0.25" stop-color="#524232"/><stop offset="0.3" stop-color="#564535"/><stop offset="0.35" stop-color="#584635"/><stop offset="0.4" stop-color="#594736"/><stop offset="0.45" stop-color="#5a4837"/><stop offset="0.5" stop-color="#5b4937"/><stop offset="0.55" stop-color="#5c4937"/><stop offset="0.6" stop-color="#5d4a38"/><stop offset="0.65" stop-color="#5c4937"/><stop offset="0.7" stop-color="#5a4736"/><stop offset="0.75" stop-color="#594635"/><stop offset="0.8" stop-color="#574534"/><stop offset="0.85" stop-color="#503f30"/><stop offset="0.9" stop-color="#49392c"/><stop offset="0.95" stop-color="#423327"/><stop offset="1" stop-color="#3c2d21"/></linearGradient><linearGradient id="r29" gradientUnits="userSpaceOnUse" x1="532.97" y1="386.95" x2="518.44" y2="418.11"><stop offset="0" stop-color="#392c20"/><stop offset="0.05" stop-color="#47382a"/><stop offset="0.1" stop-color="#504031"/><stop offset="0.15" stop-color="#524232"/><stop offset="0.2" stop-color="#544334"/><stop offset="0.25" stop-color="#574535"/><stop offset="0.3" stop-color="#594837"/><stop offset="0.35" stop-color="#5a4837"/><stop offset="0.4" stop-color="#5a4837"/><stop offset="0.45" stop-color="#5a4837"/><stop offset="0.5" stop-color="#5b4837"/><stop offset="0.55" stop-color="#5b4837"/><stop offset="0.6" stop-color="#5b4937"/><stop offset="0.65" stop-color="#594736"/><stop offset="0.7" stop-color="#574535"/><stop offset="0.75" stop-color="#564434"/><stop offset="0.8" stop-color="#544233"/><stop offset="0.85" stop-color="#4c3c2e"/><stop offset="0.9" stop-color="#45352a"/><stop offset="0.95" stop-color="#3d2f25"/><stop offset="1" stop-color="#36291e"/></linearGradient><linearGradient id="r30" gradientUnits="userSpaceOnUse" x1="662.68" y1="440.20" x2="649.46" y2="472.54"><stop offset="0" stop-color="#3a2c20"/><stop offset="0.05" stop-color="#49392b"/><stop offset="0.1" stop-color="#534233"/><stop offset="0.15" stop-color="#554434"/><stop offset="0.2" stop-color="#574535"/><stop offset="0.25" stop-color="#594737"/><stop offset="0.3" stop-color="#5b4938"/><stop offset="0.35" stop-color="#5b4938"/><stop offset="0.4" stop-color="#5b4938"/><stop offset="0.45" stop-color="#5a4838"/><stop offset="0.5" stop-color="#5a4837"/><stop offset="0.55" stop-color="#5a4837"/><stop offset="0.6" stop-color="#5a4837"/><stop offset="0.65" stop-color="#584636"/><stop offset="0.7" stop-color="#564434"/><stop offset="0.75" stop-color="#544333"/><stop offset="0.8" stop-color="#524132"/><stop offset="0.85" stop-color="#4a3a2d"/><stop offset="0.9" stop-color="#433429"/><stop offset="0.95" stop-color="#3b2d23"/><stop offset="1" stop-color="#33271d"/></linearGradient><linearGradient id="r31" gradientUnits="userSpaceOnUse" x1="791.56" y1="492.99" x2="779.56" y2="525.89"><stop offset="0" stop-color="#3e2f22"/><stop offset="0.05" stop-color="#4c3b2c"/><stop offset="0.1" stop-color="#554333"/><stop offset="0.15" stop-color="#574534"/><stop offset="0.2" stop-color="#594736"/><stop offset="0.25" stop-color="#5b4837"/><stop offset="0.3" stop-color="#5d4a38"/><stop offset="0.35" stop-color="#5d4a38"/><stop offset="0.4" stop-color="#5c4a38"/><stop offset="0.45" stop-color="#5c4938"/><stop offset="0.5" stop-color="#5c4937"/><stop offset="0.55" stop-color="#5b4937"/><stop offset="0.6" stop-color="#5b4837"/><stop offset="0.65" stop-color="#594636"/><stop offset="0.7" stop-color="#564434"/><stop offset="0.75" stop-color="#544233"/><stop offset="0.8" stop-color="#514031"/><stop offset="0.85" stop-color="#49392c"/><stop offset="0.9" stop-color="#413328"/><stop offset="0.95" stop-color="#3a2c22"/><stop offset="1" stop-color="#32261c"/></linearGradient><linearGradient id="r32" gradientUnits="userSpaceOnUse" x1="792.36" y1="493.23" x2="782.92" y2="526.98"><stop offset="0" stop-color="#483626"/><stop offset="0.05" stop-color="#53402f"/><stop offset="0.1" stop-color="#5b4634"/><stop offset="0.15" stop-color="#5c4835"/><stop offset="0.2" stop-color="#5e4937"/><stop offset="0.25" stop-color="#604b38"/><stop offset="0.3" stop-color="#624d39"/><stop offset="0.35" stop-color="#614c38"/><stop offset="0.4" stop-color="#604b38"/><stop offset="0.45" stop-color="#5f4b38"/><stop offset="0.5" stop-color="#5f4a37"/><stop offset="0.55" stop-color="#5e4a37"/><stop offset="0.6" stop-color="#5d4937"/><stop offset="0.65" stop-color="#5a4735"/><stop offset="0.7" stop-color="#574433"/><stop offset="0.75" stop-color="#544231"/><stop offset="0.8" stop-color="#503e2f"/><stop offset="0.85" stop-color="#463629"/><stop offset="0.9" stop-color="#3d2f24"/><stop offset="0.95" stop-color="#362920"/><stop offset="1" stop-color="#2f241a"/></linearGradient><linearGradient id="r33" gradientUnits="userSpaceOnUse" x1="793.18" y1="493.38" x2="786.36" y2="527.76"><stop offset="0" stop-color="#523d2b"/><stop offset="0.05" stop-color="#5a4431"/><stop offset="0.1" stop-color="#604936"/><stop offset="0.15" stop-color="#614b36"/><stop offset="0.2" stop-color="#634c37"/><stop offset="0.25" stop-color="#644d38"/><stop offset="0.3" stop-color="#664f39"/><stop offset="0.35" stop-color="#654e39"/><stop offset="0.4" stop-color="#644d38"/><stop offset="0.45" stop-color="#634c38"/><stop offset="0.5" stop-color="#614b37"/><stop offset="0.55" stop-color="#604a37"/><stop offset="0.6" stop-color="#5f4936"/><stop offset="0.65" stop-color="#5b4634"/><stop offset="0.7" stop-color="#574332"/><stop offset="0.75" stop-color="#534030"/><stop offset="0.8" stop-color="#4d3b2c"/><stop offset="0.85" stop-color="#403125"/><stop offset="0.9" stop-color="#362920"/><stop offset="0.95" stop-color="#30251c"/><stop offset="1" stop-color="#2a2017"/></linearGradient><linearGradient id="r34" gradientUnits="userSpaceOnUse" x1="794.01" y1="493.45" x2="789.85" y2="528.24"><stop offset="0" stop-color="#5b432f"/><stop offset="0.05" stop-color="#614834"/><stop offset="0.1" stop-color="#654c36"/><stop offset="0.15" stop-color="#664d37"/><stop offset="0.2" stop-color="#674e38"/><stop offset="0.25" stop-color="#684f39"/><stop offset="0.3" stop-color="#695039"/><stop offset="0.35" stop-color="#684f39"/><stop offset="0.4" stop-color="#664e38"/><stop offset="0.45" stop-color="#654d37"/><stop offset="0.5" stop-color="#644c37"/><stop offset="0.55" stop-color="#624b36"/><stop offset="0.6" stop-color="#614a36"/><stop offset="0.65" stop-color="#5c4633"/><stop offset="0.7" stop-color="#574230"/><stop offset="0.75" stop-color="#523f2e"/><stop offset="0.8" stop-color="#4a3829"/><stop offset="0.85" stop-color="#3a2c21"/><stop offset="0.9" stop-color="#2f231a"/><stop offset="0.95" stop-color="#291f17"/><stop offset="1" stop-color="#241b14"/></linearGradient><linearGradient id="r35" gradientUnits="userSpaceOnUse" x1="794.84" y1="493.45" x2="793.37" y2="528.42"><stop offset="0" stop-color="#614833"/><stop offset="0.05" stop-color="#654b35"/><stop offset="0.1" stop-color="#684e37"/><stop offset="0.15" stop-color="#694f38"/><stop offset="0.2" stop-color="#6a5038"/><stop offset="0.25" stop-color="#6b5039"/><stop offset="0.3" stop-color="#6c5139"/><stop offset="0.35" stop-color="#6a5039"/><stop offset="0.4" stop-color="#684f38"/><stop offset="0.45" stop-color="#674e37"/><stop offset="0.5" stop-color="#654c37"/><stop offset="0.55" stop-color="#634b36"/><stop offset="0.6" stop-color="#624a35"/><stop offset="0.65" stop-color="#5c4532"/><stop offset="0.7" stop-color="#56412f"/><stop offset="0.75" stop-color="#513d2c"/><stop offset="0.8" stop-color="#473527"/><stop offset="0.85" stop-color="#35281d"/><stop offset="0.9" stop-color="#281e16"/><stop offset="0.95" stop-color="#231a13"/><stop offset="1" stop-color="#1e1710"/></linearGradient><linearGradient id="r36" gradientUnits="userSpaceOnUse" x1="795.67" y1="493.37" x2="796.90" y2="528.30"><stop offset="0" stop-color="#664b35"/><stop offset="0.05" stop-color="#684d36"/><stop offset="0.1" stop-color="#6a4f37"/><stop offset="0.15" stop-color="#6b4f38"/><stop offset="0.2" stop-color="#6b5038"/><stop offset="0.25" stop-color="#6c5139"/><stop offset="0.3" stop-color="#6d5239"/><stop offset="0.35" stop-color="#6b5139"/><stop offset="0.4" stop-color="#694f38"/><stop offset="0.45" stop-color="#684e37"/><stop offset="0.5" stop-color="#664c36"/><stop offset="0.55" stop-color="#644b35"/><stop offset="0.6" stop-color="#624a35"/><stop offset="0.65" stop-color="#5c4531"/><stop offset="0.7" stop-color="#56402e"/><stop offset="0.75" stop-color="#503c2b"/><stop offset="0.8" stop-color="#443325"/><stop offset="0.85" stop-color="#31241a"/><stop offset="0.9" stop-color="#231a12"/><stop offset="0.95" stop-color="#1e1610"/><stop offset="1" stop-color="#1a130d"/></linearGradient><linearGradient id="r37" gradientUnits="userSpaceOnUse" x1="796.49" y1="493.22" x2="800.40" y2="527.90"><stop offset="0" stop-color="#684c36"/><stop offset="0.05" stop-color="#694e37"/><stop offset="0.1" stop-color="#6b4f38"/><stop offset="0.15" stop-color="#6b5038"/><stop offset="0.2" stop-color="#6c5138"/><stop offset="0.25" stop-color="#6d5139"/><stop offset="0.3" stop-color="#6e5239"/><stop offset="0.35" stop-color="#6c5138"/><stop offset="0.4" stop-color="#6a4f38"/><stop offset="0.45" stop-color="#684e37"/><stop offset="0.5" stop-color="#664c36"/><stop offset="0.55" stop-color="#644b35"/><stop offset="0.6" stop-color="#624934"/><stop offset="0.65" stop-color="#5c4531"/><stop offset="0.7" stop-color="#56402e"/><stop offset="0.75" stop-color="#4f3b2a"/><stop offset="0.8" stop-color="#433224"/><stop offset="0.85" stop-color="#2e2218"/><stop offset="0.9" stop-color="#201711"/><stop offset="0.95" stop-color="#1b140e"/><stop offset="1" stop-color="#17110c"/></linearGradient><linearGradient id="r38" gradientUnits="userSpaceOnUse" x1="797.30" y1="493.01" x2="803.86" y2="527.22"><stop offset="0" stop-color="#684d36"/><stop offset="0.05" stop-color="#6a4e37"/><stop offset="0.1" stop-color="#6b4f38"/><stop offset="0.15" stop-color="#6c5038"/><stop offset="0.2" stop-color="#6d5139"/><stop offset="0.25" stop-color="#6d5239"/><stop offset="0.3" stop-color="#6e5239"/><stop offset="0.35" stop-color="#6c5139"/><stop offset="0.4" stop-color="#6a4f38"/><stop offset="0.45" stop-color="#684e37"/><stop offset="0.5" stop-color="#664c36"/><stop offset="0.55" stop-color="#644b35"/><stop offset="0.6" stop-color="#624a34"/><stop offset="0.65" stop-color="#5c4531"/><stop offset="0.7" stop-color="#56402e"/><stop offset="0.75" stop-color="#4f3b2a"/><stop offset="0.8" stop-color="#433224"/><stop offset="0.85" stop-color="#2e2218"/><stop offset="0.9" stop-color="#201711"/><stop offset="0.95" stop-color="#1c140e"/><stop offset="1" stop-color="#17110c"/></linearGradient><linearGradient id="r39" gradientUnits="userSpaceOnUse" x1="798.08" y1="492.73" x2="807.26" y2="526.28"><stop offset="0" stop-color="#684d36"/><stop offset="0.05" stop-color="#6a4e37"/><stop offset="0.1" stop-color="#6b5038"/><stop offset="0.15" stop-color="#6c5038"/><stop offset="0.2" stop-color="#6d5139"/><stop offset="0.25" stop-color="#6e5239"/><stop offset="0.3" stop-color="#6f533a"/><stop offset="0.35" stop-color="#6d5139"/><stop offset="0.4" stop-color="#6b5038"/><stop offset="0.45" stop-color="#694e37"/><stop offset="0.5" stop-color="#674d36"/><stop offset="0.55" stop-color="#654b36"/><stop offset="0.6" stop-color="#634a35"/><stop offset="0.65" stop-color="#5d4532"/><stop offset="0.7" stop-color="#57412e"/><stop offset="0.75" stop-color="#503c2b"/><stop offset="0.8" stop-color="#453325"/><stop offset="0.85" stop-color="#31241a"/><stop offset="0.9" stop-color="#231a13"/><stop offset="0.95" stop-color="#1f1710"/><stop offset="1" stop-color="#1b140e"/></linearGradient><linearGradient id="r40" gradientUnits="userSpaceOnUse" x1="798.85" y1="492.40" x2="810.58" y2="525.08"><stop offset="0" stop-color="#694d36"/><stop offset="0.05" stop-color="#6b4f37"/><stop offset="0.1" stop-color="#6c5038"/><stop offset="0.15" stop-color="#6d5139"/><stop offset="0.2" stop-color="#6e5239"/><stop offset="0.25" stop-color="#6f533a"/><stop offset="0.3" stop-color="#70543a"/><stop offset="0.35" stop-color="#6e5339"/><stop offset="0.4" stop-color="#6c5139"/><stop offset="0.45" stop-color="#6a4f38"/><stop offset="0.5" stop-color="#684e37"/><stop offset="0.55" stop-color="#664c36"/><stop offset="0.6" stop-color="#644b35"/><stop offset="0.65" stop-color="#5e4632"/><stop offset="0.7" stop-color="#58422f"/><stop offset="0.75" stop-color="#523d2c"/><stop offset="0.8" stop-color="#483627"/><stop offset="0.85" stop-color="#36281d"/><stop offset="0.9" stop-color="#2a1f16"/><stop offset="0.95" stop-color="#251c14"/><stop offset="1" stop-color="#211811"/></linearGradient><linearGradient id="r41" gradientUnits="userSpaceOnUse" x1="799.59" y1="492.01" x2="813.81" y2="523.65"><stop offset="0" stop-color="#6a4e36"/><stop offset="0.05" stop-color="#6d5038"/><stop offset="0.1" stop-color="#6e5239"/><stop offset="0.15" stop-color="#6f5339"/><stop offset="0.2" stop-color="#70543a"/><stop offset="0.25" stop-color="#71553a"/><stop offset="0.3" stop-color="#72563b"/><stop offset="0.35" stop-color="#70543a"/><stop offset="0.4" stop-color="#6e5339"/><stop offset="0.45" stop-color="#6c5139"/><stop offset="0.5" stop-color="#6a4f38"/><stop offset="0.55" stop-color="#684e37"/><stop offset="0.6" stop-color="#664c36"/><stop offset="0.65" stop-color="#604833"/><stop offset="0.7" stop-color="#5b4431"/><stop offset="0.75" stop-color="#55402e"/><stop offset="0.8" stop-color="#4c3929"/><stop offset="0.85" stop-color="#3d2e21"/><stop offset="0.9" stop-color="#33261b"/><stop offset="0.95" stop-color="#2e2219"/><stop offset="1" stop-color="#2a1f16"/></linearGradient><linearGradient id="r42" gradientUnits="userSpaceOnUse" x1="800.30" y1="491.58" x2="816.92" y2="521.99"><stop offset="0" stop-color="#6d5037"/><stop offset="0.05" stop-color="#705239"/><stop offset="0.1" stop-color="#72543a"/><stop offset="0.15" stop-color="#73553a"/><stop offset="0.2" stop-color="#74563b"/><stop offset="0.25" stop-color="#75573c"/><stop offset="0.3" stop-color="#76593c"/><stop offset="0.35" stop-color="#73573b"/><stop offset="0.4" stop-color="#71553a"/><stop offset="0.45" stop-color="#6f533a"/><stop offset="0.5" stop-color="#6d5139"/><stop offset="0.55" stop-color="#6b5038"/><stop offset="0.6" stop-color="#694e37"/><stop offset="0.65" stop-color="#634a35"/><stop offset="0.7" stop-color="#5e4632"/><stop offset="0.75" stop-color="#584230"/><stop offset="0.8" stop-color="#503c2c"/><stop offset="0.85" stop-color="#453426"/><stop offset="0.9" stop-color="#3d2d21"/><stop offset="0.95" stop-color="#382a1f"/><stop offset="1" stop-color="#34271c"/></linearGradient><linearGradient id="r43" gradientUnits="userSpaceOnUse" x1="800.98" y1="491.09" x2="819.91" y2="520.12"><stop offset="0" stop-color="#725239"/><stop offset="0.05" stop-color="#74553a"/><stop offset="0.1" stop-color="#76573b"/><stop offset="0.15" stop-color="#77583c"/><stop offset="0.2" stop-color="#78593c"/><stop offset="0.25" stop-color="#795a3d"/><stop offset="0.3" stop-color="#7a5c3d"/><stop offset="0.35" stop-color="#775a3c"/><stop offset="0.4" stop-color="#75583c"/><stop offset="0.45" stop-color="#73563b"/><stop offset="0.5" stop-color="#70543a"/><stop offset="0.55" stop-color="#6e5239"/><stop offset="0.6" stop-color="#6c5038"/><stop offset="0.65" stop-color="#664c36"/><stop offset="0.7" stop-color="#614834"/><stop offset="0.75" stop-color="#5b4431"/><stop offset="0.8" stop-color="#553f2e"/><stop offset="0.85" stop-color="#4d3a2a"/><stop offset="0.9" stop-color="#473527"/><stop offset="0.95" stop-color="#433224"/><stop offset="1" stop-color="#3e2f22"/></linearGradient><linearGradient id="r44" gradientUnits="userSpaceOnUse" x1="801.63" y1="490.57" x2="822.77" y2="518.05"><stop offset="0" stop-color="#77563b"/><stop offset="0.05" stop-color="#79583c"/><stop offset="0.1" stop-color="#7a593c"/><stop offset="0.15" stop-color="#7b5b3d"/><stop offset="0.2" stop-color="#7c5c3d"/><stop offset="0.25" stop-color="#7d5d3e"/><stop offset="0.3" stop-color="#7e5f3e"/><stop offset="0.35" stop-color="#7b5c3e"/><stop offset="0.4" stop-color="#795a3d"/><stop offset="0.45" stop-color="#76583c"/><stop offset="0.5" stop-color="#74563b"/><stop offset="0.55" stop-color="#71533a"/><stop offset="0.6" stop-color="#6f5139"/><stop offset="0.65" stop-color="#694e37"/><stop offset="0.7" stop-color="#644a35"/><stop offset="0.75" stop-color="#5e4633"/><stop offset="0.8" stop-color="#594230"/><stop offset="0.85" stop-color="#543e2e"/><stop offset="0.9" stop-color="#4f3b2b"/><stop offset="0.95" stop-color="#4b3829"/><stop offset="1" stop-color="#473526"/></linearGradient><linearGradient id="r45" gradientUnits="userSpaceOnUse" x1="834.62" y1="463.09" x2="856.83" y2="489.75"><stop offset="0" stop-color="#7a583c"/><stop offset="0.05" stop-color="#7b593c"/><stop offset="0.1" stop-color="#7c5b3d"/><stop offset="0.15" stop-color="#7d5c3e"/><stop offset="0.2" stop-color="#7e5d3e"/><stop offset="0.25" stop-color="#7f5f3e"/><stop offset="0.3" stop-color="#80603f"/><stop offset="0.35" stop-color="#7d5e3e"/><stop offset="0.4" stop-color="#7b5b3d"/><stop offset="0.45" stop-color="#78593c"/><stop offset="0.5" stop-color="#75573b"/><stop offset="0.55" stop-color="#73543a"/><stop offset="0.6" stop-color="#705239"/><stop offset="0.65" stop-color="#6a4e37"/><stop offset="0.7" stop-color="#654a35"/><stop offset="0.75" stop-color="#604733"/><stop offset="0.8" stop-color="#5a4331"/><stop offset="0.85" stop-color="#56402f"/><stop offset="0.9" stop-color="#523e2c"/><stop offset="0.95" stop-color="#4e3b2a"/><stop offset="1" stop-color="#4a3828"/></linearGradient><radialGradient id="sph" cx=".4" cy=".35" r=".75"><stop offset="0" stop-color="#fff"/><stop offset=".6" stop-color="#eee"/><stop offset="1" stop-color="#999"/></radialGradient><pattern id="mesh" width="2.2" height="2.2" patternUnits="userSpaceOnUse" patternTransform="rotate(8)"><path d="M0 0H2.2M0 0V2.2" stroke="#5a646e" stroke-width=".45" fill="none"/></pattern></defs><g><path d="M-4.55 433.59 L102.94 476.30 L92.05 503.71 L-15.45 461.01Z" fill="url(#g0)"/><path d="M102.29 476.04 L103.54 476.44 L95.40 504.79 L91.39 503.45Z" fill="url(#g1)"/><path d="M102.87 476.24 L104.16 476.51 L98.84 505.53 L94.73 504.59Z" fill="url(#g2)"/><path d="M103.47 476.38 L104.78 476.53 L102.34 505.92 L98.16 505.39Z" fill="url(#g3)"/><path d="M104.08 476.46 L105.40 476.47 L105.87 505.96 L101.65 505.85Z" fill="url(#g4)"/><path d="M104.70 476.48 L106.01 476.36 L109.37 505.65 L105.17 505.97Z" fill="url(#g5)"/><path d="M105.31 476.44 L106.60 476.19 L112.84 505.00 L108.68 505.73Z" fill="url(#g6)"/><path d="M105.92 476.34 L107.18 475.96 L116.21 504.01 L112.15 505.15Z" fill="url(#g7)"/><path d="M106.51 476.18 L107.73 475.67 L119.48 502.69 L115.55 504.23Z" fill="url(#g8)"/><path d="M107.09 475.96 L108.25 475.34 L122.60 501.06 L118.84 502.98Z" fill="url(#g9)"/><path d="M107.64 475.69 L108.74 474.97 L125.55 499.14 L121.99 501.41Z" fill="url(#g10)"/><path d="M108.17 475.37 L178.47 426.75 L195.03 450.55 L124.98 499.54Z" fill="url(#g11)"/></g><path d="M178.4 426.9 L175.6 428.9 L192 452.4 L194.9 450.6Z" fill="#d2e0e9" fill-opacity=".55"/><g><path d="M215.03 426.06 L258.01 474.78 L232.29 496.38 L191.90 445.48 A15.10 4.60 139.97 0 1 215.03 426.06 Z" fill="url(#b0)"/><path d="M257.56 474.24 L258.41 475.16 L234.65 499.07 L231.84 495.84Z" fill="url(#b1)"/><path d="M257.92 474.65 L258.81 475.53 L237.19 501.59 L234.16 498.57Z" fill="url(#b2)"/><path d="M258.29 475.07 L259.22 475.89 L239.91 503.92 L236.66 501.13Z" fill="url(#b3)"/><path d="M258.65 475.48 L259.62 476.25 L242.81 506.02 L239.35 503.50Z" fill="url(#b4)"/><path d="M259.02 475.89 L260.02 476.61 L245.86 507.87 L242.21 505.66Z" fill="url(#b5)"/><path d="M259.38 476.31 L260.41 476.95 L249.08 509.44 L245.23 507.57Z" fill="url(#b6)"/><path d="M259.75 476.72 L260.79 477.29 L252.43 510.67 L248.42 509.21Z" fill="url(#b7)"/><path d="M260.11 477.13 L261.17 477.63 L255.90 511.53 L251.75 510.51Z" fill="url(#b8)"/><path d="M260.48 477.55 L261.54 477.97 L259.45 511.96 L255.21 511.45Z" fill="url(#b9)"/><path d="M260.84 477.96 L261.93 478.29 L263.03 511.89 L258.75 511.94Z" fill="url(#b10)"/><path d="M261.23 478.35 L262.40 478.50 L266.56 511.28 L262.33 511.94Z" fill="url(#b11)"/><path d="M261.71 478.62 L262.92 478.58 L269.94 510.09 L265.87 511.40Z" fill="url(#b12)"/><path d="M262.24 478.76 L263.45 478.52 L273.21 508.62 L269.26 510.26Z" fill="url(#b13)"/><path d="M262.79 478.76 L263.96 478.33 L276.49 507.17 L272.55 508.86Z" fill="url(#b14)"/><path d="M263.32 478.60 L465.98 389.26 L479.48 420.32 L275.85 507.45Z" fill="url(#b15)"/><path d="M465.34 389.53 L467.23 388.65 L484.37 417.95 L478.83 420.60Z" fill="url(#b16)"/><path d="M466.61 388.97 L468.45 388.01 L489.06 415.20 L483.75 418.28Z" fill="url(#b17)"/><path d="M467.86 388.39 L469.56 387.18 L493.50 412.05 L488.48 415.58Z" fill="url(#b18)"/><path d="M469.02 387.62 L470.53 386.19 L497.60 408.48 L492.95 412.48Z" fill="url(#b19)"/><path d="M470.03 386.68 L471.32 385.05 L501.30 404.49 L497.11 408.98Z" fill="url(#b20)"/><path d="M470.90 385.60 L471.94 383.80 L504.49 400.10 L500.87 405.05Z" fill="url(#b21)"/><path d="M471.60 384.41 L472.39 382.48 L507.07 395.32 L504.14 400.70Z" fill="url(#b22)"/><path d="M472.13 383.13 L472.66 381.11 L508.96 390.23 L506.81 395.97Z" fill="url(#b23)"/><path d="M472.50 381.79 L472.78 379.73 L510.06 384.91 L508.79 390.91Z" fill="url(#b24)"/><path d="M472.71 380.42 L472.75 378.34 L510.34 379.48 L509.99 385.60Z" fill="url(#b25)"/><path d="M472.77 379.04 L472.58 376.96 L509.80 374.07 L510.36 380.18Z" fill="url(#b26)"/><path d="M472.68 377.66 L472.28 375.61 L508.49 368.79 L509.90 374.76Z" fill="url(#b27)"/><path d="M472.45 376.29 L471.87 374.29 L506.51 363.72 L508.66 369.47Z" fill="url(#b28)"/><path d="M472.09 374.95 L471.33 373.01 L504.29 358.75 L506.74 364.38Z" fill="url(#b29)"/><path d="M471.61 373.66 L427.72 271.81 L460.37 257.68 L504.57 359.39Z" fill="url(#b30)"/><path d="M427.99 272.45 L426.17 267.64 L459.90 256.47 L460.64 258.32Z" fill="url(#b31)"/><path d="M426.40 268.30 L424.97 263.35 L459.43 255.27 L460.13 257.14Z" fill="url(#b32)"/><path d="M425.15 264.03 L424.13 258.98 L458.98 254.07 L459.61 255.95Z" fill="url(#b33)"/><path d="M424.25 259.67 L423.66 254.56 L458.55 252.86 L459.09 254.76Z" fill="url(#b34)"/><path d="M423.72 255.25 L423.58 250.11 L458.26 251.62 L458.60 253.56Z" fill="url(#b35)"/><path d="M423.56 250.81 L423.89 245.67 L458.12 250.35 L458.24 252.32Z" fill="url(#b36)"/><path d="M423.80 246.36 L424.60 241.28 L458.15 249.06 L458.04 251.04Z" fill="url(#b37)"/><path d="M424.44 241.96 L425.72 236.97 L458.34 247.80 L457.99 249.75Z" fill="url(#b38)"/><path d="M425.49 237.63 L427.25 232.80 L458.68 246.56 L458.11 248.46Z" fill="url(#b39)"/><path d="M426.95 233.43 L429.19 228.80 L459.18 245.37 L458.38 247.19Z" fill="url(#b40)"/><path d="M428.83 229.40 L431.53 225.02 L459.81 244.25 L458.81 245.97Z" fill="url(#b41)"/><path d="M431.12 225.58 L434.27 221.51 L460.58 243.21 L459.39 244.81Z" fill="url(#b42)"/><path d="M433.80 222.04 L437.37 218.33 L461.46 242.27 L460.11 243.74Z" fill="url(#b43)"/><path d="M436.87 218.81 L440.75 215.42 L462.46 241.44 L460.96 242.75Z" fill="url(#b44)"/><path d="M440.21 215.87 L479.20 182.40 L481.80 226.00 L461.92 241.89Z" fill="url(#b45)"/><path d="M260.95 478.08 Q244.31 483.55 231.84 495.84" fill="none" stroke="#7cc0dc" stroke-width="0.90" stroke-opacity="1.00"/><path d="M263.32 478.60 Q255.43 496.45 269.17 510.30" fill="none" stroke="#7cc0dc" stroke-width="0.90" stroke-opacity="1.00"/><path d="M467.21 388.71 Q466.82 406.92 478.83 420.60" fill="none" stroke="#7cc0dc" stroke-width="0.90" stroke-opacity="1.00"/><path d="M471.61 373.66 Q488.84 367.40 507.02 365.03" fill="none" stroke="#7cc0dc" stroke-width="0.90" stroke-opacity="1.00"/><path d="M427.99 272.45 Q442.41 261.62 458.86 254.22" fill="none" stroke="#7cc0dc" stroke-width="0.90" stroke-opacity="1.00"/><path d="M437.96 217.83 Q447.10 232.68 461.92 241.89" fill="none" stroke="#7cc0dc" stroke-width="0.90" stroke-opacity="1.00"/><path d="M215.03 426.06 L257.56 474.24 L257.92 474.65 L258.29 475.07 L258.65 475.48 L259.02 475.89 L259.38 476.31 L259.75 476.72 L260.11 477.13 L260.48 477.55 L260.84 477.96 L261.23 478.35 L261.71 478.62 L262.24 478.76 L262.79 478.76 L263.32 478.60 L465.34 389.53 L466.61 388.97 L467.86 388.39 L469.02 387.62 L470.03 386.68 L470.90 385.60 L471.60 384.41 L472.13 383.13 L472.50 381.79 L472.71 380.42 L472.77 379.04 L472.68 377.66 L472.45 376.29 L472.09 374.95 L471.61 373.66 L427.99 272.45 L426.40 268.30 L425.15 264.03 L424.25 259.67 L423.72 255.25 L423.56 250.81 L423.80 246.36 L424.44 241.96 L425.49 237.63 L426.95 233.43 L428.83 229.40 L431.12 225.58 L433.80 222.04 L436.87 218.81 L440.21 215.87 L479.20 182.40" fill="none" stroke="#6ab0cc" stroke-width="0.90" stroke-opacity="1.00" stroke-linejoin="round"/><path d="M191.90 445.48 L231.84 495.84 L234.16 498.57 L236.66 501.13 L239.35 503.50 L242.21 505.66 L245.23 507.57 L248.42 509.21 L251.75 510.51 L255.21 511.45 L258.75 511.94 L262.33 511.94 L265.87 511.40 L269.26 510.26 L272.55 508.86 L275.85 507.45 L478.83 420.60 L483.75 418.28 L488.48 415.58 L492.95 412.48 L497.11 408.98 L500.87 405.05 L504.14 400.70 L506.81 395.97 L508.79 390.91 L509.99 385.60 L510.36 380.18 L509.90 374.76 L508.66 369.47 L506.74 364.38 L504.57 359.39 L460.64 258.32 L460.13 257.14 L459.61 255.95 L459.09 254.76 L458.60 253.56 L458.24 252.32 L458.04 251.04 L457.99 249.75 L458.11 248.46 L458.38 247.19 L458.81 245.97 L459.39 244.81 L460.11 243.74 L460.96 242.75 L461.92 241.89 L481.80 226.00" fill="none" stroke="#6ab0cc" stroke-width="0.90" stroke-opacity="1.00" stroke-linejoin="round"/><path d="M191.90 445.48 A15.10 4.60 139.97 0 1 215.03 426.06" fill="none" stroke="#6ab0cc" stroke-width="0.90" stroke-opacity="1.00"/></g><circle cx="456.2" cy="256" r="1.5" fill="#d8e4ea" fill-opacity=".9"/><circle cx="456.2" cy="256" r="3" fill="#5a7a88" fill-opacity=".45"/><path d="M479.5 182.8 L482.8 184 L488.6 192 L486.6 194.6 L480 188.6Z" fill="#2a3338"/><path d="M481 184.6 L487 192.6 M480.4 186.4 L485.6 193.2" stroke="#7a8890" stroke-width=".5" fill="none"/><g><path d="M500.20 181.90 L543.01 212.30 L522.92 241.55 L489.80 219.50 A19.51 6.50 105.46 0 1 500.20 181.90 Z" fill="url(#r0)"/><path d="M542.44 211.90 L546.69 215.13 L523.94 242.39 L522.34 241.15Z" fill="url(#r1)"/><path d="M546.14 214.69 L550.09 218.29 L524.86 243.35 L523.40 241.95Z" fill="url(#r2)"/><path d="M549.58 217.82 L553.17 221.77 L525.66 244.42 L524.35 242.88Z" fill="url(#r3)"/><path d="M552.70 221.25 L555.91 225.52 L526.33 245.57 L525.19 243.90Z" fill="url(#r4)"/><path d="M555.49 224.96 L558.28 229.51 L526.88 246.80 L525.92 245.01Z" fill="url(#r5)"/><path d="M557.92 228.91 L560.27 233.71 L527.29 248.07 L526.52 246.19Z" fill="url(#r6)"/><path d="M559.98 233.07 L561.87 238.07 L527.58 249.37 L527.00 247.43Z" fill="url(#r7)"/><path d="M561.64 237.40 L563.05 242.55 L527.75 250.70 L527.36 248.71Z" fill="url(#r8)"/><path d="M562.90 241.87 L563.82 247.13 L527.81 252.03 L527.60 250.01Z" fill="url(#r9)"/><path d="M563.74 246.44 L564.17 251.76 L527.76 253.36 L527.73 251.33Z" fill="url(#r10)"/><path d="M564.16 251.06 L564.09 256.40 L527.61 254.68 L527.75 252.66Z" fill="url(#r11)"/><path d="M564.15 255.70 L563.60 261.01 L527.36 255.99 L527.66 253.98Z" fill="url(#r12)"/><path d="M563.72 260.32 L562.70 265.56 L527.02 257.27 L527.48 255.30Z" fill="url(#r13)"/><path d="M562.87 264.88 L561.38 270.01 L526.60 258.53 L527.19 256.59Z" fill="url(#r14)"/><path d="M561.60 269.35 L532.95 355.17 L498.08 343.66 L526.82 257.87Z" fill="url(#r15)"/><path d="M533.17 354.51 L532.14 357.76 L497.90 349.81 L498.30 343.00Z" fill="url(#r16)"/><path d="M532.31 357.08 L531.35 360.34 L497.75 355.95 L498.06 349.13Z" fill="url(#r17)"/><path d="M531.45 359.64 L530.56 362.91 L497.67 362.10 L497.86 355.26Z" fill="url(#r18)"/><path d="M530.60 362.21 L529.78 365.48 L497.66 368.23 L497.71 361.40Z" fill="url(#r19)"/><path d="M529.74 364.78 L529.00 368.03 L497.76 374.36 L497.63 367.53Z" fill="url(#r20)"/><path d="M528.88 367.35 L528.23 370.58 L498.01 380.47 L497.64 373.67Z" fill="url(#r21)"/><path d="M528.03 369.91 L527.46 373.12 L498.49 386.56 L497.80 379.80Z" fill="url(#r22)"/><path d="M527.17 372.48 L526.69 375.64 L499.36 392.59 L498.20 385.92Z" fill="url(#r23)"/><path d="M526.31 375.05 L526.40 378.25 L500.89 398.50 L498.99 392.00Z" fill="url(#r24)"/><path d="M525.95 377.71 L527.02 380.83 L503.44 404.04 L500.45 397.96Z" fill="url(#r25)"/><path d="M526.51 380.35 L528.35 383.15 L507.10 408.92 L502.93 403.56Z" fill="url(#r26)"/><path d="M527.79 382.72 L530.19 385.10 L511.58 413.09 L506.55 408.50Z" fill="url(#r27)"/><path d="M529.60 384.74 L532.39 386.66 L516.50 416.74 L510.99 412.72Z" fill="url(#r28)"/><path d="M531.76 386.35 L534.83 387.82 L521.65 420.06 L515.88 416.42Z" fill="url(#r29)"/><path d="M534.19 387.55 L791.81 493.12 L778.56 525.54 L521.00 419.80Z" fill="url(#r30)"/><path d="M791.17 492.85 L792.62 493.35 L781.88 526.73 L777.91 525.27Z" fill="url(#r31)"/><path d="M791.95 493.13 L793.44 493.50 L785.30 527.62 L781.22 526.51Z" fill="url(#r32)"/><path d="M792.76 493.32 L794.28 493.56 L788.78 528.20 L784.62 527.45Z" fill="url(#r33)"/><path d="M793.59 493.44 L795.12 493.54 L792.30 528.47 L788.09 528.08Z" fill="url(#r34)"/><path d="M794.42 493.47 L795.96 493.44 L795.84 528.44 L791.61 528.40Z" fill="url(#r35)"/><path d="M795.26 493.43 L796.78 493.27 L799.36 528.12 L795.14 528.43Z" fill="url(#r36)"/><path d="M796.08 493.31 L797.59 493.02 L802.84 527.52 L798.66 528.17Z" fill="url(#r37)"/><path d="M796.90 493.13 L798.38 492.72 L806.26 526.65 L802.15 527.62Z" fill="url(#r38)"/><path d="M797.70 492.89 L799.14 492.36 L809.61 525.52 L805.58 526.81Z" fill="url(#r39)"/><path d="M798.47 492.58 L799.87 491.94 L812.86 524.15 L808.94 525.74Z" fill="url(#r40)"/><path d="M799.23 492.22 L800.57 491.48 L816.01 522.55 L812.22 524.42Z" fill="url(#r41)"/><path d="M799.95 491.81 L801.24 490.98 L819.04 520.74 L815.39 522.88Z" fill="url(#r42)"/><path d="M800.65 491.35 L801.88 490.43 L821.94 518.72 L818.45 521.11Z" fill="url(#r43)"/><path d="M801.31 490.84 L802.49 489.86 L824.70 516.52 L821.38 519.14Z" fill="url(#r44)"/><path d="M801.95 490.31 L867.29 435.87 A17.35 7.00 50.20 0 1 889.51 462.53 L824.16 516.97 Z" fill="url(#r45)"/><path d="M543.26 212.48 Q531.18 225.64 522.34 241.15" fill="none" stroke="#d58c4c" stroke-width="0.80" stroke-opacity="1.00"/><path d="M561.60 269.35 Q543.28 266.37 526.87 257.71" fill="none" stroke="#d58c4c" stroke-width="0.80" stroke-opacity="1.00"/><path d="M524.60 374.40 Q510.20 373.80 496.80 368.50" fill="none" stroke="#d58c4c" stroke-width="0.80" stroke-opacity="1.00"/><path d="M533.95 387.46 Q529.33 404.37 521.00 419.80" fill="none" stroke="#d58c4c" stroke-width="0.80" stroke-opacity="1.00"/><path d="M791.17 492.85 Q790.46 511.36 778.56 525.54" fill="none" stroke="#d58c4c" stroke-width="0.80" stroke-opacity="1.00"/><path d="M801.42 490.75 Q818.08 499.27 824.16 516.97" fill="none" stroke="#d58c4c" stroke-width="0.80" stroke-opacity="1.00"/><path d="M500.20 181.90 L542.44 211.90 L546.14 214.69 L549.58 217.82 L552.70 221.25 L555.49 224.96 L557.92 228.91 L559.98 233.07 L561.64 237.40 L562.90 241.87 L563.74 246.44 L564.16 251.06 L564.15 255.70 L563.72 260.32 L562.87 264.88 L561.60 269.35 L533.17 354.51 L532.31 357.08 L531.45 359.64 L530.60 362.21 L529.74 364.78 L528.88 367.35 L528.03 369.91 L527.17 372.48 L526.31 375.05 L525.95 377.71 L526.51 380.35 L527.79 382.72 L529.60 384.74 L531.76 386.35 L534.19 387.55 L791.17 492.85 L791.95 493.13 L792.76 493.32 L793.59 493.44 L794.42 493.47 L795.26 493.43 L796.08 493.31 L796.90 493.13 L797.70 492.89 L798.47 492.58 L799.23 492.22 L799.95 491.81 L800.65 491.35 L801.31 490.84 L801.95 490.31 L867.29 435.87" fill="none" stroke="#c07a42" stroke-width="0.75" stroke-opacity="0.85" stroke-linejoin="round"/><path d="M489.80 219.50 L522.34 241.15 L523.40 241.95 L524.35 242.88 L525.19 243.90 L525.92 245.01 L526.52 246.19 L527.00 247.43 L527.36 248.71 L527.60 250.01 L527.73 251.33 L527.75 252.66 L527.66 253.98 L527.48 255.30 L527.19 256.59 L526.82 257.87 L498.30 343.00 L498.06 349.13 L497.86 355.26 L497.71 361.40 L497.63 367.53 L497.64 373.67 L497.80 379.80 L498.20 385.92 L498.99 392.00 L500.45 397.96 L502.93 403.56 L506.55 408.50 L510.99 412.72 L515.88 416.42 L521.00 419.80 L777.91 525.27 L781.22 526.51 L784.62 527.45 L788.09 528.08 L791.61 528.40 L795.14 528.43 L798.66 528.17 L802.15 527.62 L805.58 526.81 L808.94 525.74 L812.22 524.42 L815.39 522.88 L818.45 521.11 L821.38 519.14 L824.16 516.97 L889.51 462.53" fill="none" stroke="#c07a42" stroke-width="0.75" stroke-opacity="0.85" stroke-linejoin="round"/><path d="M489.80 219.50 A19.51 6.50 105.46 0 1 500.20 181.90" fill="none" stroke="#c07a42" stroke-width="0.75" stroke-opacity="0.85"/><path d="M867.29 435.87 A17.35 7.00 50.20 0 1 889.51 462.53" fill="none" stroke="#c07a42" stroke-width="0.75" stroke-opacity="0.85"/></g><path d="M824.6 517.4 Q824.4 514.6 821 511.6 L886.6 459.5 Q888.8 461.2 890.4 462.8 L889.2 464.2 Z" fill="#0f0b08"/><path d="M821 511.6 L886.6 459.5" stroke="#b57a45" stroke-width=".6" fill="none"/><path d="M824.6 517.4 L889.6 463.8" stroke="#c98246" stroke-width=".7" fill="none"/><ellipse cx="523" cy="381.6" rx="3.5" ry="4.5" fill="#120d09" fill-opacity=".45"/><ellipse cx="522.7" cy="381.6" rx="1.5" ry="2.4" fill="#6e6a66"/><ellipse cx="522.7" cy="381.4" rx=".8" ry="1.5" fill="#aaa8a6"/><path d="M478.60 153.20L483.10 248.30M481.00 152.50L485.28 246.73M483.40 151.80L487.45 245.15M485.80 151.10L489.62 243.57M488.20 150.40L491.80 242.00M478.60 153.20L488.20 150.40M478.72 155.70L488.29 152.81M478.84 158.21L488.39 155.22M478.96 160.71L488.48 157.63M479.07 163.21L488.58 160.04M479.19 165.71L488.67 162.45M479.31 168.22L488.77 164.86M479.43 170.72L488.86 167.27M479.55 173.22L488.96 169.68M479.67 175.72L489.05 172.09M479.78 178.23L489.15 174.51M479.90 180.73L489.24 176.92M480.02 183.23L489.34 179.33M480.14 185.73L489.43 181.74M480.26 188.24L489.53 184.15M480.38 190.74L489.62 186.56M480.49 193.24L489.72 188.97M480.61 195.74L489.81 191.38M480.73 198.25L489.91 193.79M480.85 200.75L490.00 196.20M480.97 203.25L490.09 198.61M481.09 205.76L490.19 201.02M481.21 208.26L490.28 203.43M481.32 210.76L490.38 205.84M481.44 213.26L490.47 208.25M481.56 215.77L490.57 210.66M481.68 218.27L490.66 213.07M481.80 220.77L490.76 215.48M481.92 223.27L490.85 217.89M482.03 225.78L490.95 220.31M482.15 228.28L491.04 222.72M482.27 230.78L491.14 225.13M482.39 233.28L491.23 227.54M482.51 235.79L491.33 229.95M482.63 238.29L491.42 232.36M482.74 240.79L491.52 234.77M482.86 243.29L491.61 237.18M482.98 245.80L491.71 239.59M483.10 248.30L491.80 242.00" fill="none" stroke="#525e68" stroke-width="0.42" stroke-opacity="0.75"/><path d="M488.20 150.40L491.80 242.00M490.55 149.72L493.93 240.18M492.90 149.05L496.05 238.35M495.25 148.38L498.18 236.52M497.60 147.70L500.30 234.70M488.20 150.40L497.60 147.70M488.29 152.81L497.67 149.99M488.39 155.22L497.74 152.28M488.48 157.63L497.81 154.57M488.58 160.04L497.88 156.86M488.67 162.45L497.96 159.15M488.77 164.86L498.03 161.44M488.86 167.27L498.10 163.73M488.96 169.68L498.17 166.02M489.05 172.09L498.24 168.31M489.15 174.51L498.31 170.59M489.24 176.92L498.38 172.88M489.34 179.33L498.45 175.17M489.43 181.74L498.52 177.46M489.53 184.15L498.59 179.75M489.62 186.56L498.67 182.04M489.72 188.97L498.74 184.33M489.81 191.38L498.81 186.62M489.91 193.79L498.88 188.91M490.00 196.20L498.95 191.20M490.09 198.61L499.02 193.49M490.19 201.02L499.09 195.78M490.28 203.43L499.16 198.07M490.38 205.84L499.23 200.36M490.47 208.25L499.31 202.65M490.57 210.66L499.38 204.94M490.66 213.07L499.45 207.23M490.76 215.48L499.52 209.52M490.85 217.89L499.59 211.81M490.95 220.31L499.66 214.09M491.04 222.72L499.73 216.38M491.14 225.13L499.80 218.67M491.23 227.54L499.87 220.96M491.33 229.95L499.94 223.25M491.42 232.36L500.02 225.54M491.52 234.77L500.09 227.83M491.61 237.18L500.16 230.12M491.71 239.59L500.23 232.41M491.80 242.00L500.30 234.70" fill="none" stroke="#525e68" stroke-width="0.42" stroke-opacity="0.75"/><path d="M479.60 155.20L484.00 246.60M482.67 154.13L486.73 244.40M485.73 153.07L489.47 242.20M488.80 152.00L492.20 240.00M479.60 155.20L488.80 152.00M479.75 158.25L488.91 154.93M479.89 161.29L489.03 157.87M480.04 164.34L489.14 160.80M480.19 167.39L489.25 163.73M480.33 170.43L489.37 166.67M480.48 173.48L489.48 169.60M480.63 176.53L489.59 172.53M480.77 179.57L489.71 175.47M480.92 182.62L489.82 178.40M481.07 185.67L489.93 181.33M481.21 188.71L490.05 184.27M481.36 191.76L490.16 187.20M481.51 194.81L490.27 190.13M481.65 197.85L490.39 193.07M481.80 200.90L490.50 196.00M481.95 203.95L490.61 198.93M482.09 206.99L490.73 201.87M482.24 210.04L490.84 204.80M482.39 213.09L490.95 207.73M482.53 216.13L491.07 210.67M482.68 219.18L491.18 213.60M482.83 222.23L491.29 216.53M482.97 225.27L491.41 219.47M483.12 228.32L491.52 222.40M483.27 231.37L491.63 225.33M483.41 234.41L491.75 228.27M483.56 237.46L491.86 231.20M483.71 240.51L491.97 234.13M483.85 243.55L492.09 237.07M484.00 246.60L492.20 240.00" fill="none" stroke="#6a7680" stroke-width="0.35" stroke-opacity="0.45"/><path d="M488.80 152.00L492.20 240.00M491.53 151.20L494.67 237.80M494.27 150.40L497.13 235.60M497.00 149.60L499.60 233.40M488.80 152.00L497.00 149.60M488.91 154.93L497.09 152.39M489.03 157.87L497.17 155.19M489.14 160.80L497.26 157.98M489.25 163.73L497.35 160.77M489.37 166.67L497.43 163.57M489.48 169.60L497.52 166.36M489.59 172.53L497.61 169.15M489.71 175.47L497.69 171.95M489.82 178.40L497.78 174.74M489.93 181.33L497.87 177.53M490.05 184.27L497.95 180.33M490.16 187.20L498.04 183.12M490.27 190.13L498.13 185.91M490.39 193.07L498.21 188.71M490.50 196.00L498.30 191.50M490.61 198.93L498.39 194.29M490.73 201.87L498.47 197.09M490.84 204.80L498.56 199.88M490.95 207.73L498.65 202.67M491.07 210.67L498.73 205.47M491.18 213.60L498.82 208.26M491.29 216.53L498.91 211.05M491.41 219.47L498.99 213.85M491.52 222.40L499.08 216.64M491.63 225.33L499.17 219.43M491.75 228.27L499.25 222.23M491.86 231.20L499.34 225.02M491.97 234.13L499.43 227.81M492.09 237.07L499.51 230.61M492.20 240.00L499.60 233.40" fill="none" stroke="#6a7680" stroke-width="0.35" stroke-opacity="0.45"/><path d="M488.2 150.4 L491.8 242" stroke="#4a545e" stroke-width=".7" fill="none"/><g transform="rotate(-17 490.3 196.2)"><circle cx="490.3" cy="196.2" r="5.8" fill="url(#sph)"/><path d="M490.30 190.40 A5.8 5.8 0 0 0 484.50 196.20 L490.30 196.20Z" fill="#080808"/><path d="M490.30 202.00 A5.8 5.8 0 0 0 496.10 196.20 L490.30 196.20Z" fill="#080808"/></g><g fill="none" stroke="#3f5c70" stroke-linecap="round"><rect x="435.7" y="115.5" width="8.9" height="8.6" rx="1.2" stroke-width=".8" stroke-opacity=".5"/><circle cx="444" cy="123.7" r="3" stroke-width="1.2"/><path d="M446.4 126.2 L449.8 129.3" stroke-width="1.7"/><path d="M443 123.8 l.8 .8 l1.300 -1.600" stroke-width=".5" stroke-opacity=".8"/><circle cx="463.4" cy="121.3" r="5.100" stroke-width="1.5"/><path d="M467.4 125 L471.5 129.200" stroke-width="2.2"/></g><rect x="477.1" y="113.4" width="18.8" height="18.6" fill="#a9868c"/><g stroke="#3f5c70" fill="#3f5c70"><path d="M486.5 117 V129 M481 123 H492" fill="none" stroke-width="1.3"/><path d="M481.4 123 H491.6" fill="none" stroke-width="2.1" stroke-opacity=".75"/><path d="M486.5 114.6 l2 2.900 h-4z M486.5 131.2 l2 -2.900 h-4z M478.4 123 l3 -2.100 v4.200z M494.600 123 l-3 -2.100 v4.200z" stroke-width=".3"/></g><g fill="none" stroke="#3f5c70"><path d="M503.600 118.600 A6.200 6.200 0 1 1 503.200 127.400" stroke-width="1.5"/></g><path d="M500.700 116 L501.100 121.400 L506.400 120.500Z" fill="#3f5c70"/><g fill="none" stroke="#3f5c70" stroke-width="1.4"><path d="M523.4 116.8 l2.8 2.8 M523.0 116.5 h2.7 M523.1 116.4 v2.7"/><path d="M536.4 116.8 l-2.8 2.8 M536.8 116.5 h-2.7 M536.7 116.4 v2.7"/><path d="M523.4 128.8 l2.8 -2.8 M523.0 129.1 h2.7 M523.1 129.2 v-2.7"/><path d="M536.4 128.8 l-2.8 -2.8 M536.8 129.1 h-2.7 M536.7 129.2 v-2.7"/></g><path d="M32 578.2 H45" stroke="#f0601a" stroke-width="1.6"/><path d="M52.6 578.2 L44 575.6 L44 580.8Z" fill="#f0601a"/><path d="M31.6 579 V591.6" stroke="#333" stroke-width="1.6"/><path d="M31.7 599 L29 590.6 L34.4 590.6Z" fill="#222"/><circle cx="30.6" cy="577.400" r="2" fill="#9a9a9a" stroke="#4a4a4a" stroke-width=".6"/><circle cx="28.400" cy="580.800" r="2.1" fill="#8a8a8a" stroke="#444" stroke-width=".6"/><rect x="18.8" y="134" width="6.3" height="18.2" fill="#78ea14"/></svg><span class="lg" style="left:30.6px;top:130.1px">+0.1</span><span class="lg" style="left:30.6px;top:148.7px">-0.1</span><svg width="905" height="606" viewBox="0 0 905 606" style="left:0;top:0"><path d="M20.35 5.10 H884.70 A15.80 15.80 0 0 1 900.50 20.90 V584.80 A15.80 15.80 0 0 1 884.70 600.60 H20.35 A15.80 15.80 0 0 1 4.55 584.80 V20.90 A15.80 15.80 0 0 1 20.35 5.10Z" fill="none" stroke="#fff" stroke-opacity=".5" stroke-width="1.8" clip-path="inset(111px 0 0 450px)" style="clip-path:polygon(60% 18.4%,100% 18.4%,100% 100%,0 100%,0 97%,60% 97%)"/><path d="M0 0H905V606H0Z M20.30 0.75 H884.40 A20.00 20.00 0 0 1 904.40 20.75 V585.15 A20.00 20.00 0 0 1 884.40 605.15 H20.30 A20.00 20.00 0 0 1 0.30 585.15 V20.75 A20.00 20.00 0 0 1 20.30 0.75Z" fill="#fff" fill-rule="evenodd"/><path d="M20.30 0.75 H884.40 A20.00 20.00 0 0 1 904.40 20.75 V585.15 A20.00 20.00 0 0 1 884.40 605.15 H20.30 A20.00 20.00 0 0 1 0.30 585.15 V20.75 A20.00 20.00 0 0 1 20.30 0.75Z M20.35 5.10 H884.70 A15.80 15.80 0 0 1 900.50 20.90 V584.80 A15.80 15.80 0 0 1 884.70 600.60 H20.35 A15.80 15.80 0 0 1 4.55 584.80 V20.90 A15.80 15.80 0 0 1 20.35 5.10Z" fill="#ec7b16" fill-rule="evenodd"/></svg></div></body></html>
